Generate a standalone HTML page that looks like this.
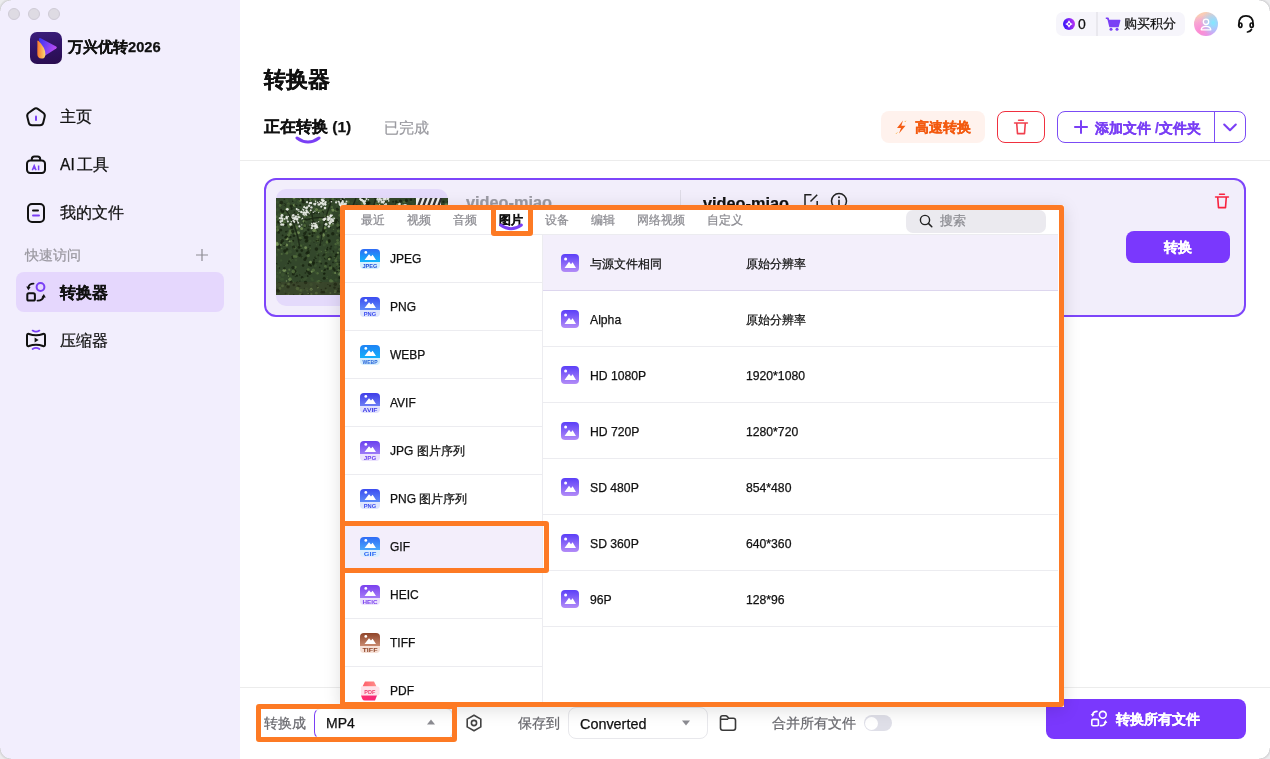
<!DOCTYPE html>
<html><head><meta charset="utf-8">
<style>
*{box-sizing:border-box;margin:0;padding:0}
html,body{width:1270px;height:759px;overflow:hidden;background:#fff;font-family:"Liberation Sans",sans-serif;color:#111}
.a{position:absolute}
.t{white-space:nowrap;will-change:transform;-webkit-text-stroke-width:0.25px}
svg{display:block}
</style></head><body>
<div class="a" style="left:0px;top:0px;width:240px;height:759px;background:#f2eefd"></div>
<div class="a" style="left:8px;top:8px;width:12px;height:12px;border-radius:50%;background:#dedbe3;border:1px solid #cfcbd6"></div>
<div class="a" style="left:28px;top:8px;width:12px;height:12px;border-radius:50%;background:#dedbe3;border:1px solid #cfcbd6"></div>
<div class="a" style="left:48px;top:8px;width:12px;height:12px;border-radius:50%;background:#dedbe3;border:1px solid #cfcbd6"></div>
<div class="a" style="left:30px;top:32px;width:32px;height:32px;border-radius:7px;background:linear-gradient(170deg,#3b1e7c 0%,#2f1262 55%,#2a0d4e 100%);overflow:hidden">
<svg width="32" height="32" viewBox="0 0 32 32"><defs>
<linearGradient id="lg1" x1="0" y1="0.2" x2="1" y2="0.6"><stop offset="0" stop-color="#3d35f5"/><stop offset="1" stop-color="#c24cf3"/></linearGradient>
<linearGradient id="lg2" x1="0" y1="0" x2="1" y2="0"><stop offset="0" stop-color="#f7762c"/><stop offset="1" stop-color="#fddc74"/></linearGradient></defs>
<path d="M8.8 6.8 Q9.6 5.6 11.2 6.4 L26.2 14.6 Q27.6 15.6 26.2 16.6 L14.5 24 Q12.5 25 12 23 Z" fill="url(#lg1)"/>
<path d="M7.4 9.2 Q7.6 8 8.6 9 Q15.6 16 15.4 22.4 Q15.2 26.6 11.5 26.6 Q7.4 26.4 7.3 22 Z" fill="url(#lg2)"/>
</svg></div>
<div class="a t" style="left:68px;top:38px;font-size:14.7px;line-height:19px;color:#111;font-weight:bold;">万兴优转2026</div>
<svg class="a" style="left:24px;top:105px" width="24" height="24" viewBox="0 0 24 24"><path d="M9.88 4.10Q12.00 2.60 14.12 4.10L19.18 7.70Q21.30 9.20 20.68 11.73L19.22 17.67Q18.60 20.20 16.00 20.20L8.00 20.20Q5.40 20.20 4.78 17.67L3.32 11.73Q2.70 9.20 4.82 7.70Z" fill="none" stroke="#111" stroke-width="2"/><path d="M12 11.5 V15" stroke="#7a3ff5" stroke-width="2" stroke-linecap="round"/></svg>
<div class="a t" style="left:60px;top:107px;font-size:15.6px;line-height:20px;color:#111;">主页</div>
<svg class="a" style="left:24px;top:153px" width="24" height="24" viewBox="0 0 24 24"><rect x="3" y="7.5" width="18" height="12.5" rx="3.2" fill="none" stroke="#111" stroke-width="2"/><path d="M7.8 7.5 V6.2 Q7.8 3.6 10.4 3.6 H13.6 Q16.2 3.6 16.2 6.2 V7.5" fill="none" stroke="#111" stroke-width="2"/><path d="M8.3 17.2 L10.2 12.6 L12.1 17.2 M9 15.6 H11.4 M14.6 12.6 V17.2" fill="none" stroke="#7a3ff5" stroke-width="1.5"/></svg>
<div class="a t" style="left:60px;top:155px;font-size:15.6px;line-height:20px;color:#111;word-spacing:-2px">AI 工具</div>
<svg class="a" style="left:24px;top:201px" width="24" height="24" viewBox="0 0 24 24"><rect x="4" y="3" width="16" height="18" rx="4" fill="none" stroke="#111" stroke-width="2"/><path d="M9 9.5 H14" stroke="#111" stroke-width="2" stroke-linecap="round"/><path d="M9 14.5 H15" stroke="#7a3ff5" stroke-width="2" stroke-linecap="round"/></svg>
<div class="a t" style="left:60px;top:203px;font-size:15.6px;line-height:20px;color:#111;">我的文件</div>
<div class="a t" style="left:25px;top:246px;font-size:14px;line-height:18px;color:#9a98a0;">快速访问</div>
<svg class="a" style="left:195px;top:248px" width="14" height="14" viewBox="0 0 14 14"><path d="M7 1 V13 M1 7 H13" stroke="#8e8c94" stroke-width="1.2"/></svg>
<div class="a" style="left:16px;top:272px;width:208px;height:40px;border-radius:8px;background:#e5d7fd"></div>
<svg class="a" style="left:24px;top:281px" width="24" height="24" viewBox="0 0 24 24"><circle cx="16.5" cy="6" r="3.9" fill="none" stroke="#7a3ff5" stroke-width="2"/><rect x="3.3" y="12.3" width="7.6" height="7.2" rx="1.6" fill="none" stroke="#111" stroke-width="2"/><path d="M9.5 2.6 Q5 2.6 4.3 6.5" fill="none" stroke="#111" stroke-width="1.9" stroke-linecap="round"/><path d="M2.2 5.6 L4.3 9.2 L6.6 6.2 Z" fill="#111"/><path d="M13.5 19.6 Q18.5 19.8 19.6 15.5" fill="none" stroke="#111" stroke-width="1.9" stroke-linecap="round"/><path d="M17.4 16.6 L19.8 13 L21.8 16.6 Z" fill="#111"/></svg>
<div class="a t" style="left:60px;top:283px;font-size:15.6px;line-height:20px;color:#111;font-weight:bold;">转换器</div>
<svg class="a" style="left:24px;top:329px" width="24" height="24" viewBox="0 0 24 24"><path d="M5 5 Q12 7.6 19 5 Q21 4.4 21 6.6 V15.4 Q21 17.6 19 17 Q12 14.4 5 17 Q3 17.6 3 15.4 V6.6 Q3 4.4 5 5 Z" fill="none" stroke="#111" stroke-width="2" stroke-linejoin="round"/><path d="M10.6 8.6 L14.6 11 L10.6 13.4 Z" fill="#111"/><path d="M8.6 1.6 Q12 3.8 15.4 1.6 M8.6 20 Q12 17.8 15.4 20" fill="none" stroke="#7a3ff5" stroke-width="1.8" stroke-linecap="round"/></svg>
<div class="a t" style="left:60px;top:331px;font-size:15.6px;line-height:20px;color:#111;">压缩器</div>
<div class="a" style="left:1056px;top:12px;width:129px;height:24px;border-radius:7px;background:#f6f5fb"></div>
<div class="a" style="left:1096px;top:12px;width:2px;height:24px;background:#e9e8ee"></div>
<svg class="a" style="left:1063px;top:18px" width="12" height="12" viewBox="0 0 12 12"><defs><linearGradient id="cg" x1="0" y1="0.3" x2="1" y2="0.1"><stop offset="0" stop-color="#3a16fa"/><stop offset="1" stop-color="#c437f2"/></linearGradient></defs><circle cx="6" cy="6" r="6" fill="url(#cg)"/><path d="M6 2.3 Q7 5 9.7 6 Q7 7 6 9.7 Q5 7 2.3 6 Q5 5 6 2.3 Z" fill="#fff"/><circle cx="6" cy="6" r="1" fill="#7a2af5"/></svg>
<div class="a t" style="left:1078px;top:15px;font-size:14px;line-height:18px;color:#111;">0</div>
<svg class="a" style="left:1105px;top:17px" width="16" height="14" viewBox="0 0 16 14"><path d="M0.8 1.2 H3 L5 9.5 H13 L14.6 3.5 H4" fill="#7a3ff5" stroke="#7a3ff5" stroke-width="1.6" stroke-linejoin="round"/><circle cx="6" cy="12.3" r="1.5" fill="#7a3ff5"/><circle cx="12" cy="12.3" r="1.5" fill="#7a3ff5"/></svg>
<div class="a t" style="left:1124px;top:15px;font-size:13px;line-height:18px;color:#111;">购买积分</div>
<div class="a" style="left:1194px;top:12px;width:24px;height:24px;border-radius:50%;background:radial-gradient(circle at 80% 45%,#7fe9ff 0%,rgba(127,233,255,0) 55%),radial-gradient(circle at 25% 80%,#ff8ccf 0%,rgba(255,140,207,0) 60%),linear-gradient(160deg,#ffd9a0,#e9a8f5 60%,#c79cff)"></div>
<svg class="a" style="left:1199px;top:17px" width="14" height="14" viewBox="0 0 14 14"><circle cx="7" cy="4.8" r="2.7" fill="none" stroke="#fff" stroke-width="1.3"/><path d="M2.2 12.8 Q2.5 9.3 7 9.3 Q11.5 9.3 11.8 12.8 Z" fill="none" stroke="#fff" stroke-width="1.3" stroke-linejoin="round"/></svg>
<svg class="a" style="left:1236px;top:13px" width="22" height="22" viewBox="0 0 22 22"><path d="M3 10.5 Q3 2.8 10 2.8 Q17 2.8 17 10.5 V12.5" fill="none" stroke="#111" stroke-width="1.8"/><path d="M3 10.5 V12.8" stroke="#111" stroke-width="1.8"/><ellipse cx="4.3" cy="12.2" rx="1.6" ry="2.2" fill="none" stroke="#111" stroke-width="1.7"/><ellipse cx="15.7" cy="12.2" rx="1.6" ry="2.2" fill="none" stroke="#111" stroke-width="1.7"/><path d="M15.5 16.5 Q14.5 18.5 11.5 19" fill="none" stroke="#111" stroke-width="1.7" stroke-linecap="round"/></svg>
<div class="a t" style="left:264px;top:67px;font-size:21.6px;line-height:26px;color:#111;font-weight:bold;">转换器</div>
<div class="a t" style="left:264px;top:117px;font-size:15.5px;line-height:20px;color:#111;font-weight:bold;">正在转换 (1)</div>
<svg class="a" style="left:294px;top:134px" width="28" height="12" viewBox="0 0 28 12"><path d="M3 4 Q14 12 25 4" fill="none" stroke="#7a3ff5" stroke-width="3" stroke-linecap="round"/></svg>
<div class="a t" style="left:384px;top:118px;font-size:15.4px;line-height:20px;color:#9a9aa0;">已完成</div>
<div class="a" style="left:881px;top:111px;width:104px;height:32px;border-radius:8px;background:#fff2ed"></div>
<svg class="a" style="left:894px;top:120px" width="14" height="14" viewBox="0 0 14 14"><path d="M9 0.5 L3 8 H7 L5 13.5 L11.5 5.8 H7.3 Z" fill="#f55d14"/><path d="M3.3 12.5 L2 13.8 M11.8 0.8 L10.8 2" stroke="#f9b24a" stroke-width="1"/></svg>
<div class="a t" style="left:915px;top:118px;font-size:14px;line-height:18px;color:#f35a10;font-weight:bold;">高速转换</div>
<div class="a" style="left:997px;top:111px;width:48px;height:32px;border-radius:8px;border:1.5px solid #f0303f"></div>
<svg class="a" style="left:1012px;top:118px" width="18" height="18" viewBox="0 0 18 18"><path d="M6.6 2.2 H11.4 M2.6 5 H15.4 M4.7 5 L5.5 15.6 H12.5 L13.3 5" fill="none" stroke="#f0404e" stroke-width="1.6" stroke-linejoin="round" stroke-linecap="round"/></svg>
<div class="a" style="left:1057px;top:111px;width:189px;height:32px;border-radius:8px;border:1.5px solid #7b4cf5"></div>
<div class="a" style="left:1214px;top:111px;width:1.2px;height:32px;background:#7b4cf5"></div>
<svg class="a" style="left:1073px;top:119px" width="16" height="16" viewBox="0 0 16 16"><path d="M8 1.2 V14.8 M1.2 8 H14.8" stroke="#7a3ff5" stroke-width="2"/></svg>
<div class="a t" style="left:1095px;top:119px;font-size:14px;line-height:18px;color:#7a3ff5;font-weight:bold;">添加文件 /文件夹</div>
<svg class="a" style="left:1222px;top:119px" width="16" height="16" viewBox="0 0 16 16"><path d="M2.2 5.6 L8 11.2 L13.8 5.6" fill="none" stroke="#7a3ff5" stroke-width="2.1" stroke-linecap="round" stroke-linejoin="round"/></svg>
<div class="a" style="left:240px;top:160px;width:1030px;height:1px;background:#ececec"></div>
<div class="a" style="left:264px;top:178px;width:982px;height:139px;border-radius:12px;border:2px solid #7d45fa;background:#f2eefb"></div>
<div class="a" style="left:276px;top:189px;width:172px;height:117px;border-radius:10px;background:#e4dafb"></div>
<svg class="a" style="left:276px;top:198px" width="172" height="97" viewBox="0 0 172 97"><rect width="172" height="97" fill="#33472b"/><circle cx="107.1" cy="72.0" r="1.5" fill="#7d9a5c" opacity="0.8"/><circle cx="127.3" cy="89.5" r="0.5" fill="#3c5431" opacity="0.8"/><circle cx="162.3" cy="63.0" r="1.7" fill="#17220f" opacity="0.8"/><circle cx="80.7" cy="23.9" r="1.2" fill="#3c5431" opacity="0.8"/><circle cx="2.3" cy="21.0" r="0.9" fill="#55703f" opacity="0.8"/><circle cx="131.7" cy="15.5" r="1.5" fill="#17220f" opacity="0.8"/><circle cx="106.2" cy="12.3" r="0.5" fill="#55703f" opacity="0.8"/><circle cx="36.0" cy="20.9" r="1.8" fill="#55703f" opacity="0.8"/><circle cx="49.8" cy="93.3" r="1.2" fill="#3c5431" opacity="0.8"/><circle cx="35.2" cy="91.3" r="1.4" fill="#7d9a5c" opacity="0.8"/><circle cx="153.7" cy="29.0" r="1.0" fill="#17220f" opacity="0.8"/><circle cx="25.1" cy="6.3" r="0.9" fill="#3c5431" opacity="0.8"/><circle cx="0.6" cy="65.8" r="0.9" fill="#17220f" opacity="0.8"/><circle cx="140.8" cy="46.6" r="0.9" fill="#3c5431" opacity="0.8"/><circle cx="121.2" cy="5.5" r="1.8" fill="#17220f" opacity="0.8"/><circle cx="129.0" cy="82.0" r="0.5" fill="#55703f" opacity="0.8"/><circle cx="63.0" cy="56.1" r="0.5" fill="#17220f" opacity="0.8"/><circle cx="31.1" cy="92.7" r="0.8" fill="#55703f" opacity="0.8"/><circle cx="159.9" cy="91.4" r="0.9" fill="#17220f" opacity="0.8"/><circle cx="90.2" cy="75.2" r="0.6" fill="#55703f" opacity="0.8"/><circle cx="137.1" cy="83.4" r="0.5" fill="#7d9a5c" opacity="0.8"/><circle cx="15.7" cy="33.1" r="1.3" fill="#55703f" opacity="0.8"/><circle cx="58.5" cy="89.6" r="1.2" fill="#17220f" opacity="0.8"/><circle cx="54.5" cy="17.2" r="0.6" fill="#17220f" opacity="0.8"/><circle cx="118.5" cy="96.7" r="0.7" fill="#17220f" opacity="0.8"/><circle cx="169.7" cy="51.8" r="1.0" fill="#17220f" opacity="0.8"/><circle cx="102.2" cy="80.2" r="1.1" fill="#3c5431" opacity="0.8"/><circle cx="9.6" cy="88.9" r="0.5" fill="#3c5431" opacity="0.8"/><circle cx="144.2" cy="12.7" r="1.5" fill="#7d9a5c" opacity="0.8"/><circle cx="108.4" cy="76.4" r="0.6" fill="#3c5431" opacity="0.8"/><circle cx="25.7" cy="81.9" r="0.9" fill="#3c5431" opacity="0.8"/><circle cx="171.9" cy="82.7" r="1.8" fill="#3c5431" opacity="0.8"/><circle cx="84.0" cy="70.8" r="1.1" fill="#17220f" opacity="0.8"/><circle cx="69.5" cy="14.2" r="1.0" fill="#7d9a5c" opacity="0.8"/><circle cx="165.1" cy="60.8" r="1.1" fill="#17220f" opacity="0.8"/><circle cx="15.3" cy="26.4" r="1.5" fill="#55703f" opacity="0.8"/><circle cx="62.1" cy="76.2" r="1.5" fill="#3c5431" opacity="0.8"/><circle cx="114.2" cy="73.7" r="1.0" fill="#3c5431" opacity="0.8"/><circle cx="48.3" cy="47.1" r="1.5" fill="#3c5431" opacity="0.8"/><circle cx="50.5" cy="91.7" r="1.3" fill="#3c5431" opacity="0.8"/><circle cx="2.0" cy="53.1" r="0.8" fill="#3c5431" opacity="0.8"/><circle cx="79.6" cy="79.2" r="1.3" fill="#55703f" opacity="0.8"/><circle cx="59.8" cy="62.5" r="1.5" fill="#55703f" opacity="0.8"/><circle cx="60.2" cy="81.8" r="1.6" fill="#3c5431" opacity="0.8"/><circle cx="167.9" cy="92.8" r="1.2" fill="#3c5431" opacity="0.8"/><circle cx="28.6" cy="81.2" r="1.7" fill="#3c5431" opacity="0.8"/><circle cx="118.9" cy="69.8" r="1.4" fill="#17220f" opacity="0.8"/><circle cx="134.2" cy="56.3" r="1.4" fill="#3c5431" opacity="0.8"/><circle cx="107.3" cy="75.1" r="1.3" fill="#3c5431" opacity="0.8"/><circle cx="4.8" cy="15.5" r="1.1" fill="#3c5431" opacity="0.8"/><circle cx="37.7" cy="66.5" r="1.3" fill="#17220f" opacity="0.8"/><circle cx="81.1" cy="21.9" r="0.6" fill="#17220f" opacity="0.8"/><circle cx="54.6" cy="17.6" r="0.8" fill="#17220f" opacity="0.8"/><circle cx="80.0" cy="36.9" r="1.3" fill="#3c5431" opacity="0.8"/><circle cx="40.9" cy="87.6" r="0.5" fill="#17220f" opacity="0.8"/><circle cx="47.9" cy="39.8" r="0.6" fill="#55703f" opacity="0.8"/><circle cx="64.3" cy="3.5" r="1.3" fill="#17220f" opacity="0.8"/><circle cx="93.8" cy="32.9" r="1.3" fill="#7d9a5c" opacity="0.8"/><circle cx="140.8" cy="40.7" r="1.6" fill="#3c5431" opacity="0.8"/><circle cx="63.5" cy="13.8" r="1.3" fill="#3c5431" opacity="0.8"/><circle cx="164.6" cy="93.9" r="1.3" fill="#17220f" opacity="0.8"/><circle cx="153.7" cy="0.1" r="0.6" fill="#3c5431" opacity="0.8"/><circle cx="105.8" cy="13.6" r="1.3" fill="#55703f" opacity="0.8"/><circle cx="64.6" cy="41.9" r="0.8" fill="#17220f" opacity="0.8"/><circle cx="167.3" cy="36.8" r="1.7" fill="#55703f" opacity="0.8"/><circle cx="102.5" cy="25.2" r="1.8" fill="#3c5431" opacity="0.8"/><circle cx="71.5" cy="31.0" r="1.8" fill="#3c5431" opacity="0.8"/><circle cx="49.3" cy="46.3" r="0.7" fill="#3c5431" opacity="0.8"/><circle cx="76.3" cy="28.4" r="1.5" fill="#55703f" opacity="0.8"/><circle cx="2.3" cy="51.7" r="0.9" fill="#55703f" opacity="0.8"/><circle cx="134.5" cy="23.8" r="0.8" fill="#17220f" opacity="0.8"/><circle cx="170.1" cy="28.4" r="1.3" fill="#3c5431" opacity="0.8"/><circle cx="110.9" cy="58.6" r="1.5" fill="#17220f" opacity="0.8"/><circle cx="130.8" cy="29.2" r="1.2" fill="#17220f" opacity="0.8"/><circle cx="51.1" cy="51.4" r="1.1" fill="#17220f" opacity="0.8"/><circle cx="128.1" cy="57.3" r="0.5" fill="#17220f" opacity="0.8"/><circle cx="78.4" cy="88.9" r="1.7" fill="#3c5431" opacity="0.8"/><circle cx="2.5" cy="75.5" r="1.1" fill="#3c5431" opacity="0.8"/><circle cx="121.8" cy="61.3" r="1.1" fill="#55703f" opacity="0.8"/><circle cx="66.3" cy="38.0" r="1.6" fill="#17220f" opacity="0.8"/><circle cx="51.0" cy="80.5" r="0.6" fill="#55703f" opacity="0.8"/><circle cx="119.5" cy="42.0" r="0.9" fill="#55703f" opacity="0.8"/><circle cx="156.6" cy="13.8" r="1.1" fill="#3c5431" opacity="0.8"/><circle cx="85.6" cy="32.1" r="0.7" fill="#3c5431" opacity="0.8"/><circle cx="139.6" cy="6.6" r="0.8" fill="#55703f" opacity="0.8"/><circle cx="136.2" cy="64.4" r="0.5" fill="#3c5431" opacity="0.8"/><circle cx="168.3" cy="96.8" r="1.4" fill="#17220f" opacity="0.8"/><circle cx="144.8" cy="21.3" r="1.3" fill="#7d9a5c" opacity="0.8"/><circle cx="122.5" cy="13.1" r="0.9" fill="#55703f" opacity="0.8"/><circle cx="25.8" cy="59.2" r="1.0" fill="#17220f" opacity="0.8"/><circle cx="107.1" cy="4.2" r="0.6" fill="#17220f" opacity="0.8"/><circle cx="12.4" cy="5.6" r="1.2" fill="#55703f" opacity="0.8"/><circle cx="151.1" cy="13.0" r="1.1" fill="#17220f" opacity="0.8"/><circle cx="103.2" cy="47.5" r="1.7" fill="#17220f" opacity="0.8"/><circle cx="9.6" cy="67.6" r="0.7" fill="#3c5431" opacity="0.8"/><circle cx="87.0" cy="88.3" r="1.2" fill="#3c5431" opacity="0.8"/><circle cx="45.3" cy="53.5" r="0.8" fill="#55703f" opacity="0.8"/><circle cx="88.9" cy="13.0" r="0.8" fill="#17220f" opacity="0.8"/><circle cx="126.7" cy="17.4" r="1.4" fill="#3c5431" opacity="0.8"/><circle cx="14.7" cy="64.8" r="0.6" fill="#17220f" opacity="0.8"/><circle cx="102.2" cy="23.1" r="1.6" fill="#3c5431" opacity="0.8"/><circle cx="55.6" cy="77.3" r="0.5" fill="#3c5431" opacity="0.8"/><circle cx="9.2" cy="14.6" r="1.7" fill="#3c5431" opacity="0.8"/><circle cx="38.4" cy="11.3" r="1.8" fill="#3c5431" opacity="0.8"/><circle cx="141.1" cy="13.6" r="1.3" fill="#17220f" opacity="0.8"/><circle cx="40.4" cy="32.3" r="1.3" fill="#17220f" opacity="0.8"/><circle cx="66.3" cy="13.2" r="1.6" fill="#3c5431" opacity="0.8"/><circle cx="138.4" cy="42.0" r="1.6" fill="#3c5431" opacity="0.8"/><circle cx="101.9" cy="55.6" r="1.5" fill="#17220f" opacity="0.8"/><circle cx="16.7" cy="3.2" r="0.8" fill="#17220f" opacity="0.8"/><circle cx="153.0" cy="46.7" r="1.5" fill="#17220f" opacity="0.8"/><circle cx="80.9" cy="86.3" r="1.3" fill="#3c5431" opacity="0.8"/><circle cx="80.1" cy="9.7" r="0.7" fill="#17220f" opacity="0.8"/><circle cx="64.4" cy="37.4" r="1.6" fill="#17220f" opacity="0.8"/><circle cx="43.7" cy="26.9" r="0.7" fill="#17220f" opacity="0.8"/><circle cx="40.4" cy="46.8" r="0.5" fill="#55703f" opacity="0.8"/><circle cx="63.5" cy="91.0" r="1.4" fill="#3c5431" opacity="0.8"/><circle cx="81.1" cy="91.7" r="0.7" fill="#3c5431" opacity="0.8"/><circle cx="50.1" cy="65.4" r="1.4" fill="#17220f" opacity="0.8"/><circle cx="34.6" cy="2.4" r="0.8" fill="#17220f" opacity="0.8"/><circle cx="69.0" cy="94.4" r="1.0" fill="#17220f" opacity="0.8"/><circle cx="80.5" cy="27.5" r="1.5" fill="#3c5431" opacity="0.8"/><circle cx="28.1" cy="23.3" r="1.4" fill="#7d9a5c" opacity="0.8"/><circle cx="111.1" cy="41.8" r="1.8" fill="#17220f" opacity="0.8"/><circle cx="10.5" cy="75.6" r="1.0" fill="#17220f" opacity="0.8"/><circle cx="94.3" cy="96.0" r="1.2" fill="#17220f" opacity="0.8"/><circle cx="16.1" cy="6.9" r="1.7" fill="#3c5431" opacity="0.8"/><circle cx="160.9" cy="5.2" r="0.8" fill="#17220f" opacity="0.8"/><circle cx="68.3" cy="5.8" r="0.8" fill="#17220f" opacity="0.8"/><circle cx="52.6" cy="5.0" r="0.5" fill="#7d9a5c" opacity="0.8"/><circle cx="30.9" cy="49.3" r="1.0" fill="#3c5431" opacity="0.8"/><circle cx="14.5" cy="30.4" r="0.6" fill="#3c5431" opacity="0.8"/><circle cx="158.5" cy="58.0" r="1.6" fill="#17220f" opacity="0.8"/><circle cx="3.0" cy="52.3" r="1.1" fill="#3c5431" opacity="0.8"/><circle cx="64.8" cy="60.6" r="1.4" fill="#55703f" opacity="0.8"/><circle cx="52.9" cy="43.6" r="1.6" fill="#17220f" opacity="0.8"/><circle cx="19.9" cy="30.2" r="0.6" fill="#55703f" opacity="0.8"/><circle cx="140.9" cy="30.3" r="0.7" fill="#17220f" opacity="0.8"/><circle cx="42.1" cy="8.2" r="1.1" fill="#3c5431" opacity="0.8"/><circle cx="42.2" cy="6.0" r="1.4" fill="#17220f" opacity="0.8"/><circle cx="34.4" cy="27.7" r="1.0" fill="#17220f" opacity="0.8"/><circle cx="72.3" cy="30.5" r="1.5" fill="#3c5431" opacity="0.8"/><circle cx="154.1" cy="63.4" r="1.5" fill="#3c5431" opacity="0.8"/><circle cx="76.1" cy="79.2" r="1.4" fill="#7d9a5c" opacity="0.8"/><circle cx="125.2" cy="68.0" r="0.8" fill="#55703f" opacity="0.8"/><circle cx="65.8" cy="12.6" r="0.6" fill="#17220f" opacity="0.8"/><circle cx="45.2" cy="65.6" r="0.9" fill="#17220f" opacity="0.8"/><circle cx="131.4" cy="54.1" r="0.5" fill="#17220f" opacity="0.8"/><circle cx="22.4" cy="34.6" r="1.6" fill="#7d9a5c" opacity="0.8"/><circle cx="105.3" cy="22.4" r="1.1" fill="#17220f" opacity="0.8"/><circle cx="56.8" cy="1.2" r="1.3" fill="#55703f" opacity="0.8"/><circle cx="125.0" cy="9.2" r="1.2" fill="#17220f" opacity="0.8"/><circle cx="122.0" cy="43.3" r="1.7" fill="#55703f" opacity="0.8"/><circle cx="20.3" cy="30.8" r="1.7" fill="#3c5431" opacity="0.8"/><circle cx="74.7" cy="42.8" r="1.5" fill="#55703f" opacity="0.8"/><circle cx="91.6" cy="94.1" r="1.3" fill="#17220f" opacity="0.8"/><circle cx="140.1" cy="40.7" r="0.6" fill="#7d9a5c" opacity="0.8"/><circle cx="5.7" cy="56.0" r="1.1" fill="#55703f" opacity="0.8"/><circle cx="67.5" cy="20.9" r="0.9" fill="#17220f" opacity="0.8"/><circle cx="96.7" cy="34.6" r="1.5" fill="#17220f" opacity="0.8"/><circle cx="60.5" cy="24.1" r="1.8" fill="#55703f" opacity="0.8"/><circle cx="146.2" cy="60.0" r="1.0" fill="#17220f" opacity="0.8"/><circle cx="143.0" cy="47.5" r="0.5" fill="#17220f" opacity="0.8"/><circle cx="17.0" cy="69.6" r="1.7" fill="#17220f" opacity="0.8"/><circle cx="137.1" cy="31.4" r="1.4" fill="#55703f" opacity="0.8"/><circle cx="107.2" cy="77.6" r="1.0" fill="#17220f" opacity="0.8"/><circle cx="88.0" cy="56.9" r="0.7" fill="#17220f" opacity="0.8"/><circle cx="54.6" cy="2.6" r="0.9" fill="#17220f" opacity="0.8"/><circle cx="81.9" cy="68.2" r="1.0" fill="#7d9a5c" opacity="0.8"/><circle cx="140.3" cy="89.6" r="1.4" fill="#3c5431" opacity="0.8"/><circle cx="92.3" cy="77.5" r="1.0" fill="#3c5431" opacity="0.8"/><circle cx="116.9" cy="50.7" r="0.9" fill="#17220f" opacity="0.8"/><circle cx="15.0" cy="34.5" r="1.3" fill="#55703f" opacity="0.8"/><circle cx="122.9" cy="29.8" r="1.7" fill="#17220f" opacity="0.8"/><circle cx="123.2" cy="7.0" r="1.5" fill="#3c5431" opacity="0.8"/><circle cx="164.6" cy="87.0" r="1.4" fill="#55703f" opacity="0.8"/><circle cx="127.0" cy="59.3" r="0.8" fill="#3c5431" opacity="0.8"/><circle cx="154.1" cy="23.2" r="1.8" fill="#3c5431" opacity="0.8"/><circle cx="67.7" cy="0.3" r="1.0" fill="#17220f" opacity="0.8"/><circle cx="112.3" cy="87.3" r="1.7" fill="#3c5431" opacity="0.8"/><circle cx="66.5" cy="10.6" r="1.4" fill="#3c5431" opacity="0.8"/><circle cx="123.0" cy="36.3" r="1.7" fill="#17220f" opacity="0.8"/><circle cx="52.6" cy="26.0" r="1.3" fill="#55703f" opacity="0.8"/><circle cx="28.8" cy="61.4" r="1.5" fill="#17220f" opacity="0.8"/><circle cx="10.8" cy="54.9" r="1.6" fill="#55703f" opacity="0.8"/><circle cx="125.2" cy="40.4" r="1.1" fill="#3c5431" opacity="0.8"/><circle cx="155.6" cy="29.3" r="0.9" fill="#3c5431" opacity="0.8"/><circle cx="166.2" cy="18.2" r="0.5" fill="#17220f" opacity="0.8"/><circle cx="96.8" cy="58.5" r="0.7" fill="#17220f" opacity="0.8"/><circle cx="102.3" cy="62.7" r="1.4" fill="#3c5431" opacity="0.8"/><circle cx="10.6" cy="47.0" r="1.6" fill="#7d9a5c" opacity="0.8"/><circle cx="54.8" cy="82.5" r="1.3" fill="#55703f" opacity="0.8"/><circle cx="39.4" cy="67.6" r="1.6" fill="#3c5431" opacity="0.8"/><circle cx="17.3" cy="18.8" r="0.7" fill="#17220f" opacity="0.8"/><circle cx="26.1" cy="59.7" r="0.6" fill="#55703f" opacity="0.8"/><circle cx="126.6" cy="79.2" r="1.5" fill="#3c5431" opacity="0.8"/><circle cx="158.9" cy="92.8" r="1.3" fill="#7d9a5c" opacity="0.8"/><circle cx="17.8" cy="10.0" r="0.6" fill="#17220f" opacity="0.8"/><circle cx="64.4" cy="44.5" r="1.4" fill="#55703f" opacity="0.8"/><circle cx="14.4" cy="39.1" r="1.2" fill="#17220f" opacity="0.8"/><circle cx="20.2" cy="57.9" r="1.0" fill="#3c5431" opacity="0.8"/><circle cx="85.2" cy="93.4" r="1.7" fill="#17220f" opacity="0.8"/><circle cx="130.7" cy="70.0" r="0.9" fill="#17220f" opacity="0.8"/><circle cx="82.4" cy="34.4" r="1.5" fill="#55703f" opacity="0.8"/><circle cx="65.7" cy="28.2" r="1.1" fill="#3c5431" opacity="0.8"/><circle cx="135.7" cy="55.8" r="0.9" fill="#17220f" opacity="0.8"/><circle cx="145.9" cy="50.4" r="0.6" fill="#3c5431" opacity="0.8"/><circle cx="40.9" cy="64.6" r="0.6" fill="#17220f" opacity="0.8"/><circle cx="16.5" cy="46.3" r="1.8" fill="#3c5431" opacity="0.8"/><circle cx="66.4" cy="90.6" r="0.6" fill="#17220f" opacity="0.8"/><circle cx="139.5" cy="0.5" r="1.5" fill="#17220f" opacity="0.8"/><circle cx="2.8" cy="24.3" r="1.1" fill="#17220f" opacity="0.8"/><circle cx="88.9" cy="5.2" r="0.8" fill="#7d9a5c" opacity="0.8"/><circle cx="76.1" cy="45.8" r="0.6" fill="#17220f" opacity="0.8"/><circle cx="164.2" cy="66.6" r="1.2" fill="#17220f" opacity="0.8"/><circle cx="67.5" cy="75.5" r="1.1" fill="#3c5431" opacity="0.8"/><circle cx="155.2" cy="62.6" r="1.3" fill="#17220f" opacity="0.8"/><circle cx="4.1" cy="74.6" r="1.0" fill="#55703f" opacity="0.8"/><circle cx="142.0" cy="88.8" r="1.0" fill="#7d9a5c" opacity="0.8"/><circle cx="130.1" cy="86.5" r="0.7" fill="#55703f" opacity="0.8"/><circle cx="72.6" cy="94.3" r="1.8" fill="#17220f" opacity="0.8"/><circle cx="72.5" cy="26.3" r="1.1" fill="#17220f" opacity="0.8"/><circle cx="114.6" cy="12.0" r="0.7" fill="#3c5431" opacity="0.8"/><circle cx="12.7" cy="37.0" r="1.7" fill="#55703f" opacity="0.8"/><circle cx="33.8" cy="1.8" r="1.6" fill="#7d9a5c" opacity="0.8"/><circle cx="103.0" cy="13.2" r="0.8" fill="#55703f" opacity="0.8"/><circle cx="161.3" cy="3.0" r="0.7" fill="#3c5431" opacity="0.8"/><circle cx="45.9" cy="73.1" r="1.0" fill="#55703f" opacity="0.8"/><circle cx="26.1" cy="50.3" r="1.8" fill="#3c5431" opacity="0.8"/><circle cx="15.5" cy="10.8" r="1.3" fill="#17220f" opacity="0.8"/><circle cx="63.4" cy="46.3" r="1.3" fill="#7d9a5c" opacity="0.8"/><circle cx="41.4" cy="55.2" r="0.8" fill="#3c5431" opacity="0.8"/><circle cx="125.8" cy="13.0" r="1.1" fill="#3c5431" opacity="0.8"/><circle cx="1.4" cy="74.8" r="1.0" fill="#3c5431" opacity="0.8"/><circle cx="105.0" cy="76.9" r="0.6" fill="#3c5431" opacity="0.8"/><circle cx="6.6" cy="37.4" r="0.9" fill="#17220f" opacity="0.8"/><circle cx="51.2" cy="43.7" r="1.4" fill="#55703f" opacity="0.8"/><circle cx="63.7" cy="51.4" r="1.4" fill="#55703f" opacity="0.8"/><circle cx="163.3" cy="95.8" r="0.9" fill="#17220f" opacity="0.8"/><circle cx="160.3" cy="7.5" r="1.1" fill="#3c5431" opacity="0.8"/><circle cx="90.9" cy="37.7" r="1.7" fill="#17220f" opacity="0.8"/><circle cx="94.9" cy="80.5" r="0.7" fill="#17220f" opacity="0.8"/><circle cx="85.0" cy="54.9" r="0.8" fill="#3c5431" opacity="0.8"/><circle cx="10.3" cy="8.5" r="0.9" fill="#17220f" opacity="0.8"/><circle cx="166.4" cy="25.5" r="0.9" fill="#55703f" opacity="0.8"/><circle cx="127.5" cy="25.4" r="1.6" fill="#3c5431" opacity="0.8"/><circle cx="66.8" cy="61.0" r="0.8" fill="#17220f" opacity="0.8"/><circle cx="150.8" cy="42.5" r="1.7" fill="#17220f" opacity="0.8"/><circle cx="23.6" cy="5.0" r="1.5" fill="#3c5431" opacity="0.8"/><circle cx="1.7" cy="4.2" r="1.6" fill="#3c5431" opacity="0.8"/><circle cx="149.9" cy="3.9" r="1.3" fill="#17220f" opacity="0.8"/><circle cx="124.0" cy="59.3" r="1.3" fill="#17220f" opacity="0.8"/><circle cx="163.2" cy="10.8" r="0.6" fill="#3c5431" opacity="0.8"/><circle cx="16.0" cy="6.5" r="1.1" fill="#3c5431" opacity="0.8"/><circle cx="153.4" cy="69.9" r="0.6" fill="#3c5431" opacity="0.8"/><circle cx="145.1" cy="11.7" r="1.5" fill="#17220f" opacity="0.8"/><circle cx="51.4" cy="0.1" r="1.5" fill="#3c5431" opacity="0.8"/><circle cx="155.1" cy="45.2" r="0.7" fill="#17220f" opacity="0.8"/><circle cx="45.3" cy="91.8" r="0.8" fill="#17220f" opacity="0.8"/><circle cx="60.7" cy="7.7" r="1.1" fill="#3c5431" opacity="0.8"/><circle cx="111.9" cy="17.0" r="0.7" fill="#3c5431" opacity="0.8"/><circle cx="118.2" cy="43.4" r="1.2" fill="#55703f" opacity="0.8"/><circle cx="24.9" cy="26.0" r="1.1" fill="#3c5431" opacity="0.8"/><circle cx="154.8" cy="53.9" r="1.4" fill="#17220f" opacity="0.8"/><circle cx="134.9" cy="81.1" r="0.9" fill="#17220f" opacity="0.8"/><circle cx="44.6" cy="34.7" r="1.7" fill="#17220f" opacity="0.8"/><circle cx="108.3" cy="62.1" r="1.7" fill="#17220f" opacity="0.8"/><circle cx="132.4" cy="32.6" r="0.6" fill="#3c5431" opacity="0.8"/><circle cx="145.2" cy="56.5" r="0.6" fill="#7d9a5c" opacity="0.8"/><circle cx="66.1" cy="61.7" r="1.4" fill="#17220f" opacity="0.8"/><circle cx="70.2" cy="31.9" r="0.6" fill="#17220f" opacity="0.8"/><circle cx="123.3" cy="39.8" r="1.6" fill="#17220f" opacity="0.8"/><circle cx="51.8" cy="17.5" r="1.7" fill="#55703f" opacity="0.8"/><circle cx="154.2" cy="49.1" r="0.6" fill="#17220f" opacity="0.8"/><circle cx="38.9" cy="2.6" r="1.2" fill="#17220f" opacity="0.8"/><circle cx="18.6" cy="49.6" r="1.7" fill="#7d9a5c" opacity="0.8"/><circle cx="80.2" cy="10.0" r="1.5" fill="#17220f" opacity="0.8"/><circle cx="92.4" cy="8.1" r="1.8" fill="#3c5431" opacity="0.8"/><circle cx="75.2" cy="26.4" r="1.2" fill="#7d9a5c" opacity="0.8"/><circle cx="73.6" cy="20.3" r="1.2" fill="#55703f" opacity="0.8"/><circle cx="65.7" cy="61.5" r="1.7" fill="#17220f" opacity="0.8"/><circle cx="139.5" cy="51.3" r="0.7" fill="#17220f" opacity="0.8"/><circle cx="161.5" cy="45.2" r="1.1" fill="#55703f" opacity="0.8"/><circle cx="98.7" cy="48.5" r="0.9" fill="#55703f" opacity="0.8"/><circle cx="44.1" cy="45.6" r="1.5" fill="#3c5431" opacity="0.8"/><circle cx="23.1" cy="19.7" r="1.4" fill="#3c5431" opacity="0.8"/><circle cx="17.7" cy="96.8" r="0.7" fill="#17220f" opacity="0.8"/><circle cx="15.4" cy="43.3" r="1.3" fill="#55703f" opacity="0.8"/><circle cx="28.1" cy="67.8" r="0.6" fill="#3c5431" opacity="0.8"/><circle cx="43.3" cy="34.6" r="0.6" fill="#3c5431" opacity="0.8"/><circle cx="21.0" cy="74.1" r="0.9" fill="#3c5431" opacity="0.8"/><circle cx="109.9" cy="47.4" r="1.6" fill="#55703f" opacity="0.8"/><circle cx="48.5" cy="32.4" r="1.6" fill="#17220f" opacity="0.8"/><circle cx="72.3" cy="40.2" r="1.8" fill="#17220f" opacity="0.8"/><circle cx="112.7" cy="73.4" r="1.4" fill="#17220f" opacity="0.8"/><circle cx="162.3" cy="30.3" r="1.6" fill="#3c5431" opacity="0.8"/><circle cx="72.4" cy="81.3" r="1.4" fill="#17220f" opacity="0.8"/><circle cx="125.9" cy="49.0" r="1.4" fill="#3c5431" opacity="0.8"/><circle cx="136.9" cy="15.5" r="1.1" fill="#17220f" opacity="0.8"/><circle cx="136.0" cy="74.8" r="1.6" fill="#17220f" opacity="0.8"/><circle cx="92.1" cy="46.4" r="0.7" fill="#17220f" opacity="0.8"/><circle cx="167.6" cy="82.7" r="0.8" fill="#55703f" opacity="0.8"/><circle cx="112.0" cy="37.3" r="1.3" fill="#17220f" opacity="0.8"/><circle cx="47.1" cy="1.0" r="1.4" fill="#3c5431" opacity="0.8"/><circle cx="127.9" cy="48.9" r="1.1" fill="#17220f" opacity="0.8"/><circle cx="126.5" cy="36.2" r="1.3" fill="#55703f" opacity="0.8"/><circle cx="76.5" cy="66.6" r="0.6" fill="#17220f" opacity="0.8"/><circle cx="144.6" cy="14.3" r="0.6" fill="#17220f" opacity="0.8"/><circle cx="131.8" cy="10.3" r="1.1" fill="#3c5431" opacity="0.8"/><circle cx="138.1" cy="46.2" r="1.2" fill="#17220f" opacity="0.8"/><circle cx="136.8" cy="74.4" r="1.3" fill="#55703f" opacity="0.8"/><circle cx="105.6" cy="69.5" r="1.6" fill="#3c5431" opacity="0.8"/><circle cx="3.5" cy="85.8" r="1.8" fill="#17220f" opacity="0.8"/><circle cx="11.4" cy="33.0" r="0.6" fill="#17220f" opacity="0.8"/><circle cx="15.3" cy="21.4" r="0.5" fill="#3c5431" opacity="0.8"/><circle cx="51.6" cy="70.7" r="1.0" fill="#17220f" opacity="0.8"/><circle cx="164.0" cy="86.8" r="1.4" fill="#17220f" opacity="0.8"/><circle cx="69.3" cy="43.7" r="1.0" fill="#17220f" opacity="0.8"/><circle cx="78.4" cy="74.5" r="1.4" fill="#55703f" opacity="0.8"/><circle cx="117.5" cy="74.0" r="1.6" fill="#55703f" opacity="0.8"/><circle cx="136.4" cy="40.4" r="1.4" fill="#3c5431" opacity="0.8"/><circle cx="151.8" cy="69.2" r="1.1" fill="#17220f" opacity="0.8"/><circle cx="56.3" cy="24.3" r="1.4" fill="#55703f" opacity="0.8"/><circle cx="33.0" cy="51.7" r="1.6" fill="#17220f" opacity="0.8"/><circle cx="16.3" cy="58.7" r="1.0" fill="#17220f" opacity="0.8"/><circle cx="49.5" cy="0.7" r="0.7" fill="#3c5431" opacity="0.8"/><circle cx="18.0" cy="0.6" r="1.2" fill="#7d9a5c" opacity="0.8"/><circle cx="143.4" cy="31.6" r="1.7" fill="#17220f" opacity="0.8"/><circle cx="25.9" cy="0.7" r="0.6" fill="#3c5431" opacity="0.8"/><circle cx="130.2" cy="46.3" r="1.5" fill="#3c5431" opacity="0.8"/><circle cx="158.0" cy="59.0" r="1.2" fill="#17220f" opacity="0.8"/><circle cx="73.4" cy="42.7" r="1.6" fill="#17220f" opacity="0.8"/><circle cx="50.7" cy="79.2" r="0.6" fill="#3c5431" opacity="0.8"/><circle cx="37.8" cy="64.5" r="1.3" fill="#17220f" opacity="0.8"/><circle cx="125.6" cy="39.5" r="0.9" fill="#55703f" opacity="0.8"/><circle cx="133.9" cy="30.0" r="1.4" fill="#17220f" opacity="0.8"/><circle cx="89.2" cy="8.0" r="1.3" fill="#55703f" opacity="0.8"/><circle cx="109.4" cy="3.9" r="1.2" fill="#3c5431" opacity="0.8"/><circle cx="76.2" cy="14.7" r="0.9" fill="#3c5431" opacity="0.8"/><circle cx="12.2" cy="65.4" r="0.8" fill="#17220f" opacity="0.8"/><circle cx="15.6" cy="29.4" r="1.7" fill="#17220f" opacity="0.8"/><circle cx="16.5" cy="33.5" r="1.7" fill="#17220f" opacity="0.8"/><circle cx="58.9" cy="20.3" r="1.4" fill="#3c5431" opacity="0.8"/><circle cx="16.9" cy="83.6" r="0.9" fill="#3c5431" opacity="0.8"/><circle cx="77.9" cy="84.6" r="0.6" fill="#17220f" opacity="0.8"/><circle cx="49.1" cy="25.6" r="1.6" fill="#3c5431" opacity="0.8"/><circle cx="59.6" cy="49.2" r="1.6" fill="#3c5431" opacity="0.8"/><circle cx="77.6" cy="63.7" r="1.3" fill="#17220f" opacity="0.8"/><circle cx="73.3" cy="12.8" r="1.1" fill="#55703f" opacity="0.8"/><circle cx="52.6" cy="35.4" r="1.3" fill="#3c5431" opacity="0.8"/><circle cx="30.2" cy="43.3" r="1.5" fill="#17220f" opacity="0.8"/><circle cx="18.7" cy="73.3" r="1.7" fill="#17220f" opacity="0.8"/><circle cx="14.0" cy="60.8" r="0.9" fill="#3c5431" opacity="0.8"/><circle cx="5.9" cy="44.3" r="0.7" fill="#17220f" opacity="0.8"/><circle cx="119.3" cy="49.5" r="1.6" fill="#55703f" opacity="0.8"/><circle cx="106.5" cy="82.2" r="0.7" fill="#3c5431" opacity="0.8"/><circle cx="55.0" cy="60.6" r="0.6" fill="#55703f" opacity="0.8"/><circle cx="63.7" cy="76.0" r="1.7" fill="#7d9a5c" opacity="0.8"/><circle cx="67.1" cy="83.1" r="1.8" fill="#17220f" opacity="0.8"/><circle cx="128.6" cy="70.5" r="1.1" fill="#17220f" opacity="0.8"/><circle cx="29.8" cy="39.9" r="1.7" fill="#17220f" opacity="0.8"/><circle cx="43.9" cy="60.1" r="1.1" fill="#3c5431" opacity="0.8"/><circle cx="78.2" cy="27.8" r="0.5" fill="#55703f" opacity="0.8"/><circle cx="113.3" cy="23.6" r="1.1" fill="#3c5431" opacity="0.8"/><circle cx="86.6" cy="87.4" r="1.5" fill="#17220f" opacity="0.8"/><circle cx="58.3" cy="59.3" r="0.7" fill="#55703f" opacity="0.8"/><circle cx="7.8" cy="48.5" r="0.9" fill="#3c5431" opacity="0.8"/><circle cx="7.8" cy="21.7" r="1.8" fill="#55703f" opacity="0.8"/><circle cx="38.0" cy="44.2" r="0.5" fill="#17220f" opacity="0.8"/><circle cx="33.0" cy="95.5" r="0.9" fill="#17220f" opacity="0.8"/><circle cx="11.2" cy="10.7" r="1.8" fill="#55703f" opacity="0.8"/><circle cx="158.3" cy="81.1" r="1.5" fill="#17220f" opacity="0.8"/><circle cx="29.1" cy="26.2" r="0.6" fill="#17220f" opacity="0.8"/><circle cx="123.8" cy="47.6" r="0.5" fill="#17220f" opacity="0.8"/><circle cx="146.1" cy="82.5" r="1.4" fill="#3c5431" opacity="0.8"/><circle cx="156.8" cy="54.0" r="1.0" fill="#3c5431" opacity="0.8"/><circle cx="48.6" cy="3.5" r="0.8" fill="#3c5431" opacity="0.8"/><circle cx="20.7" cy="7.8" r="0.8" fill="#17220f" opacity="0.8"/><circle cx="164.6" cy="47.2" r="1.6" fill="#55703f" opacity="0.8"/><circle cx="101.9" cy="31.3" r="1.0" fill="#17220f" opacity="0.8"/><circle cx="109.1" cy="82.9" r="1.5" fill="#17220f" opacity="0.8"/><circle cx="25.7" cy="0.9" r="1.3" fill="#17220f" opacity="0.8"/><circle cx="1.0" cy="29.3" r="0.8" fill="#17220f" opacity="0.8"/><circle cx="114.3" cy="56.7" r="0.9" fill="#3c5431" opacity="0.8"/><circle cx="35.5" cy="89.4" r="0.7" fill="#3c5431" opacity="0.8"/><circle cx="121.2" cy="71.0" r="1.1" fill="#55703f" opacity="0.8"/><circle cx="108.2" cy="67.0" r="0.6" fill="#17220f" opacity="0.8"/><circle cx="80.1" cy="52.9" r="0.6" fill="#55703f" opacity="0.8"/><circle cx="59.6" cy="46.1" r="1.2" fill="#55703f" opacity="0.8"/><circle cx="52.0" cy="54.3" r="1.3" fill="#3c5431" opacity="0.8"/><circle cx="53.7" cy="27.1" r="1.1" fill="#3c5431" opacity="0.8"/><circle cx="110.9" cy="13.0" r="1.1" fill="#3c5431" opacity="0.8"/><circle cx="33.5" cy="9.9" r="1.7" fill="#17220f" opacity="0.8"/><circle cx="85.8" cy="28.6" r="0.5" fill="#17220f" opacity="0.8"/><circle cx="27.8" cy="38.8" r="1.7" fill="#17220f" opacity="0.8"/><circle cx="60.5" cy="67.4" r="1.3" fill="#17220f" opacity="0.8"/><circle cx="39.3" cy="27.3" r="1.7" fill="#3c5431" opacity="0.8"/><circle cx="44.3" cy="46.6" r="1.1" fill="#17220f" opacity="0.8"/><circle cx="114.7" cy="69.9" r="1.1" fill="#3c5431" opacity="0.8"/><circle cx="132.5" cy="92.8" r="1.3" fill="#17220f" opacity="0.8"/><circle cx="86.9" cy="64.2" r="0.9" fill="#3c5431" opacity="0.8"/><circle cx="63.3" cy="59.8" r="1.3" fill="#3c5431" opacity="0.8"/><circle cx="159.2" cy="68.7" r="1.4" fill="#3c5431" opacity="0.8"/><circle cx="39.7" cy="59.6" r="1.3" fill="#17220f" opacity="0.8"/><circle cx="129.7" cy="22.0" r="1.1" fill="#3c5431" opacity="0.8"/><circle cx="124.2" cy="74.2" r="1.1" fill="#55703f" opacity="0.8"/><circle cx="76.2" cy="54.9" r="1.8" fill="#17220f" opacity="0.8"/><circle cx="122.8" cy="92.8" r="0.6" fill="#55703f" opacity="0.8"/><circle cx="112.1" cy="52.4" r="1.5" fill="#55703f" opacity="0.8"/><circle cx="25.2" cy="47.2" r="1.3" fill="#3c5431" opacity="0.8"/><circle cx="164.9" cy="77.9" r="1.6" fill="#17220f" opacity="0.8"/><circle cx="73.3" cy="88.6" r="1.7" fill="#55703f" opacity="0.8"/><circle cx="57.4" cy="74.7" r="1.2" fill="#3c5431" opacity="0.8"/><circle cx="109.6" cy="83.9" r="1.4" fill="#7d9a5c" opacity="0.8"/><circle cx="84.9" cy="47.9" r="1.4" fill="#3c5431" opacity="0.8"/><circle cx="8.4" cy="93.0" r="0.9" fill="#3c5431" opacity="0.8"/><circle cx="7.3" cy="18.5" r="1.7" fill="#17220f" opacity="0.8"/><circle cx="51.4" cy="78.8" r="0.8" fill="#3c5431" opacity="0.8"/><circle cx="97.8" cy="87.0" r="1.1" fill="#17220f" opacity="0.8"/><circle cx="44.6" cy="35.3" r="0.5" fill="#17220f" opacity="0.8"/><circle cx="25.6" cy="30.5" r="1.5" fill="#7d9a5c" opacity="0.8"/><circle cx="60.9" cy="24.2" r="0.9" fill="#3c5431" opacity="0.8"/><circle cx="82.3" cy="11.4" r="1.2" fill="#17220f" opacity="0.8"/><circle cx="24.8" cy="76.2" r="0.6" fill="#3c5431" opacity="0.8"/><circle cx="131.7" cy="52.7" r="1.6" fill="#17220f" opacity="0.8"/><circle cx="162.8" cy="4.2" r="1.7" fill="#3c5431" opacity="0.8"/><circle cx="0.5" cy="25.2" r="1.8" fill="#3c5431" opacity="0.8"/><circle cx="126.8" cy="78.7" r="0.5" fill="#17220f" opacity="0.8"/><circle cx="80.1" cy="88.2" r="1.7" fill="#17220f" opacity="0.8"/><circle cx="169.8" cy="53.8" r="0.9" fill="#17220f" opacity="0.8"/><circle cx="73.4" cy="50.5" r="1.1" fill="#17220f" opacity="0.8"/><circle cx="163.0" cy="46.1" r="0.9" fill="#55703f" opacity="0.8"/><circle cx="42.0" cy="41.0" r="0.6" fill="#17220f" opacity="0.8"/><circle cx="171.5" cy="60.3" r="1.2" fill="#3c5431" opacity="0.8"/><circle cx="115.6" cy="50.6" r="1.0" fill="#17220f" opacity="0.8"/><circle cx="5.1" cy="11.7" r="1.0" fill="#17220f" opacity="0.8"/><circle cx="116.0" cy="32.7" r="0.8" fill="#17220f" opacity="0.8"/><circle cx="84.8" cy="20.3" r="1.6" fill="#3c5431" opacity="0.8"/><circle cx="11.8" cy="8.3" r="1.7" fill="#3c5431" opacity="0.8"/><circle cx="50.1" cy="69.2" r="0.6" fill="#55703f" opacity="0.8"/><circle cx="161.1" cy="64.4" r="0.6" fill="#3c5431" opacity="0.8"/><circle cx="143.9" cy="57.6" r="0.8" fill="#17220f" opacity="0.8"/><circle cx="11.0" cy="50.6" r="0.7" fill="#3c5431" opacity="0.8"/><circle cx="154.0" cy="87.4" r="1.1" fill="#55703f" opacity="0.8"/><circle cx="23.1" cy="91.9" r="1.6" fill="#3c5431" opacity="0.8"/><circle cx="152.4" cy="28.8" r="1.8" fill="#17220f" opacity="0.8"/><circle cx="159.0" cy="81.2" r="1.7" fill="#3c5431" opacity="0.8"/><circle cx="12.6" cy="27.1" r="1.4" fill="#55703f" opacity="0.8"/><circle cx="117.1" cy="3.8" r="1.0" fill="#17220f" opacity="0.8"/><circle cx="29.4" cy="21.8" r="1.2" fill="#17220f" opacity="0.8"/><circle cx="45.9" cy="40.0" r="1.7" fill="#3c5431" opacity="0.8"/><circle cx="129.3" cy="90.5" r="0.5" fill="#55703f" opacity="0.8"/><circle cx="16.4" cy="19.0" r="1.5" fill="#55703f" opacity="0.8"/><circle cx="105.7" cy="46.2" r="1.4" fill="#3c5431" opacity="0.8"/><circle cx="33.4" cy="21.3" r="0.6" fill="#17220f" opacity="0.8"/><circle cx="163.7" cy="92.2" r="1.0" fill="#17220f" opacity="0.8"/><circle cx="48.0" cy="75.8" r="1.1" fill="#17220f" opacity="0.8"/><circle cx="152.1" cy="90.1" r="0.6" fill="#3c5431" opacity="0.8"/><circle cx="38.0" cy="62.0" r="1.0" fill="#17220f" opacity="0.8"/><circle cx="52.0" cy="58.9" r="1.2" fill="#3c5431" opacity="0.8"/><circle cx="117.1" cy="45.9" r="1.7" fill="#3c5431" opacity="0.8"/><circle cx="136.2" cy="90.3" r="1.3" fill="#3c5431" opacity="0.8"/><circle cx="135.8" cy="69.1" r="0.8" fill="#17220f" opacity="0.8"/><circle cx="27.0" cy="2.0" r="1.4" fill="#17220f" opacity="0.8"/><circle cx="43.8" cy="2.5" r="0.5" fill="#3c5431" opacity="0.8"/><circle cx="61.6" cy="42.3" r="1.4" fill="#55703f" opacity="0.8"/><circle cx="120.6" cy="21.3" r="1.8" fill="#17220f" opacity="0.8"/><circle cx="99.9" cy="62.5" r="0.9" fill="#55703f" opacity="0.8"/><circle cx="104.9" cy="68.9" r="0.7" fill="#55703f" opacity="0.8"/><circle cx="49.4" cy="60.0" r="1.5" fill="#17220f" opacity="0.8"/><circle cx="45.6" cy="32.0" r="1.8" fill="#3c5431" opacity="0.8"/><circle cx="81.1" cy="54.5" r="1.4" fill="#17220f" opacity="0.8"/><circle cx="13.1" cy="10.6" r="1.3" fill="#3c5431" opacity="0.8"/><circle cx="168.2" cy="60.2" r="1.6" fill="#7d9a5c" opacity="0.8"/><circle cx="85.4" cy="40.9" r="1.1" fill="#17220f" opacity="0.8"/><circle cx="130.7" cy="55.8" r="0.7" fill="#7d9a5c" opacity="0.8"/><circle cx="90.5" cy="72.6" r="1.2" fill="#3c5431" opacity="0.8"/><circle cx="99.1" cy="11.1" r="0.7" fill="#3c5431" opacity="0.8"/><circle cx="60.1" cy="12.5" r="1.6" fill="#55703f" opacity="0.8"/><circle cx="131.4" cy="37.5" r="0.7" fill="#55703f" opacity="0.8"/><circle cx="37.1" cy="64.8" r="1.4" fill="#17220f" opacity="0.8"/><circle cx="0.4" cy="57.3" r="1.5" fill="#3c5431" opacity="0.8"/><circle cx="169.3" cy="22.2" r="1.5" fill="#3c5431" opacity="0.8"/><circle cx="99.8" cy="29.3" r="0.8" fill="#3c5431" opacity="0.8"/><circle cx="104.5" cy="88.2" r="1.3" fill="#3c5431" opacity="0.8"/><circle cx="112.0" cy="60.9" r="1.0" fill="#17220f" opacity="0.8"/><circle cx="117.4" cy="37.5" r="0.5" fill="#17220f" opacity="0.8"/><circle cx="61.7" cy="66.6" r="1.4" fill="#3c5431" opacity="0.8"/><circle cx="140.4" cy="31.7" r="1.0" fill="#55703f" opacity="0.8"/><circle cx="116.8" cy="41.3" r="1.7" fill="#17220f" opacity="0.8"/><circle cx="92.3" cy="83.3" r="1.6" fill="#17220f" opacity="0.8"/><circle cx="138.9" cy="51.7" r="1.7" fill="#17220f" opacity="0.8"/><circle cx="114.3" cy="62.3" r="1.8" fill="#17220f" opacity="0.8"/><circle cx="67.0" cy="12.1" r="1.4" fill="#17220f" opacity="0.8"/><circle cx="146.1" cy="14.2" r="0.7" fill="#7d9a5c" opacity="0.8"/><circle cx="85.7" cy="73.2" r="0.9" fill="#17220f" opacity="0.8"/><circle cx="63.4" cy="95.3" r="0.7" fill="#55703f" opacity="0.8"/><circle cx="151.9" cy="66.0" r="0.8" fill="#3c5431" opacity="0.8"/><circle cx="155.7" cy="57.5" r="0.8" fill="#3c5431" opacity="0.8"/><circle cx="164.5" cy="57.3" r="0.7" fill="#17220f" opacity="0.8"/><circle cx="108.4" cy="4.6" r="0.5" fill="#17220f" opacity="0.8"/><circle cx="44.3" cy="47.9" r="0.6" fill="#3c5431" opacity="0.8"/><circle cx="116.2" cy="30.8" r="1.3" fill="#3c5431" opacity="0.8"/><circle cx="135.7" cy="55.9" r="1.3" fill="#3c5431" opacity="0.8"/><circle cx="141.5" cy="9.4" r="0.6" fill="#55703f" opacity="0.8"/><circle cx="143.5" cy="0.8" r="1.7" fill="#3c5431" opacity="0.8"/><circle cx="147.2" cy="68.0" r="1.0" fill="#17220f" opacity="0.8"/><circle cx="131.5" cy="68.9" r="1.1" fill="#17220f" opacity="0.8"/><circle cx="62.6" cy="90.8" r="1.1" fill="#17220f" opacity="0.8"/><circle cx="169.6" cy="94.9" r="0.7" fill="#17220f" opacity="0.8"/><circle cx="125.5" cy="37.5" r="1.1" fill="#3c5431" opacity="0.8"/><circle cx="47.0" cy="57.7" r="0.8" fill="#17220f" opacity="0.8"/><circle cx="93.8" cy="41.5" r="1.7" fill="#17220f" opacity="0.8"/><circle cx="157.6" cy="25.4" r="0.9" fill="#17220f" opacity="0.8"/><circle cx="54.4" cy="95.1" r="1.0" fill="#55703f" opacity="0.8"/><circle cx="167.9" cy="67.5" r="0.7" fill="#3c5431" opacity="0.8"/><circle cx="28.7" cy="24.2" r="0.9" fill="#17220f" opacity="0.8"/><circle cx="116.9" cy="50.7" r="0.9" fill="#17220f" opacity="0.8"/><circle cx="24.5" cy="11.1" r="1.1" fill="#17220f" opacity="0.8"/><circle cx="89.9" cy="24.8" r="1.5" fill="#17220f" opacity="0.8"/><circle cx="147.2" cy="91.7" r="1.7" fill="#17220f" opacity="0.8"/><circle cx="159.8" cy="45.8" r="1.7" fill="#3c5431" opacity="0.8"/><circle cx="93.1" cy="25.1" r="1.5" fill="#17220f" opacity="0.8"/><circle cx="152.0" cy="68.6" r="1.1" fill="#17220f" opacity="0.8"/><circle cx="46.2" cy="40.5" r="1.0" fill="#3c5431" opacity="0.8"/><circle cx="0.9" cy="45.4" r="1.7" fill="#7d9a5c" opacity="0.8"/><circle cx="118.5" cy="66.6" r="1.3" fill="#7d9a5c" opacity="0.8"/><circle cx="135.9" cy="44.6" r="1.1" fill="#55703f" opacity="0.8"/><circle cx="94.9" cy="58.0" r="0.9" fill="#3c5431" opacity="0.8"/><circle cx="84.0" cy="91.5" r="1.8" fill="#7d9a5c" opacity="0.8"/><circle cx="163.5" cy="4.2" r="0.6" fill="#17220f" opacity="0.8"/><circle cx="142.2" cy="54.2" r="0.8" fill="#17220f" opacity="0.8"/><circle cx="43.0" cy="12.3" r="0.7" fill="#55703f" opacity="0.8"/><circle cx="33.2" cy="16.2" r="1.3" fill="#17220f" opacity="0.8"/><circle cx="143.3" cy="63.1" r="1.6" fill="#3c5431" opacity="0.8"/><circle cx="125.7" cy="25.9" r="1.0" fill="#17220f" opacity="0.8"/><circle cx="67.4" cy="88.5" r="1.1" fill="#55703f" opacity="0.8"/><circle cx="108.5" cy="8.0" r="0.8" fill="#3c5431" opacity="0.8"/><circle cx="135.8" cy="22.6" r="0.8" fill="#17220f" opacity="0.8"/><circle cx="79.0" cy="40.7" r="1.7" fill="#3c5431" opacity="0.8"/><circle cx="47.8" cy="33.4" r="1.2" fill="#17220f" opacity="0.8"/><circle cx="67.4" cy="6.3" r="1.4" fill="#55703f" opacity="0.8"/><circle cx="154.6" cy="57.9" r="1.0" fill="#3c5431" opacity="0.8"/><circle cx="95.6" cy="17.1" r="1.2" fill="#3c5431" opacity="0.8"/><circle cx="33.9" cy="43.0" r="1.6" fill="#3c5431" opacity="0.8"/><circle cx="56.6" cy="23.1" r="1.3" fill="#3c5431" opacity="0.8"/><circle cx="51.2" cy="45.7" r="1.0" fill="#3c5431" opacity="0.8"/><circle cx="151.1" cy="36.2" r="1.2" fill="#3c5431" opacity="0.8"/><circle cx="114.8" cy="23.6" r="0.8" fill="#55703f" opacity="0.8"/><circle cx="25.0" cy="66.1" r="0.8" fill="#3c5431" opacity="0.8"/><circle cx="77.6" cy="23.2" r="0.7" fill="#7d9a5c" opacity="0.8"/><circle cx="6.6" cy="13.8" r="1.5" fill="#17220f" opacity="0.8"/><circle cx="33.6" cy="75.3" r="1.8" fill="#17220f" opacity="0.8"/><circle cx="121.6" cy="38.5" r="1.8" fill="#3c5431" opacity="0.8"/><circle cx="153.9" cy="64.3" r="0.7" fill="#3c5431" opacity="0.8"/><circle cx="121.3" cy="14.8" r="0.6" fill="#7d9a5c" opacity="0.8"/><circle cx="158.9" cy="63.1" r="0.6" fill="#3c5431" opacity="0.8"/><circle cx="170.1" cy="75.9" r="1.4" fill="#3c5431" opacity="0.8"/><circle cx="108.7" cy="89.9" r="1.1" fill="#17220f" opacity="0.8"/><circle cx="25.0" cy="92.4" r="1.4" fill="#55703f" opacity="0.8"/><circle cx="25.4" cy="10.2" r="1.4" fill="#3c5431" opacity="0.8"/><circle cx="79.6" cy="22.6" r="1.5" fill="#55703f" opacity="0.8"/><circle cx="124.9" cy="41.7" r="1.1" fill="#17220f" opacity="0.8"/><circle cx="80.0" cy="31.6" r="1.1" fill="#7d9a5c" opacity="0.8"/><circle cx="137.9" cy="13.1" r="1.4" fill="#55703f" opacity="0.8"/><circle cx="59.3" cy="86.2" r="1.7" fill="#17220f" opacity="0.8"/><circle cx="107.5" cy="36.9" r="1.1" fill="#3c5431" opacity="0.8"/><circle cx="147.8" cy="61.2" r="1.7" fill="#17220f" opacity="0.8"/><circle cx="137.1" cy="38.0" r="0.7" fill="#55703f" opacity="0.8"/><circle cx="99.3" cy="21.9" r="1.7" fill="#3c5431" opacity="0.8"/><circle cx="115.9" cy="95.6" r="0.9" fill="#3c5431" opacity="0.8"/><circle cx="94.0" cy="27.7" r="1.2" fill="#7d9a5c" opacity="0.8"/><circle cx="119.9" cy="25.7" r="1.4" fill="#3c5431" opacity="0.8"/><circle cx="63.4" cy="65.1" r="1.0" fill="#55703f" opacity="0.8"/><circle cx="66.7" cy="79.9" r="0.9" fill="#17220f" opacity="0.8"/><circle cx="56.7" cy="12.2" r="1.6" fill="#7d9a5c" opacity="0.8"/><circle cx="71.6" cy="23.3" r="1.6" fill="#55703f" opacity="0.8"/><circle cx="42.0" cy="29.6" r="1.1" fill="#17220f" opacity="0.8"/><circle cx="36.3" cy="38.5" r="0.7" fill="#17220f" opacity="0.8"/><circle cx="104.0" cy="29.2" r="1.7" fill="#7d9a5c" opacity="0.8"/><circle cx="115.3" cy="26.7" r="1.5" fill="#17220f" opacity="0.8"/><circle cx="149.6" cy="41.1" r="1.4" fill="#55703f" opacity="0.8"/><circle cx="120.8" cy="73.0" r="0.9" fill="#17220f" opacity="0.8"/><circle cx="63.4" cy="93.0" r="0.5" fill="#17220f" opacity="0.8"/><circle cx="53.2" cy="42.7" r="1.6" fill="#17220f" opacity="0.8"/><circle cx="17.9" cy="1.7" r="0.9" fill="#3c5431" opacity="0.8"/><circle cx="77.9" cy="62.7" r="1.2" fill="#17220f" opacity="0.8"/><circle cx="70.1" cy="4.0" r="1.7" fill="#3c5431" opacity="0.8"/><circle cx="16.8" cy="19.7" r="1.5" fill="#3c5431" opacity="0.8"/><circle cx="128.8" cy="72.9" r="0.7" fill="#55703f" opacity="0.8"/><circle cx="34.6" cy="13.4" r="1.5" fill="#55703f" opacity="0.8"/><circle cx="52.1" cy="37.4" r="1.5" fill="#17220f" opacity="0.8"/><circle cx="76.5" cy="96.2" r="0.7" fill="#7d9a5c" opacity="0.8"/><circle cx="152.6" cy="96.7" r="0.8" fill="#17220f" opacity="0.8"/><circle cx="75.3" cy="16.6" r="1.7" fill="#3c5431" opacity="0.8"/><circle cx="144.8" cy="47.7" r="1.1" fill="#7d9a5c" opacity="0.8"/><circle cx="21.5" cy="21.9" r="1.6" fill="#3c5431" opacity="0.8"/><circle cx="134.5" cy="96.5" r="1.5" fill="#3c5431" opacity="0.8"/><circle cx="129.2" cy="51.6" r="0.8" fill="#17220f" opacity="0.8"/><circle cx="159.1" cy="51.1" r="0.5" fill="#3c5431" opacity="0.8"/><circle cx="170.9" cy="60.7" r="1.1" fill="#3c5431" opacity="0.8"/><circle cx="108.5" cy="59.6" r="1.1" fill="#55703f" opacity="0.8"/><circle cx="152.5" cy="75.9" r="1.4" fill="#3c5431" opacity="0.8"/><circle cx="34.0" cy="47.6" r="0.8" fill="#17220f" opacity="0.8"/><circle cx="163.4" cy="22.4" r="1.6" fill="#55703f" opacity="0.8"/><circle cx="69.6" cy="2.4" r="0.7" fill="#3c5431" opacity="0.8"/><circle cx="122.0" cy="34.4" r="1.3" fill="#17220f" opacity="0.8"/><circle cx="113.1" cy="75.8" r="1.5" fill="#3c5431" opacity="0.8"/><circle cx="98.6" cy="0.2" r="0.8" fill="#17220f" opacity="0.8"/><circle cx="12.5" cy="7.1" r="1.7" fill="#3c5431" opacity="0.8"/><circle cx="96.7" cy="66.9" r="1.6" fill="#3c5431" opacity="0.8"/><circle cx="73.4" cy="38.1" r="1.8" fill="#7d9a5c" opacity="0.8"/><circle cx="26.1" cy="79.4" r="1.3" fill="#17220f" opacity="0.8"/><circle cx="119.5" cy="26.6" r="1.5" fill="#3c5431" opacity="0.8"/><circle cx="100.6" cy="5.5" r="1.7" fill="#7d9a5c" opacity="0.8"/><circle cx="130.9" cy="28.5" r="1.4" fill="#17220f" opacity="0.8"/><circle cx="94.0" cy="33.5" r="1.1" fill="#17220f" opacity="0.8"/><circle cx="12.2" cy="42.2" r="0.8" fill="#17220f" opacity="0.8"/><circle cx="57.0" cy="12.1" r="0.5" fill="#7d9a5c" opacity="0.8"/><circle cx="9.5" cy="86.6" r="1.0" fill="#17220f" opacity="0.8"/><circle cx="73.8" cy="49.2" r="0.6" fill="#3c5431" opacity="0.8"/><circle cx="1.3" cy="29.0" r="1.4" fill="#55703f" opacity="0.8"/><circle cx="30.6" cy="39.5" r="1.7" fill="#17220f" opacity="0.8"/><circle cx="20.3" cy="23.9" r="1.6" fill="#17220f" opacity="0.8"/><circle cx="114.5" cy="91.0" r="1.3" fill="#17220f" opacity="0.8"/><circle cx="82.7" cy="31.6" r="1.1" fill="#3c5431" opacity="0.8"/><circle cx="167.9" cy="66.8" r="1.2" fill="#55703f" opacity="0.8"/><circle cx="87.2" cy="18.7" r="1.4" fill="#17220f" opacity="0.8"/><circle cx="36.5" cy="37.7" r="1.1" fill="#17220f" opacity="0.8"/><circle cx="62.0" cy="93.2" r="1.2" fill="#17220f" opacity="0.8"/><circle cx="78.6" cy="67.7" r="1.2" fill="#17220f" opacity="0.8"/><circle cx="99.9" cy="26.7" r="1.4" fill="#3c5431" opacity="0.8"/><circle cx="121.3" cy="33.8" r="1.3" fill="#17220f" opacity="0.8"/><circle cx="83.4" cy="47.8" r="0.5" fill="#17220f" opacity="0.8"/><circle cx="79.2" cy="74.2" r="1.6" fill="#55703f" opacity="0.8"/><circle cx="138.6" cy="93.8" r="0.8" fill="#17220f" opacity="0.8"/><circle cx="23.8" cy="76.9" r="0.7" fill="#17220f" opacity="0.8"/><circle cx="23.8" cy="88.2" r="0.8" fill="#17220f" opacity="0.8"/><circle cx="102.2" cy="68.2" r="0.5" fill="#3c5431" opacity="0.8"/><circle cx="91.1" cy="53.8" r="1.2" fill="#55703f" opacity="0.8"/><circle cx="141.5" cy="83.5" r="0.9" fill="#17220f" opacity="0.8"/><circle cx="81.0" cy="2.6" r="1.3" fill="#3c5431" opacity="0.8"/><circle cx="128.4" cy="80.8" r="1.5" fill="#3c5431" opacity="0.8"/><circle cx="57.3" cy="70.4" r="1.3" fill="#17220f" opacity="0.8"/><circle cx="149.5" cy="45.9" r="1.2" fill="#17220f" opacity="0.8"/><circle cx="143.0" cy="46.0" r="1.5" fill="#55703f" opacity="0.8"/><circle cx="89.3" cy="56.8" r="1.1" fill="#17220f" opacity="0.8"/><circle cx="137.4" cy="89.3" r="0.5" fill="#17220f" opacity="0.8"/><circle cx="80.8" cy="7.7" r="1.1" fill="#17220f" opacity="0.8"/><circle cx="41.4" cy="75.2" r="1.3" fill="#55703f" opacity="0.8"/><circle cx="33.4" cy="36.9" r="1.3" fill="#55703f" opacity="0.8"/><circle cx="73.6" cy="18.0" r="1.0" fill="#3c5431" opacity="0.8"/><circle cx="166.4" cy="63.2" r="1.6" fill="#55703f" opacity="0.8"/><circle cx="73.7" cy="49.1" r="1.6" fill="#3c5431" opacity="0.8"/><circle cx="68.7" cy="18.3" r="1.5" fill="#17220f" opacity="0.8"/><circle cx="45.6" cy="24.3" r="1.4" fill="#3c5431" opacity="0.8"/><circle cx="161.2" cy="57.2" r="1.1" fill="#55703f" opacity="0.8"/><circle cx="23.8" cy="57.1" r="1.8" fill="#17220f" opacity="0.8"/><circle cx="26.2" cy="11.0" r="0.5" fill="#3c5431" opacity="0.8"/><circle cx="70.9" cy="79.6" r="1.6" fill="#17220f" opacity="0.8"/><circle cx="52.7" cy="25.6" r="0.8" fill="#17220f" opacity="0.8"/><circle cx="43.9" cy="33.0" r="1.1" fill="#3c5431" opacity="0.8"/><circle cx="169.4" cy="10.5" r="0.7" fill="#55703f" opacity="0.8"/><circle cx="49.5" cy="52.3" r="0.9" fill="#55703f" opacity="0.8"/><circle cx="160.7" cy="55.3" r="0.6" fill="#17220f" opacity="0.8"/><circle cx="121.1" cy="54.9" r="0.9" fill="#17220f" opacity="0.8"/><circle cx="10.6" cy="39.1" r="1.6" fill="#17220f" opacity="0.8"/><circle cx="80.2" cy="16.3" r="1.4" fill="#17220f" opacity="0.8"/><circle cx="66.3" cy="75.0" r="0.9" fill="#17220f" opacity="0.8"/><circle cx="110.4" cy="71.6" r="0.6" fill="#17220f" opacity="0.8"/><circle cx="152.4" cy="49.4" r="1.0" fill="#17220f" opacity="0.8"/><circle cx="49.6" cy="56.9" r="1.7" fill="#3c5431" opacity="0.8"/><circle cx="166.6" cy="39.5" r="0.6" fill="#17220f" opacity="0.8"/><circle cx="63.0" cy="5.5" r="0.6" fill="#55703f" opacity="0.8"/><circle cx="154.0" cy="12.9" r="0.6" fill="#7d9a5c" opacity="0.8"/><circle cx="28.7" cy="29.3" r="0.8" fill="#17220f" opacity="0.8"/><circle cx="5.4" cy="44.8" r="1.5" fill="#17220f" opacity="0.8"/><circle cx="84.5" cy="12.8" r="1.5" fill="#55703f" opacity="0.8"/><circle cx="150.5" cy="51.8" r="0.7" fill="#3c5431" opacity="0.8"/><circle cx="12.0" cy="75.2" r="0.9" fill="#55703f" opacity="0.8"/><circle cx="49.0" cy="71.8" r="1.1" fill="#17220f" opacity="0.8"/><circle cx="84.5" cy="41.8" r="0.7" fill="#3c5431" opacity="0.8"/><circle cx="91.5" cy="67.9" r="0.9" fill="#3c5431" opacity="0.8"/><circle cx="34.1" cy="50.6" r="0.8" fill="#55703f" opacity="0.8"/><circle cx="32.8" cy="28.2" r="0.6" fill="#17220f" opacity="0.8"/><circle cx="93.1" cy="22.1" r="0.7" fill="#55703f" opacity="0.8"/><circle cx="53.4" cy="20.9" r="1.0" fill="#55703f" opacity="0.8"/><circle cx="128.4" cy="87.6" r="1.2" fill="#17220f" opacity="0.8"/><circle cx="86.2" cy="5.7" r="1.4" fill="#55703f" opacity="0.8"/><circle cx="157.5" cy="80.5" r="1.3" fill="#55703f" opacity="0.8"/><circle cx="50.1" cy="54.5" r="0.7" fill="#55703f" opacity="0.8"/><circle cx="88.1" cy="17.1" r="1.8" fill="#3c5431" opacity="0.8"/><circle cx="36.5" cy="82.0" r="1.3" fill="#3c5431" opacity="0.8"/><circle cx="151.0" cy="30.6" r="0.9" fill="#3c5431" opacity="0.8"/><circle cx="35.0" cy="67.8" r="1.1" fill="#17220f" opacity="0.8"/><circle cx="21.4" cy="15.7" r="1.2" fill="#55703f" opacity="0.8"/><circle cx="137.1" cy="82.3" r="1.2" fill="#55703f" opacity="0.8"/><circle cx="56.8" cy="35.7" r="1.7" fill="#17220f" opacity="0.8"/><circle cx="107.2" cy="55.0" r="0.6" fill="#3c5431" opacity="0.8"/><circle cx="137.1" cy="86.2" r="1.0" fill="#55703f" opacity="0.8"/><circle cx="6.5" cy="87.9" r="1.4" fill="#55703f" opacity="0.8"/><circle cx="77.0" cy="57.0" r="1.6" fill="#17220f" opacity="0.8"/><circle cx="31.5" cy="73.1" r="1.6" fill="#17220f" opacity="0.8"/><circle cx="94.0" cy="49.2" r="0.9" fill="#55703f" opacity="0.8"/><circle cx="48.6" cy="75.6" r="1.0" fill="#17220f" opacity="0.8"/><circle cx="165.5" cy="14.3" r="0.6" fill="#17220f" opacity="0.8"/><circle cx="60.3" cy="2.6" r="0.7" fill="#7d9a5c" opacity="0.8"/><circle cx="43.7" cy="69.4" r="0.8" fill="#17220f" opacity="0.8"/><circle cx="1.2" cy="11.8" r="1.7" fill="#3c5431" opacity="0.8"/><circle cx="42.9" cy="4.6" r="1.3" fill="#17220f" opacity="0.8"/><circle cx="31.0" cy="42.4" r="1.4" fill="#17220f" opacity="0.8"/><circle cx="96.5" cy="18.3" r="1.2" fill="#17220f" opacity="0.8"/><circle cx="158.7" cy="90.0" r="1.2" fill="#3c5431" opacity="0.8"/><circle cx="68.3" cy="72.6" r="1.3" fill="#3c5431" opacity="0.8"/><circle cx="76.2" cy="38.8" r="1.4" fill="#17220f" opacity="0.8"/><circle cx="58.8" cy="23.3" r="0.8" fill="#55703f" opacity="0.8"/><circle cx="53.7" cy="71.5" r="0.6" fill="#55703f" opacity="0.8"/><circle cx="80.6" cy="72.2" r="0.6" fill="#3c5431" opacity="0.8"/><circle cx="139.6" cy="28.0" r="0.6" fill="#17220f" opacity="0.8"/><circle cx="132.3" cy="73.9" r="0.6" fill="#17220f" opacity="0.8"/><circle cx="157.5" cy="28.0" r="0.6" fill="#55703f" opacity="0.8"/><circle cx="141.0" cy="43.2" r="1.4" fill="#55703f" opacity="0.8"/><circle cx="143.9" cy="18.4" r="1.4" fill="#55703f" opacity="0.8"/><circle cx="135.7" cy="50.6" r="1.0" fill="#7d9a5c" opacity="0.8"/><circle cx="170.8" cy="78.1" r="1.2" fill="#55703f" opacity="0.8"/><circle cx="150.4" cy="48.9" r="0.7" fill="#3c5431" opacity="0.8"/><circle cx="23.2" cy="32.5" r="1.2" fill="#3c5431" opacity="0.8"/><circle cx="110.8" cy="79.6" r="1.7" fill="#17220f" opacity="0.8"/><circle cx="164.1" cy="31.3" r="1.0" fill="#55703f" opacity="0.8"/><circle cx="167.8" cy="49.2" r="1.5" fill="#55703f" opacity="0.8"/><circle cx="54.2" cy="59.9" r="1.7" fill="#17220f" opacity="0.8"/><circle cx="21.4" cy="84.6" r="1.2" fill="#17220f" opacity="0.8"/><circle cx="136.4" cy="43.1" r="0.7" fill="#17220f" opacity="0.8"/><circle cx="130.8" cy="62.2" r="1.1" fill="#17220f" opacity="0.8"/><circle cx="171.4" cy="7.7" r="0.9" fill="#55703f" opacity="0.8"/><circle cx="161.3" cy="66.7" r="1.0" fill="#55703f" opacity="0.8"/><circle cx="114.9" cy="56.1" r="1.5" fill="#3c5431" opacity="0.8"/><circle cx="92.6" cy="25.1" r="1.5" fill="#17220f" opacity="0.8"/><circle cx="16.4" cy="61.1" r="0.6" fill="#55703f" opacity="0.8"/><circle cx="33.2" cy="45.3" r="0.8" fill="#3c5431" opacity="0.8"/><circle cx="106.0" cy="19.1" r="1.2" fill="#7d9a5c" opacity="0.8"/><circle cx="25.7" cy="21.2" r="0.8" fill="#17220f" opacity="0.8"/><circle cx="2.1" cy="93.0" r="1.8" fill="#17220f" opacity="0.8"/><circle cx="143.3" cy="56.2" r="0.8" fill="#55703f" opacity="0.8"/><circle cx="20.0" cy="62.1" r="1.4" fill="#3c5431" opacity="0.8"/><circle cx="40.7" cy="14.5" r="1.3" fill="#17220f" opacity="0.8"/><circle cx="104.1" cy="71.7" r="0.5" fill="#3c5431" opacity="0.8"/><circle cx="168.4" cy="39.1" r="1.2" fill="#17220f" opacity="0.8"/><circle cx="151.4" cy="21.6" r="0.6" fill="#3c5431" opacity="0.8"/><circle cx="76.4" cy="55.3" r="0.8" fill="#55703f" opacity="0.8"/><circle cx="91.9" cy="37.7" r="1.5" fill="#17220f" opacity="0.8"/><circle cx="158.4" cy="80.9" r="0.8" fill="#3c5431" opacity="0.8"/><circle cx="6.7" cy="76.9" r="1.8" fill="#3c5431" opacity="0.8"/><circle cx="168.3" cy="45.8" r="1.6" fill="#55703f" opacity="0.8"/><circle cx="159.2" cy="44.6" r="1.2" fill="#17220f" opacity="0.8"/><circle cx="163.6" cy="8.5" r="1.3" fill="#3c5431" opacity="0.8"/><circle cx="30.0" cy="34.0" r="0.9" fill="#17220f" opacity="0.8"/><circle cx="68.8" cy="37.0" r="1.4" fill="#3c5431" opacity="0.8"/><circle cx="163.0" cy="84.5" r="0.8" fill="#3c5431" opacity="0.8"/><circle cx="119.2" cy="76.5" r="0.7" fill="#17220f" opacity="0.8"/><circle cx="105.6" cy="30.6" r="1.7" fill="#17220f" opacity="0.8"/><circle cx="121.7" cy="6.6" r="1.7" fill="#7d9a5c" opacity="0.8"/><circle cx="166.0" cy="33.1" r="1.6" fill="#7d9a5c" opacity="0.8"/><circle cx="18.4" cy="7.2" r="1.4" fill="#7d9a5c" opacity="0.8"/><circle cx="5.3" cy="81.3" r="1.4" fill="#3c5431" opacity="0.8"/><circle cx="24.5" cy="49.2" r="1.1" fill="#17220f" opacity="0.8"/><circle cx="154.8" cy="71.8" r="0.7" fill="#3c5431" opacity="0.8"/><circle cx="102.9" cy="91.0" r="1.8" fill="#55703f" opacity="0.8"/><circle cx="9.4" cy="40.9" r="0.7" fill="#55703f" opacity="0.8"/><circle cx="14.2" cy="80.4" r="1.3" fill="#3c5431" opacity="0.8"/><circle cx="162.5" cy="84.3" r="1.5" fill="#3c5431" opacity="0.8"/><circle cx="94.0" cy="50.2" r="0.5" fill="#17220f" opacity="0.8"/><circle cx="118.5" cy="40.2" r="1.1" fill="#55703f" opacity="0.8"/><circle cx="66.4" cy="70.6" r="1.5" fill="#55703f" opacity="0.8"/><circle cx="40.4" cy="58.9" r="1.1" fill="#3c5431" opacity="0.8"/><circle cx="14.8" cy="18.4" r="0.8" fill="#55703f" opacity="0.8"/><circle cx="134.7" cy="37.1" r="1.3" fill="#3c5431" opacity="0.8"/><circle cx="92.4" cy="25.9" r="0.9" fill="#7d9a5c" opacity="0.8"/><circle cx="152.2" cy="11.8" r="0.7" fill="#55703f" opacity="0.8"/><circle cx="76.3" cy="62.1" r="1.3" fill="#3c5431" opacity="0.8"/><circle cx="155.8" cy="14.9" r="1.6" fill="#17220f" opacity="0.8"/><circle cx="13.1" cy="28.8" r="1.2" fill="#55703f" opacity="0.8"/><circle cx="99.8" cy="94.1" r="0.7" fill="#17220f" opacity="0.8"/><circle cx="98.7" cy="57.3" r="1.4" fill="#3c5431" opacity="0.8"/><circle cx="17.3" cy="75.9" r="1.5" fill="#17220f" opacity="0.8"/><circle cx="139.9" cy="0.6" r="1.4" fill="#3c5431" opacity="0.8"/><circle cx="51.1" cy="8.7" r="0.8" fill="#3c5431" opacity="0.8"/><circle cx="91.8" cy="78.9" r="0.7" fill="#3c5431" opacity="0.8"/><circle cx="52.2" cy="4.1" r="0.7" fill="#17220f" opacity="0.8"/><circle cx="27.4" cy="3.7" r="1.8" fill="#17220f" opacity="0.8"/><circle cx="130.3" cy="40.9" r="1.2" fill="#17220f" opacity="0.8"/><circle cx="162.5" cy="20.5" r="1.7" fill="#55703f" opacity="0.8"/><circle cx="148.6" cy="9.4" r="1.8" fill="#3c5431" opacity="0.8"/><circle cx="99.7" cy="55.0" r="1.1" fill="#7d9a5c" opacity="0.8"/><circle cx="168.7" cy="92.4" r="0.7" fill="#3c5431" opacity="0.8"/><circle cx="120.5" cy="17.8" r="1.7" fill="#55703f" opacity="0.8"/><circle cx="20.8" cy="28.8" r="1.4" fill="#55703f" opacity="0.8"/><circle cx="171.7" cy="26.8" r="1.6" fill="#3c5431" opacity="0.8"/><circle cx="62.3" cy="23.3" r="0.6" fill="#17220f" opacity="0.8"/><circle cx="74.0" cy="11.7" r="0.8" fill="#17220f" opacity="0.8"/><circle cx="23.4" cy="19.6" r="0.8" fill="#7d9a5c" opacity="0.8"/><circle cx="72.9" cy="59.9" r="1.2" fill="#7d9a5c" opacity="0.8"/><circle cx="142.1" cy="89.9" r="1.6" fill="#3c5431" opacity="0.8"/><circle cx="150.7" cy="32.2" r="1.3" fill="#17220f" opacity="0.8"/><circle cx="159.2" cy="26.0" r="1.8" fill="#17220f" opacity="0.8"/><circle cx="58.5" cy="72.0" r="1.2" fill="#17220f" opacity="0.8"/><circle cx="21.9" cy="85.0" r="0.8" fill="#3c5431" opacity="0.8"/><circle cx="144.0" cy="47.1" r="1.1" fill="#17220f" opacity="0.8"/><circle cx="161.0" cy="58.4" r="1.4" fill="#17220f" opacity="0.8"/><circle cx="122.4" cy="36.8" r="0.7" fill="#17220f" opacity="0.8"/><circle cx="131.0" cy="83.8" r="1.2" fill="#3c5431" opacity="0.8"/><circle cx="160.7" cy="63.1" r="1.8" fill="#17220f" opacity="0.8"/><circle cx="150.1" cy="72.8" r="1.2" fill="#3c5431" opacity="0.8"/><circle cx="28.9" cy="1.6" r="0.5" fill="#55703f" opacity="0.8"/><circle cx="68.5" cy="58.4" r="1.1" fill="#55703f" opacity="0.8"/><circle cx="126.8" cy="36.3" r="1.3" fill="#17220f" opacity="0.8"/><circle cx="162.2" cy="15.5" r="1.7" fill="#3c5431" opacity="0.8"/><circle cx="25.4" cy="95.4" r="0.8" fill="#3c5431" opacity="0.8"/><circle cx="44.7" cy="13.0" r="1.5" fill="#55703f" opacity="0.8"/><circle cx="153.4" cy="65.3" r="1.3" fill="#17220f" opacity="0.8"/><circle cx="171.7" cy="31.8" r="1.3" fill="#17220f" opacity="0.8"/><circle cx="54.4" cy="50.7" r="1.1" fill="#17220f" opacity="0.8"/><circle cx="65.8" cy="1.8" r="1.3" fill="#17220f" opacity="0.8"/><circle cx="19.4" cy="35.7" r="1.4" fill="#55703f" opacity="0.8"/><circle cx="71.5" cy="11.3" r="1.3" fill="#3c5431" opacity="0.8"/><circle cx="83.2" cy="94.1" r="1.0" fill="#3c5431" opacity="0.8"/><circle cx="5.2" cy="12.9" r="0.8" fill="#17220f" opacity="0.8"/><circle cx="30.0" cy="10.5" r="1.7" fill="#3c5431" opacity="0.8"/><circle cx="84.2" cy="54.5" r="0.9" fill="#55703f" opacity="0.8"/><circle cx="126.6" cy="41.4" r="0.5" fill="#17220f" opacity="0.8"/><circle cx="6.1" cy="70.4" r="0.5" fill="#3c5431" opacity="0.8"/><circle cx="89.2" cy="36.0" r="0.9" fill="#55703f" opacity="0.8"/><circle cx="164.1" cy="73.2" r="1.2" fill="#7d9a5c" opacity="0.8"/><circle cx="120.7" cy="22.4" r="0.7" fill="#17220f" opacity="0.8"/><circle cx="17.9" cy="37.8" r="1.3" fill="#17220f" opacity="0.8"/><circle cx="14.0" cy="32.7" r="1.1" fill="#55703f" opacity="0.8"/><circle cx="153.3" cy="79.7" r="0.8" fill="#55703f" opacity="0.8"/><circle cx="48.3" cy="56.8" r="1.2" fill="#17220f" opacity="0.8"/><circle cx="93.0" cy="25.5" r="1.5" fill="#17220f" opacity="0.8"/><circle cx="134.4" cy="18.3" r="0.5" fill="#3c5431" opacity="0.8"/><circle cx="151.7" cy="61.6" r="0.8" fill="#3c5431" opacity="0.8"/><circle cx="57.0" cy="64.3" r="0.9" fill="#17220f" opacity="0.8"/><circle cx="171.8" cy="3.8" r="0.7" fill="#17220f" opacity="0.8"/><circle cx="57.2" cy="53.7" r="1.1" fill="#17220f" opacity="0.8"/><circle cx="142.7" cy="68.8" r="0.7" fill="#17220f" opacity="0.8"/><circle cx="19.3" cy="49.6" r="1.3" fill="#3c5431" opacity="0.8"/><circle cx="41.0" cy="84.0" r="1.7" fill="#3c5431" opacity="0.8"/><circle cx="20.6" cy="16.9" r="1.4" fill="#17220f" opacity="0.8"/><circle cx="107.4" cy="69.5" r="0.5" fill="#17220f" opacity="0.8"/><circle cx="41.4" cy="42.5" r="1.6" fill="#55703f" opacity="0.8"/><circle cx="66.9" cy="1.2" r="1.2" fill="#17220f" opacity="0.8"/><circle cx="49.7" cy="90.4" r="0.9" fill="#17220f" opacity="0.8"/><circle cx="115.6" cy="90.4" r="0.6" fill="#3c5431" opacity="0.8"/><circle cx="113.9" cy="12.2" r="0.6" fill="#17220f" opacity="0.8"/><circle cx="58.3" cy="67.8" r="1.8" fill="#3c5431" opacity="0.8"/><circle cx="73.9" cy="96.7" r="1.7" fill="#3c5431" opacity="0.8"/><circle cx="80.9" cy="50.2" r="0.6" fill="#3c5431" opacity="0.8"/><circle cx="122.5" cy="46.1" r="1.3" fill="#55703f" opacity="0.8"/><circle cx="107.0" cy="66.8" r="1.6" fill="#3c5431" opacity="0.8"/><circle cx="78.7" cy="92.8" r="1.7" fill="#17220f" opacity="0.8"/><circle cx="172.0" cy="16.2" r="1.6" fill="#3c5431" opacity="0.8"/><circle cx="134.3" cy="33.6" r="0.9" fill="#17220f" opacity="0.8"/><circle cx="20.9" cy="11.1" r="0.7" fill="#55703f" opacity="0.8"/><circle cx="92.5" cy="83.3" r="1.8" fill="#3c5431" opacity="0.8"/><circle cx="30.4" cy="87.0" r="0.6" fill="#3c5431" opacity="0.8"/><circle cx="145.3" cy="12.1" r="0.8" fill="#3c5431" opacity="0.8"/><circle cx="16.7" cy="83.9" r="1.5" fill="#3c5431" opacity="0.8"/><circle cx="133.7" cy="13.5" r="1.6" fill="#3c5431" opacity="0.8"/><circle cx="66.0" cy="79.0" r="1.1" fill="#17220f" opacity="0.8"/><circle cx="120.1" cy="3.5" r="1.2" fill="#17220f" opacity="0.8"/><circle cx="70.7" cy="40.7" r="1.4" fill="#3c5431" opacity="0.8"/><circle cx="60.5" cy="22.2" r="1.5" fill="#17220f" opacity="0.8"/><circle cx="100.4" cy="70.5" r="1.3" fill="#17220f" opacity="0.8"/><circle cx="14.2" cy="62.3" r="1.5" fill="#3c5431" opacity="0.8"/><circle cx="169.4" cy="67.9" r="1.1" fill="#7d9a5c" opacity="0.8"/><circle cx="40.9" cy="10.8" r="1.0" fill="#17220f" opacity="0.8"/><circle cx="97.6" cy="51.8" r="0.7" fill="#3c5431" opacity="0.8"/><circle cx="80.7" cy="67.8" r="1.5" fill="#55703f" opacity="0.8"/><circle cx="117.6" cy="9.7" r="1.2" fill="#3c5431" opacity="0.8"/><circle cx="33.6" cy="36.0" r="1.2" fill="#17220f" opacity="0.8"/><circle cx="14.2" cy="27.7" r="1.0" fill="#55703f" opacity="0.8"/><circle cx="169.6" cy="82.1" r="1.7" fill="#7d9a5c" opacity="0.8"/><circle cx="88.1" cy="60.0" r="0.5" fill="#3c5431" opacity="0.8"/><circle cx="143.8" cy="33.5" r="1.3" fill="#17220f" opacity="0.8"/><circle cx="161.2" cy="41.6" r="1.1" fill="#17220f" opacity="0.8"/><circle cx="149.7" cy="92.5" r="1.0" fill="#3c5431" opacity="0.8"/><circle cx="49.3" cy="68.2" r="1.3" fill="#55703f" opacity="0.8"/><circle cx="3.0" cy="48.9" r="1.8" fill="#17220f" opacity="0.8"/><circle cx="107.5" cy="36.5" r="0.7" fill="#17220f" opacity="0.8"/><circle cx="165.6" cy="20.8" r="1.1" fill="#55703f" opacity="0.8"/><circle cx="18.8" cy="2.2" r="1.3" fill="#3c5431" opacity="0.8"/><circle cx="6.5" cy="81.3" r="1.5" fill="#3c5431" opacity="0.8"/><circle cx="41.8" cy="89.6" r="0.8" fill="#7d9a5c" opacity="0.8"/><circle cx="94.8" cy="88.2" r="1.2" fill="#3c5431" opacity="0.8"/><circle cx="162.0" cy="42.4" r="0.9" fill="#7d9a5c" opacity="0.8"/><circle cx="171.0" cy="12.4" r="1.6" fill="#55703f" opacity="0.8"/><circle cx="36.1" cy="22.6" r="0.6" fill="#55703f" opacity="0.8"/><circle cx="13.9" cy="81.2" r="1.5" fill="#7d9a5c" opacity="0.8"/><circle cx="19.3" cy="78.6" r="0.6" fill="#17220f" opacity="0.8"/><circle cx="145.5" cy="13.6" r="1.5" fill="#7d9a5c" opacity="0.8"/><circle cx="83.0" cy="41.0" r="1.7" fill="#3c5431" opacity="0.8"/><circle cx="169.3" cy="67.0" r="1.1" fill="#17220f" opacity="0.8"/><circle cx="153.5" cy="73.2" r="0.7" fill="#3c5431" opacity="0.8"/><circle cx="46.4" cy="42.7" r="0.7" fill="#17220f" opacity="0.8"/><circle cx="80.4" cy="69.3" r="1.4" fill="#55703f" opacity="0.8"/><circle cx="156.9" cy="72.3" r="0.8" fill="#55703f" opacity="0.8"/><circle cx="126.3" cy="11.2" r="0.5" fill="#55703f" opacity="0.8"/><circle cx="29.6" cy="84.5" r="1.7" fill="#17220f" opacity="0.8"/><circle cx="90.8" cy="7.1" r="0.6" fill="#55703f" opacity="0.8"/><circle cx="107.2" cy="25.1" r="0.7" fill="#17220f" opacity="0.8"/><circle cx="131.7" cy="26.4" r="0.6" fill="#55703f" opacity="0.8"/><circle cx="54.0" cy="16.4" r="1.2" fill="#17220f" opacity="0.8"/><circle cx="90.4" cy="44.5" r="1.2" fill="#17220f" opacity="0.8"/><circle cx="86.3" cy="92.7" r="0.8" fill="#17220f" opacity="0.8"/><circle cx="79.5" cy="43.7" r="0.9" fill="#3c5431" opacity="0.8"/><circle cx="160.5" cy="14.6" r="1.1" fill="#7d9a5c" opacity="0.8"/><circle cx="0.1" cy="67.2" r="1.0" fill="#3c5431" opacity="0.8"/><circle cx="125.0" cy="24.8" r="0.6" fill="#3c5431" opacity="0.8"/><circle cx="169.8" cy="44.1" r="1.7" fill="#3c5431" opacity="0.8"/><circle cx="116.8" cy="64.2" r="1.5" fill="#3c5431" opacity="0.8"/><circle cx="118.0" cy="69.1" r="0.8" fill="#55703f" opacity="0.8"/><circle cx="104.8" cy="48.7" r="1.3" fill="#17220f" opacity="0.8"/><circle cx="41.3" cy="88.7" r="0.8" fill="#17220f" opacity="0.8"/><circle cx="101.7" cy="48.2" r="0.6" fill="#17220f" opacity="0.8"/><circle cx="131.8" cy="13.3" r="1.1" fill="#17220f" opacity="0.8"/><circle cx="13.1" cy="94.9" r="1.1" fill="#3c5431" opacity="0.8"/><circle cx="12.6" cy="15.6" r="1.2" fill="#55703f" opacity="0.8"/><circle cx="161.4" cy="38.7" r="1.2" fill="#17220f" opacity="0.8"/><circle cx="143.5" cy="13.4" r="0.9" fill="#17220f" opacity="0.8"/><circle cx="127.1" cy="84.2" r="1.1" fill="#17220f" opacity="0.8"/><circle cx="157.7" cy="9.6" r="1.5" fill="#17220f" opacity="0.8"/><circle cx="156.2" cy="24.9" r="1.6" fill="#55703f" opacity="0.8"/><circle cx="53.9" cy="19.8" r="1.3" fill="#17220f" opacity="0.8"/><circle cx="99.2" cy="29.9" r="1.4" fill="#17220f" opacity="0.8"/><circle cx="118.5" cy="25.9" r="1.2" fill="#3c5431" opacity="0.8"/><circle cx="28.7" cy="31.6" r="1.4" fill="#3c5431" opacity="0.8"/><circle cx="153.4" cy="2.8" r="1.0" fill="#17220f" opacity="0.8"/><circle cx="152.1" cy="48.4" r="0.9" fill="#17220f" opacity="0.8"/><circle cx="76.4" cy="32.9" r="0.5" fill="#3c5431" opacity="0.8"/><circle cx="152.9" cy="39.4" r="1.1" fill="#55703f" opacity="0.8"/><circle cx="164.2" cy="93.2" r="1.5" fill="#17220f" opacity="0.8"/><circle cx="62.3" cy="32.9" r="1.5" fill="#55703f" opacity="0.8"/><circle cx="140.8" cy="14.9" r="0.8" fill="#7d9a5c" opacity="0.8"/><circle cx="58.5" cy="57.7" r="1.1" fill="#3c5431" opacity="0.8"/><circle cx="0.9" cy="78.3" r="1.7" fill="#3c5431" opacity="0.8"/><circle cx="60.5" cy="67.2" r="0.8" fill="#55703f" opacity="0.8"/><circle cx="137.4" cy="57.6" r="1.5" fill="#3c5431" opacity="0.8"/><circle cx="132.3" cy="87.6" r="1.5" fill="#55703f" opacity="0.8"/><circle cx="122.5" cy="8.1" r="0.8" fill="#55703f" opacity="0.8"/><circle cx="15.2" cy="84.2" r="1.4" fill="#17220f" opacity="0.8"/><circle cx="152.5" cy="69.5" r="0.8" fill="#17220f" opacity="0.8"/><circle cx="116.9" cy="60.6" r="1.3" fill="#55703f" opacity="0.8"/><circle cx="54.7" cy="83.0" r="1.8" fill="#55703f" opacity="0.8"/><circle cx="75.1" cy="23.8" r="1.2" fill="#17220f" opacity="0.8"/><circle cx="114.8" cy="8.6" r="0.9" fill="#17220f" opacity="0.8"/><circle cx="21.1" cy="30.1" r="1.2" fill="#55703f" opacity="0.8"/><circle cx="64.4" cy="86.1" r="1.1" fill="#7d9a5c" opacity="0.8"/><circle cx="57.5" cy="31.4" r="0.7" fill="#55703f" opacity="0.8"/><circle cx="101.8" cy="92.1" r="1.1" fill="#55703f" opacity="0.8"/><circle cx="28.3" cy="90.3" r="0.6" fill="#17220f" opacity="0.8"/><circle cx="170.2" cy="6.9" r="1.7" fill="#7d9a5c" opacity="0.8"/><circle cx="11.1" cy="40.7" r="1.5" fill="#7d9a5c" opacity="0.8"/><circle cx="93.0" cy="88.0" r="1.1" fill="#55703f" opacity="0.8"/><circle cx="11.9" cy="63.6" r="0.8" fill="#3c5431" opacity="0.8"/><circle cx="48.6" cy="2.7" r="1.1" fill="#17220f" opacity="0.8"/><circle cx="87.1" cy="0.6" r="1.1" fill="#17220f" opacity="0.8"/><circle cx="62.0" cy="59.2" r="1.5" fill="#3c5431" opacity="0.8"/><circle cx="73.5" cy="27.8" r="1.3" fill="#55703f" opacity="0.8"/><circle cx="41.2" cy="12.2" r="1.4" fill="#17220f" opacity="0.8"/><circle cx="130.1" cy="53.8" r="0.6" fill="#17220f" opacity="0.8"/><circle cx="160.4" cy="80.9" r="1.3" fill="#7d9a5c" opacity="0.8"/><circle cx="170.8" cy="76.1" r="1.6" fill="#3c5431" opacity="0.8"/><circle cx="153.7" cy="27.7" r="1.7" fill="#7d9a5c" opacity="0.8"/><circle cx="140.9" cy="93.1" r="1.4" fill="#3c5431" opacity="0.8"/><circle cx="19.2" cy="70.4" r="0.6" fill="#55703f" opacity="0.8"/><circle cx="138.5" cy="85.0" r="1.5" fill="#17220f" opacity="0.8"/><circle cx="103.5" cy="47.4" r="1.6" fill="#3c5431" opacity="0.8"/><circle cx="70.5" cy="69.6" r="1.5" fill="#3c5431" opacity="0.8"/><circle cx="63.7" cy="64.6" r="1.2" fill="#17220f" opacity="0.8"/><circle cx="46.6" cy="14.2" r="1.2" fill="#17220f" opacity="0.8"/><circle cx="131.4" cy="57.3" r="0.7" fill="#3c5431" opacity="0.8"/><circle cx="135.1" cy="3.2" r="1.5" fill="#3c5431" opacity="0.8"/><circle cx="154.6" cy="89.0" r="1.3" fill="#55703f" opacity="0.8"/><circle cx="32.2" cy="71.6" r="1.4" fill="#55703f" opacity="0.8"/><circle cx="77.6" cy="22.8" r="1.0" fill="#17220f" opacity="0.8"/><circle cx="113.7" cy="65.8" r="1.3" fill="#55703f" opacity="0.8"/><circle cx="49.4" cy="58.8" r="1.5" fill="#3c5431" opacity="0.8"/><circle cx="30.2" cy="27.7" r="0.9" fill="#17220f" opacity="0.8"/><circle cx="117.7" cy="36.6" r="0.8" fill="#7d9a5c" opacity="0.8"/><circle cx="99.8" cy="88.3" r="1.1" fill="#17220f" opacity="0.8"/><circle cx="12.2" cy="88.5" r="0.5" fill="#17220f" opacity="0.8"/><circle cx="102.8" cy="39.7" r="0.6" fill="#17220f" opacity="0.8"/><circle cx="101.0" cy="16.0" r="1.0" fill="#17220f" opacity="0.8"/><circle cx="86.9" cy="86.1" r="1.3" fill="#55703f" opacity="0.8"/><circle cx="140.4" cy="1.3" r="0.6" fill="#55703f" opacity="0.8"/><circle cx="84.6" cy="40.4" r="1.6" fill="#17220f" opacity="0.8"/><circle cx="82.5" cy="77.6" r="1.4" fill="#17220f" opacity="0.8"/><circle cx="44.8" cy="83.6" r="1.3" fill="#17220f" opacity="0.8"/><circle cx="154.4" cy="51.2" r="1.6" fill="#17220f" opacity="0.8"/><circle cx="105.6" cy="36.7" r="0.5" fill="#3c5431" opacity="0.8"/><circle cx="88.5" cy="31.6" r="0.9" fill="#17220f" opacity="0.8"/><circle cx="108.8" cy="93.8" r="1.4" fill="#7d9a5c" opacity="0.8"/><circle cx="52.3" cy="2.5" r="0.7" fill="#55703f" opacity="0.8"/><circle cx="17.3" cy="73.6" r="1.8" fill="#55703f" opacity="0.8"/><circle cx="84.3" cy="19.8" r="1.6" fill="#17220f" opacity="0.8"/><circle cx="1.1" cy="46.4" r="1.7" fill="#7d9a5c" opacity="0.8"/><circle cx="88.3" cy="3.9" r="1.1" fill="#3c5431" opacity="0.8"/><circle cx="112.5" cy="36.6" r="1.0" fill="#55703f" opacity="0.8"/><circle cx="137.1" cy="24.3" r="1.2" fill="#17220f" opacity="0.8"/><circle cx="86.5" cy="1.3" r="1.3" fill="#17220f" opacity="0.8"/><circle cx="160.3" cy="49.1" r="0.7" fill="#55703f" opacity="0.8"/><circle cx="67.2" cy="53.9" r="1.4" fill="#17220f" opacity="0.8"/><circle cx="90.9" cy="4.8" r="0.9" fill="#17220f" opacity="0.8"/><circle cx="85.5" cy="46.8" r="0.8" fill="#17220f" opacity="0.8"/><circle cx="1.8" cy="92.0" r="1.6" fill="#17220f" opacity="0.8"/><circle cx="170.4" cy="70.8" r="1.2" fill="#17220f" opacity="0.8"/><circle cx="120.6" cy="80.4" r="1.5" fill="#3c5431" opacity="0.8"/><circle cx="150.2" cy="21.1" r="1.5" fill="#7d9a5c" opacity="0.8"/><circle cx="7.1" cy="16.1" r="1.4" fill="#3c5431" opacity="0.8"/><circle cx="24.1" cy="2.1" r="1.7" fill="#7d9a5c" opacity="0.8"/><circle cx="156.8" cy="6.1" r="1.5" fill="#3c5431" opacity="0.8"/><circle cx="63.4" cy="29.2" r="1.4" fill="#17220f" opacity="0.8"/><circle cx="28.6" cy="3.1" r="0.6" fill="#3c5431" opacity="0.8"/><circle cx="124.7" cy="55.8" r="1.8" fill="#55703f" opacity="0.8"/><circle cx="153.8" cy="52.3" r="1.2" fill="#3c5431" opacity="0.8"/><circle cx="109.0" cy="16.9" r="1.2" fill="#3c5431" opacity="0.8"/><circle cx="85.1" cy="47.4" r="1.2" fill="#3c5431" opacity="0.8"/><circle cx="53.8" cy="14.9" r="1.8" fill="#55703f" opacity="0.8"/><circle cx="48.2" cy="80.3" r="1.5" fill="#17220f" opacity="0.8"/><circle cx="48.9" cy="19.0" r="0.5" fill="#17220f" opacity="0.8"/><circle cx="156.7" cy="94.2" r="1.3" fill="#7d9a5c" opacity="0.8"/><circle cx="8.9" cy="53.1" r="1.8" fill="#17220f" opacity="0.8"/><circle cx="3.9" cy="90.4" r="1.3" fill="#55703f" opacity="0.8"/><circle cx="14.3" cy="80.7" r="1.3" fill="#55703f" opacity="0.8"/><circle cx="54.1" cy="2.8" r="1.3" fill="#17220f" opacity="0.8"/><circle cx="27.0" cy="15.0" r="0.6" fill="#3c5431" opacity="0.8"/><circle cx="133.6" cy="8.9" r="0.7" fill="#55703f" opacity="0.8"/><circle cx="42.1" cy="57.1" r="0.7" fill="#55703f" opacity="0.8"/><circle cx="100.2" cy="8.6" r="0.9" fill="#3c5431" opacity="0.8"/><circle cx="40.8" cy="12.7" r="1.0" fill="#17220f" opacity="0.8"/><circle cx="10.0" cy="11.1" r="0.9" fill="#55703f" opacity="0.8"/><circle cx="153.8" cy="38.3" r="1.5" fill="#55703f" opacity="0.8"/><circle cx="167.6" cy="21.6" r="1.4" fill="#55703f" opacity="0.8"/><circle cx="128.3" cy="4.1" r="1.6" fill="#55703f" opacity="0.8"/><circle cx="102.8" cy="4.0" r="0.6" fill="#17220f" opacity="0.8"/><circle cx="95.2" cy="58.0" r="0.6" fill="#55703f" opacity="0.8"/><circle cx="70.3" cy="13.5" r="1.3" fill="#17220f" opacity="0.8"/><circle cx="36.9" cy="20.5" r="1.5" fill="#17220f" opacity="0.8"/><circle cx="40.7" cy="13.5" r="1.4" fill="#3c5431" opacity="0.8"/><circle cx="73.7" cy="15.0" r="0.5" fill="#55703f" opacity="0.8"/><circle cx="103.6" cy="5.9" r="1.3" fill="#55703f" opacity="0.8"/><circle cx="35.1" cy="91.6" r="0.7" fill="#3c5431" opacity="0.8"/><circle cx="75.2" cy="93.4" r="1.1" fill="#3c5431" opacity="0.8"/><circle cx="124.2" cy="27.4" r="1.1" fill="#3c5431" opacity="0.8"/><circle cx="57.0" cy="19.2" r="0.7" fill="#7d9a5c" opacity="0.8"/><circle cx="159.3" cy="15.6" r="1.8" fill="#17220f" opacity="0.8"/><circle cx="130.7" cy="45.4" r="1.1" fill="#3c5431" opacity="0.8"/><circle cx="5.7" cy="50.5" r="0.8" fill="#55703f" opacity="0.8"/><circle cx="108.6" cy="27.3" r="1.6" fill="#3c5431" opacity="0.8"/><circle cx="109.3" cy="71.5" r="1.4" fill="#17220f" opacity="0.8"/><circle cx="149.3" cy="72.0" r="1.5" fill="#55703f" opacity="0.8"/><circle cx="40.3" cy="95.2" r="1.4" fill="#55703f" opacity="0.8"/><circle cx="48.9" cy="29.8" r="1.6" fill="#7d9a5c" opacity="0.8"/><circle cx="120.1" cy="14.4" r="0.9" fill="#3c5431" opacity="0.8"/><circle cx="1.5" cy="32.7" r="1.2" fill="#55703f" opacity="0.8"/><circle cx="118.6" cy="86.6" r="0.8" fill="#55703f" opacity="0.8"/><circle cx="37.6" cy="24.4" r="1.4" fill="#17220f" opacity="0.8"/><circle cx="2.1" cy="68.0" r="0.6" fill="#3c5431" opacity="0.8"/><circle cx="17.8" cy="49.1" r="1.7" fill="#17220f" opacity="0.8"/><circle cx="35.1" cy="86.5" r="1.7" fill="#3c5431" opacity="0.8"/><circle cx="127.0" cy="23.7" r="0.5" fill="#17220f" opacity="0.8"/><circle cx="102.6" cy="76.1" r="0.7" fill="#17220f" opacity="0.8"/><circle cx="51.2" cy="25.2" r="1.0" fill="#55703f" opacity="0.8"/><circle cx="62.7" cy="72.2" r="1.3" fill="#55703f" opacity="0.8"/><circle cx="101.3" cy="94.3" r="1.0" fill="#3c5431" opacity="0.8"/><circle cx="34.4" cy="19.8" r="1.0" fill="#55703f" opacity="0.8"/><circle cx="155.3" cy="44.3" r="1.0" fill="#17220f" opacity="0.8"/><circle cx="97.4" cy="44.6" r="1.8" fill="#3c5431" opacity="0.8"/><circle cx="61.9" cy="54.8" r="1.1" fill="#7d9a5c" opacity="0.8"/><circle cx="31.7" cy="78.0" r="0.9" fill="#17220f" opacity="0.8"/><circle cx="7.0" cy="24.3" r="0.9" fill="#17220f" opacity="0.8"/><circle cx="109.0" cy="11.8" r="0.9" fill="#3c5431" opacity="0.8"/><circle cx="91.7" cy="56.9" r="0.7" fill="#17220f" opacity="0.8"/><circle cx="132.4" cy="96.1" r="0.7" fill="#17220f" opacity="0.8"/><circle cx="151.4" cy="96.8" r="1.0" fill="#7d9a5c" opacity="0.8"/><circle cx="102.2" cy="87.5" r="0.6" fill="#17220f" opacity="0.8"/><circle cx="144.3" cy="45.3" r="0.6" fill="#55703f" opacity="0.8"/><circle cx="0.2" cy="18.8" r="1.5" fill="#55703f" opacity="0.8"/><circle cx="88.4" cy="59.1" r="1.3" fill="#17220f" opacity="0.8"/><circle cx="60.4" cy="60.3" r="0.8" fill="#55703f" opacity="0.8"/><circle cx="157.7" cy="60.9" r="0.7" fill="#17220f" opacity="0.8"/><circle cx="101.2" cy="43.3" r="1.0" fill="#17220f" opacity="0.8"/><circle cx="67.0" cy="36.3" r="0.6" fill="#7d9a5c" opacity="0.8"/><circle cx="133.1" cy="93.6" r="0.8" fill="#3c5431" opacity="0.8"/><circle cx="123.6" cy="24.0" r="1.3" fill="#3c5431" opacity="0.8"/><circle cx="102.0" cy="52.9" r="0.8" fill="#17220f" opacity="0.8"/><circle cx="55.2" cy="48.5" r="1.0" fill="#17220f" opacity="0.8"/><circle cx="9.8" cy="96.2" r="1.0" fill="#55703f" opacity="0.8"/><circle cx="153.9" cy="15.8" r="0.7" fill="#17220f" opacity="0.8"/><circle cx="0.5" cy="21.5" r="1.3" fill="#3c5431" opacity="0.8"/><circle cx="29.8" cy="51.1" r="1.3" fill="#3c5431" opacity="0.8"/><circle cx="117.7" cy="73.4" r="0.6" fill="#17220f" opacity="0.8"/><circle cx="124.7" cy="43.3" r="1.4" fill="#3c5431" opacity="0.8"/><circle cx="132.8" cy="69.1" r="1.1" fill="#55703f" opacity="0.8"/><circle cx="115.3" cy="46.8" r="1.6" fill="#17220f" opacity="0.8"/><circle cx="59.3" cy="57.6" r="1.8" fill="#17220f" opacity="0.8"/><circle cx="49.9" cy="10.0" r="1.3" fill="#3c5431" opacity="0.8"/><circle cx="82.2" cy="34.7" r="1.0" fill="#3c5431" opacity="0.8"/><circle cx="27.3" cy="46.5" r="0.7" fill="#3c5431" opacity="0.8"/><circle cx="85.3" cy="39.9" r="0.9" fill="#55703f" opacity="0.8"/><circle cx="40.4" cy="51.1" r="1.8" fill="#17220f" opacity="0.8"/><circle cx="72.3" cy="66.2" r="1.1" fill="#55703f" opacity="0.8"/><circle cx="152.6" cy="22.8" r="1.2" fill="#3c5431" opacity="0.8"/><circle cx="78.7" cy="61.8" r="0.7" fill="#17220f" opacity="0.8"/><circle cx="42.2" cy="42.3" r="0.9" fill="#17220f" opacity="0.8"/><circle cx="162.8" cy="60.0" r="0.9" fill="#17220f" opacity="0.8"/><circle cx="109.1" cy="58.4" r="1.2" fill="#17220f" opacity="0.8"/><circle cx="104.1" cy="77.3" r="1.2" fill="#3c5431" opacity="0.8"/><circle cx="60.9" cy="36.8" r="0.8" fill="#55703f" opacity="0.8"/><circle cx="128.0" cy="52.4" r="1.2" fill="#17220f" opacity="0.8"/><circle cx="167.4" cy="3.8" r="1.2" fill="#17220f" opacity="0.8"/><circle cx="138.0" cy="93.8" r="1.3" fill="#3c5431" opacity="0.8"/><circle cx="35.4" cy="96.0" r="1.1" fill="#55703f" opacity="0.8"/><circle cx="4.7" cy="32.2" r="1.4" fill="#17220f" opacity="0.8"/><circle cx="1.7" cy="31.7" r="1.4" fill="#55703f" opacity="0.8"/><circle cx="32.3" cy="57.6" r="1.6" fill="#55703f" opacity="0.8"/><circle cx="109.6" cy="47.6" r="0.8" fill="#17220f" opacity="0.8"/><circle cx="97.0" cy="29.4" r="1.4" fill="#17220f" opacity="0.8"/><circle cx="107.2" cy="20.4" r="1.4" fill="#55703f" opacity="0.8"/><circle cx="153.3" cy="40.7" r="1.7" fill="#17220f" opacity="0.8"/><circle cx="67.5" cy="27.7" r="1.0" fill="#17220f" opacity="0.8"/><circle cx="62.0" cy="57.9" r="1.5" fill="#3c5431" opacity="0.8"/><circle cx="158.8" cy="65.5" r="1.5" fill="#55703f" opacity="0.8"/><circle cx="61.2" cy="74.1" r="1.1" fill="#17220f" opacity="0.8"/><circle cx="115.1" cy="68.5" r="0.6" fill="#3c5431" opacity="0.8"/><circle cx="164.2" cy="3.2" r="1.7" fill="#3c5431" opacity="0.8"/><circle cx="160.1" cy="38.1" r="1.1" fill="#3c5431" opacity="0.8"/><circle cx="51.8" cy="22.7" r="1.4" fill="#17220f" opacity="0.8"/><circle cx="4.4" cy="28.2" r="1.7" fill="#3c5431" opacity="0.8"/><circle cx="23.0" cy="49.4" r="1.3" fill="#17220f" opacity="0.8"/><circle cx="141.4" cy="94.5" r="1.4" fill="#55703f" opacity="0.8"/><circle cx="69.6" cy="24.1" r="1.4" fill="#55703f" opacity="0.8"/><circle cx="126.4" cy="14.6" r="1.8" fill="#55703f" opacity="0.8"/><circle cx="118.7" cy="20.8" r="0.7" fill="#17220f" opacity="0.8"/><circle cx="134.7" cy="53.3" r="1.8" fill="#17220f" opacity="0.8"/><circle cx="62.0" cy="27.2" r="1.6" fill="#55703f" opacity="0.8"/><circle cx="125.3" cy="48.1" r="0.9" fill="#17220f" opacity="0.8"/><circle cx="19.6" cy="69.1" r="1.3" fill="#3c5431" opacity="0.8"/><circle cx="149.9" cy="12.8" r="1.3" fill="#17220f" opacity="0.8"/><circle cx="43.9" cy="63.3" r="1.2" fill="#55703f" opacity="0.8"/><circle cx="38.6" cy="34.8" r="1.0" fill="#17220f" opacity="0.8"/><circle cx="116.2" cy="32.6" r="1.0" fill="#55703f" opacity="0.8"/><circle cx="13.2" cy="63.4" r="1.1" fill="#17220f" opacity="0.8"/><circle cx="75.8" cy="16.6" r="0.7" fill="#3c5431" opacity="0.8"/><circle cx="55.7" cy="24.2" r="0.8" fill="#3c5431" opacity="0.8"/><circle cx="120.2" cy="58.9" r="0.5" fill="#3c5431" opacity="0.8"/><circle cx="71.4" cy="17.1" r="1.5" fill="#17220f" opacity="0.8"/><circle cx="145.1" cy="47.9" r="0.8" fill="#55703f" opacity="0.8"/><circle cx="10.0" cy="33.8" r="1.0" fill="#17220f" opacity="0.8"/><circle cx="109.8" cy="29.2" r="1.7" fill="#55703f" opacity="0.8"/><circle cx="7.0" cy="19.0" r="1.4" fill="#3c5431" opacity="0.8"/><circle cx="39.5" cy="32.7" r="1.8" fill="#55703f" opacity="0.8"/><circle cx="62.6" cy="68.1" r="1.8" fill="#3c5431" opacity="0.8"/><circle cx="72.1" cy="90.6" r="1.3" fill="#3c5431" opacity="0.8"/><circle cx="155.3" cy="5.2" r="0.6" fill="#17220f" opacity="0.8"/><circle cx="47.7" cy="94.2" r="1.4" fill="#17220f" opacity="0.8"/><circle cx="103.4" cy="42.7" r="1.1" fill="#17220f" opacity="0.8"/><circle cx="159.2" cy="72.5" r="0.6" fill="#3c5431" opacity="0.8"/><circle cx="161.1" cy="37.4" r="0.7" fill="#17220f" opacity="0.8"/><circle cx="92.6" cy="36.1" r="1.2" fill="#3c5431" opacity="0.8"/><circle cx="74.8" cy="58.9" r="1.3" fill="#3c5431" opacity="0.8"/><circle cx="88.9" cy="20.4" r="0.9" fill="#3c5431" opacity="0.8"/><circle cx="161.4" cy="10.2" r="0.6" fill="#3c5431" opacity="0.8"/><circle cx="161.9" cy="85.4" r="0.8" fill="#3c5431" opacity="0.8"/><circle cx="12.5" cy="78.1" r="0.6" fill="#7d9a5c" opacity="0.8"/><circle cx="61.2" cy="30.1" r="0.9" fill="#17220f" opacity="0.8"/><circle cx="61.5" cy="20.5" r="0.5" fill="#3c5431" opacity="0.8"/><circle cx="143.4" cy="73.5" r="1.2" fill="#17220f" opacity="0.8"/><circle cx="78.6" cy="24.7" r="1.1" fill="#55703f" opacity="0.8"/><circle cx="33.6" cy="51.7" r="1.1" fill="#3c5431" opacity="0.8"/><circle cx="12.1" cy="88.8" r="1.7" fill="#17220f" opacity="0.8"/><circle cx="148.8" cy="44.1" r="1.6" fill="#17220f" opacity="0.8"/><circle cx="9.7" cy="95.8" r="1.0" fill="#17220f" opacity="0.8"/><circle cx="38.0" cy="32.3" r="1.6" fill="#7d9a5c" opacity="0.8"/><circle cx="47.2" cy="11.8" r="0.7" fill="#7d9a5c" opacity="0.8"/><circle cx="81.6" cy="12.7" r="0.9" fill="#3c5431" opacity="0.8"/><circle cx="107.8" cy="51.8" r="1.5" fill="#3c5431" opacity="0.8"/><circle cx="144.6" cy="66.4" r="1.3" fill="#17220f" opacity="0.8"/><circle cx="54.6" cy="27.0" r="1.6" fill="#55703f" opacity="0.8"/><circle cx="120.7" cy="66.0" r="0.7" fill="#17220f" opacity="0.8"/><circle cx="13.5" cy="43.3" r="0.9" fill="#7d9a5c" opacity="0.8"/><circle cx="16.6" cy="60.4" r="0.9" fill="#17220f" opacity="0.8"/><circle cx="139.8" cy="79.7" r="1.1" fill="#3c5431" opacity="0.8"/><circle cx="20.0" cy="58.4" r="1.5" fill="#55703f" opacity="0.8"/><circle cx="141.2" cy="78.2" r="0.8" fill="#55703f" opacity="0.8"/><circle cx="15.2" cy="23.0" r="1.2" fill="#3c5431" opacity="0.8"/><circle cx="110.0" cy="59.7" r="1.4" fill="#17220f" opacity="0.8"/><circle cx="7.4" cy="27.6" r="1.3" fill="#3c5431" opacity="0.8"/><circle cx="69.6" cy="53.4" r="1.6" fill="#3c5431" opacity="0.8"/><circle cx="82.3" cy="39.2" r="0.6" fill="#17220f" opacity="0.8"/><circle cx="167.6" cy="49.3" r="1.1" fill="#3c5431" opacity="0.8"/><circle cx="39.3" cy="43.1" r="0.8" fill="#3c5431" opacity="0.8"/><circle cx="87.4" cy="77.3" r="1.5" fill="#17220f" opacity="0.8"/><circle cx="170.3" cy="54.9" r="1.0" fill="#17220f" opacity="0.8"/><circle cx="2.7" cy="34.4" r="1.3" fill="#17220f" opacity="0.8"/><circle cx="22.3" cy="46.1" r="0.7" fill="#17220f" opacity="0.8"/><circle cx="85.7" cy="70.1" r="0.9" fill="#3c5431" opacity="0.8"/><circle cx="54.8" cy="13.5" r="1.5" fill="#3c5431" opacity="0.8"/><circle cx="112.9" cy="72.2" r="1.2" fill="#17220f" opacity="0.8"/><circle cx="25.8" cy="52.5" r="1.4" fill="#17220f" opacity="0.8"/><circle cx="126.0" cy="88.8" r="1.3" fill="#55703f" opacity="0.8"/><circle cx="84.3" cy="73.0" r="0.5" fill="#3c5431" opacity="0.8"/><circle cx="128.6" cy="76.6" r="1.7" fill="#17220f" opacity="0.8"/><circle cx="8.3" cy="72.2" r="1.8" fill="#7d9a5c" opacity="0.8"/><circle cx="148.6" cy="2.2" r="1.4" fill="#55703f" opacity="0.8"/><circle cx="51.8" cy="60.0" r="1.3" fill="#17220f" opacity="0.8"/><circle cx="158.1" cy="9.1" r="0.7" fill="#55703f" opacity="0.8"/><circle cx="131.6" cy="46.7" r="1.6" fill="#17220f" opacity="0.8"/><circle cx="42.8" cy="3.9" r="1.6" fill="#17220f" opacity="0.8"/><circle cx="105.0" cy="46.8" r="1.2" fill="#17220f" opacity="0.8"/><circle cx="20.9" cy="77.8" r="1.1" fill="#17220f" opacity="0.8"/><circle cx="93.0" cy="4.7" r="1.5" fill="#17220f" opacity="0.8"/><circle cx="55.9" cy="25.7" r="0.6" fill="#3c5431" opacity="0.8"/><circle cx="114.8" cy="78.0" r="1.1" fill="#55703f" opacity="0.8"/><circle cx="69.6" cy="52.0" r="1.6" fill="#17220f" opacity="0.8"/><circle cx="80.9" cy="34.3" r="0.6" fill="#7d9a5c" opacity="0.8"/><circle cx="145.6" cy="75.8" r="0.5" fill="#55703f" opacity="0.8"/><circle cx="22.1" cy="88.1" r="1.0" fill="#17220f" opacity="0.8"/><circle cx="130.4" cy="2.4" r="1.6" fill="#17220f" opacity="0.8"/><circle cx="142.5" cy="4.4" r="0.7" fill="#3c5431" opacity="0.8"/><circle cx="104.8" cy="70.1" r="0.7" fill="#3c5431" opacity="0.8"/><circle cx="146.4" cy="78.7" r="1.6" fill="#3c5431" opacity="0.8"/><circle cx="140.5" cy="49.4" r="1.1" fill="#3c5431" opacity="0.8"/><circle cx="141.0" cy="18.0" r="0.9" fill="#55703f" opacity="0.8"/><circle cx="40.6" cy="11.6" r="1.5" fill="#7d9a5c" opacity="0.8"/><circle cx="22.1" cy="3.9" r="1.2" fill="#3c5431" opacity="0.8"/><circle cx="112.1" cy="59.5" r="1.1" fill="#17220f" opacity="0.8"/><circle cx="61.9" cy="46.0" r="1.8" fill="#3c5431" opacity="0.8"/><circle cx="111.5" cy="63.8" r="1.3" fill="#3c5431" opacity="0.8"/><circle cx="18.9" cy="21.7" r="0.8" fill="#3c5431" opacity="0.8"/><circle cx="51.9" cy="86.5" r="0.6" fill="#17220f" opacity="0.8"/><circle cx="127.7" cy="6.1" r="0.6" fill="#17220f" opacity="0.8"/><circle cx="67.3" cy="48.5" r="1.3" fill="#55703f" opacity="0.8"/><circle cx="159.1" cy="25.1" r="1.1" fill="#17220f" opacity="0.8"/><circle cx="32.1" cy="54.3" r="1.6" fill="#17220f" opacity="0.8"/><circle cx="27.7" cy="8.1" r="1.0" fill="#7d9a5c" opacity="0.8"/><circle cx="109.8" cy="11.3" r="1.8" fill="#17220f" opacity="0.8"/><circle cx="77.1" cy="57.8" r="1.8" fill="#55703f" opacity="0.8"/><circle cx="59.4" cy="93.1" r="1.3" fill="#55703f" opacity="0.8"/><circle cx="53.3" cy="61.1" r="1.4" fill="#7d9a5c" opacity="0.8"/><circle cx="145.6" cy="58.2" r="0.6" fill="#3c5431" opacity="0.8"/><circle cx="21.4" cy="90.5" r="1.7" fill="#55703f" opacity="0.8"/><circle cx="18.1" cy="58.4" r="1.3" fill="#55703f" opacity="0.8"/><circle cx="148.2" cy="12.4" r="0.8" fill="#17220f" opacity="0.8"/><circle cx="169.2" cy="46.9" r="1.3" fill="#55703f" opacity="0.8"/><circle cx="32.4" cy="31.7" r="1.3" fill="#17220f" opacity="0.8"/><circle cx="127.6" cy="39.4" r="1.3" fill="#3c5431" opacity="0.8"/><circle cx="65.2" cy="94.4" r="1.6" fill="#17220f" opacity="0.8"/><circle cx="95.1" cy="58.6" r="0.8" fill="#17220f" opacity="0.8"/><circle cx="72.4" cy="57.1" r="1.6" fill="#3c5431" opacity="0.8"/><circle cx="85.7" cy="44.8" r="0.6" fill="#17220f" opacity="0.8"/><circle cx="132.4" cy="62.4" r="0.6" fill="#55703f" opacity="0.8"/><circle cx="151.1" cy="82.6" r="1.5" fill="#17220f" opacity="0.8"/><circle cx="45.3" cy="36.2" r="1.0" fill="#17220f" opacity="0.8"/><circle cx="33.5" cy="66.7" r="1.6" fill="#17220f" opacity="0.8"/><circle cx="30.0" cy="23.5" r="1.6" fill="#3c5431" opacity="0.8"/><circle cx="50.4" cy="59.4" r="1.5" fill="#3c5431" opacity="0.8"/><circle cx="102.0" cy="77.4" r="1.2" fill="#3c5431" opacity="0.8"/><circle cx="73.1" cy="84.1" r="1.7" fill="#3c5431" opacity="0.8"/><circle cx="105.5" cy="85.7" r="0.7" fill="#17220f" opacity="0.8"/><circle cx="57.8" cy="57.0" r="1.5" fill="#3c5431" opacity="0.8"/><circle cx="96.7" cy="75.5" r="1.0" fill="#3c5431" opacity="0.8"/><circle cx="132.1" cy="45.4" r="1.5" fill="#17220f" opacity="0.8"/><circle cx="106.0" cy="70.5" r="1.4" fill="#17220f" opacity="0.8"/><circle cx="89.1" cy="61.6" r="1.4" fill="#7d9a5c" opacity="0.8"/><circle cx="19.3" cy="20.9" r="1.4" fill="#17220f" opacity="0.8"/><circle cx="75.7" cy="4.8" r="1.3" fill="#3c5431" opacity="0.8"/><circle cx="18.4" cy="14.1" r="0.9" fill="#17220f" opacity="0.8"/><circle cx="84.3" cy="57.0" r="0.9" fill="#17220f" opacity="0.8"/><circle cx="10.4" cy="83.0" r="0.7" fill="#7d9a5c" opacity="0.8"/><circle cx="73.3" cy="16.5" r="1.2" fill="#17220f" opacity="0.8"/><circle cx="42.3" cy="57.3" r="1.0" fill="#17220f" opacity="0.8"/><circle cx="112.3" cy="24.4" r="1.8" fill="#17220f" opacity="0.8"/><circle cx="28.8" cy="27.6" r="1.5" fill="#55703f" opacity="0.8"/><circle cx="138.9" cy="21.8" r="1.0" fill="#3c5431" opacity="0.8"/><circle cx="90.7" cy="90.5" r="1.5" fill="#3c5431" opacity="0.8"/><circle cx="24.5" cy="96.7" r="1.8" fill="#55703f" opacity="0.8"/><circle cx="129.3" cy="72.6" r="1.7" fill="#55703f" opacity="0.8"/><circle cx="100.0" cy="52.7" r="1.3" fill="#17220f" opacity="0.8"/><circle cx="106.1" cy="9.6" r="1.6" fill="#17220f" opacity="0.8"/><circle cx="48.1" cy="72.4" r="0.7" fill="#17220f" opacity="0.8"/><circle cx="84.4" cy="91.0" r="1.8" fill="#17220f" opacity="0.8"/><circle cx="2.9" cy="16.7" r="1.5" fill="#3c5431" opacity="0.8"/><circle cx="144.1" cy="49.2" r="1.1" fill="#55703f" opacity="0.8"/><circle cx="63.7" cy="79.7" r="1.3" fill="#17220f" opacity="0.8"/><circle cx="4.8" cy="46.9" r="0.9" fill="#7d9a5c" opacity="0.8"/><circle cx="8.4" cy="46.6" r="1.5" fill="#17220f" opacity="0.8"/><circle cx="117.0" cy="37.3" r="0.8" fill="#17220f" opacity="0.8"/><circle cx="101.1" cy="65.1" r="1.2" fill="#17220f" opacity="0.8"/><circle cx="17.3" cy="17.1" r="1.6" fill="#17220f" opacity="0.8"/><circle cx="104.2" cy="16.5" r="0.8" fill="#17220f" opacity="0.8"/><circle cx="170.2" cy="25.6" r="1.1" fill="#17220f" opacity="0.8"/><circle cx="75.6" cy="94.3" r="1.0" fill="#17220f" opacity="0.8"/><circle cx="70.4" cy="59.1" r="0.9" fill="#17220f" opacity="0.8"/><circle cx="116.9" cy="42.2" r="1.7" fill="#7d9a5c" opacity="0.8"/><circle cx="105.0" cy="73.9" r="1.5" fill="#17220f" opacity="0.8"/><circle cx="103.3" cy="74.7" r="1.5" fill="#3c5431" opacity="0.8"/><circle cx="128.0" cy="78.0" r="1.6" fill="#17220f" opacity="0.8"/><circle cx="169.4" cy="85.5" r="0.6" fill="#17220f" opacity="0.8"/><circle cx="15.1" cy="51.0" r="0.7" fill="#3c5431" opacity="0.8"/><circle cx="60.9" cy="56.4" r="0.9" fill="#17220f" opacity="0.8"/><circle cx="0.2" cy="87.5" r="1.0" fill="#3c5431" opacity="0.8"/><circle cx="12.4" cy="6.8" r="1.2" fill="#3c5431" opacity="0.8"/><circle cx="159.5" cy="25.7" r="1.6" fill="#7d9a5c" opacity="0.8"/><circle cx="64.5" cy="55.6" r="0.6" fill="#3c5431" opacity="0.8"/><circle cx="136.9" cy="80.6" r="1.3" fill="#17220f" opacity="0.8"/><circle cx="24.1" cy="41.4" r="1.3" fill="#17220f" opacity="0.8"/><circle cx="56.1" cy="83.2" r="1.3" fill="#55703f" opacity="0.8"/><circle cx="19.9" cy="49.3" r="0.8" fill="#3c5431" opacity="0.8"/><circle cx="166.5" cy="61.6" r="1.7" fill="#55703f" opacity="0.8"/><circle cx="35.7" cy="80.6" r="1.4" fill="#3c5431" opacity="0.8"/><circle cx="157.3" cy="12.6" r="1.5" fill="#55703f" opacity="0.8"/><circle cx="0.7" cy="56.4" r="1.2" fill="#3c5431" opacity="0.8"/><circle cx="55.9" cy="9.1" r="1.2" fill="#55703f" opacity="0.8"/><circle cx="134.9" cy="1.7" r="1.3" fill="#17220f" opacity="0.8"/><circle cx="153.5" cy="78.7" r="1.0" fill="#17220f" opacity="0.8"/><circle cx="5.0" cy="41.6" r="0.7" fill="#55703f" opacity="0.8"/><circle cx="87.8" cy="49.1" r="0.6" fill="#17220f" opacity="0.8"/><circle cx="32.8" cy="15.8" r="0.7" fill="#17220f" opacity="0.8"/><circle cx="93.5" cy="49.6" r="1.0" fill="#3c5431" opacity="0.8"/><circle cx="9.7" cy="39.6" r="1.4" fill="#17220f" opacity="0.8"/><circle cx="114.4" cy="88.9" r="1.8" fill="#7d9a5c" opacity="0.8"/><circle cx="54.5" cy="29.7" r="0.6" fill="#17220f" opacity="0.8"/><circle cx="114.4" cy="46.8" r="0.6" fill="#3c5431" opacity="0.8"/><circle cx="145.2" cy="61.6" r="1.0" fill="#17220f" opacity="0.8"/><circle cx="8.1" cy="24.7" r="1.8" fill="#55703f" opacity="0.8"/><circle cx="28.9" cy="83.3" r="0.5" fill="#17220f" opacity="0.8"/><circle cx="64.1" cy="17.2" r="1.6" fill="#55703f" opacity="0.8"/><circle cx="133.0" cy="59.2" r="1.3" fill="#55703f" opacity="0.8"/><circle cx="138.6" cy="65.0" r="1.8" fill="#17220f" opacity="0.8"/><circle cx="74.5" cy="50.0" r="1.5" fill="#17220f" opacity="0.8"/><circle cx="78.1" cy="51.9" r="1.3" fill="#55703f" opacity="0.8"/><circle cx="80.6" cy="93.3" r="0.7" fill="#55703f" opacity="0.8"/><circle cx="99.9" cy="75.1" r="1.7" fill="#55703f" opacity="0.8"/><circle cx="149.1" cy="40.2" r="0.8" fill="#3c5431" opacity="0.8"/><circle cx="83.8" cy="52.5" r="1.4" fill="#55703f" opacity="0.8"/><circle cx="7.7" cy="13.0" r="0.8" fill="#17220f" opacity="0.8"/><circle cx="60.6" cy="1.6" r="0.7" fill="#17220f" opacity="0.8"/><circle cx="94.4" cy="29.1" r="1.6" fill="#17220f" opacity="0.8"/><circle cx="121.5" cy="35.1" r="1.5" fill="#17220f" opacity="0.8"/><circle cx="159.9" cy="19.3" r="0.7" fill="#55703f" opacity="0.8"/><circle cx="117.3" cy="74.6" r="1.1" fill="#55703f" opacity="0.8"/><circle cx="155.7" cy="79.6" r="1.5" fill="#55703f" opacity="0.8"/><circle cx="26.3" cy="80.5" r="0.7" fill="#3c5431" opacity="0.8"/><circle cx="46.6" cy="38.2" r="0.9" fill="#17220f" opacity="0.8"/><circle cx="90.8" cy="84.8" r="1.0" fill="#17220f" opacity="0.8"/><circle cx="138.9" cy="25.3" r="0.6" fill="#17220f" opacity="0.8"/><circle cx="120.3" cy="93.1" r="1.4" fill="#3c5431" opacity="0.8"/><circle cx="121.8" cy="73.0" r="1.8" fill="#3c5431" opacity="0.8"/><circle cx="26.2" cy="97.0" r="1.4" fill="#17220f" opacity="0.8"/><circle cx="154.4" cy="86.6" r="1.0" fill="#17220f" opacity="0.8"/><circle cx="26.9" cy="92.1" r="1.4" fill="#3c5431" opacity="0.8"/><circle cx="37.3" cy="72.3" r="1.7" fill="#55703f" opacity="0.8"/><circle cx="79.1" cy="8.4" r="1.3" fill="#17220f" opacity="0.8"/><circle cx="73.8" cy="40.5" r="1.7" fill="#55703f" opacity="0.8"/><circle cx="21.1" cy="52.8" r="1.3" fill="#17220f" opacity="0.8"/><circle cx="100.3" cy="4.9" r="1.5" fill="#3c5431" opacity="0.8"/><circle cx="158.0" cy="88.2" r="0.9" fill="#17220f" opacity="0.8"/><circle cx="113.6" cy="66.2" r="1.5" fill="#17220f" opacity="0.8"/><circle cx="70.1" cy="78.2" r="1.3" fill="#17220f" opacity="0.8"/><circle cx="19.7" cy="69.0" r="0.9" fill="#55703f" opacity="0.8"/><circle cx="144.4" cy="43.0" r="0.8" fill="#17220f" opacity="0.8"/><circle cx="92.5" cy="69.7" r="0.6" fill="#3c5431" opacity="0.8"/><circle cx="64.2" cy="45.9" r="1.3" fill="#3c5431" opacity="0.8"/><circle cx="119.5" cy="21.9" r="1.5" fill="#3c5431" opacity="0.8"/><circle cx="100.9" cy="59.9" r="1.7" fill="#7d9a5c" opacity="0.8"/><circle cx="2.4" cy="68.8" r="1.2" fill="#3c5431" opacity="0.8"/><circle cx="40.5" cy="42.8" r="1.0" fill="#17220f" opacity="0.8"/><circle cx="157.5" cy="29.3" r="1.1" fill="#17220f" opacity="0.8"/><circle cx="57.0" cy="24.2" r="1.0" fill="#17220f" opacity="0.8"/><circle cx="50.3" cy="32.9" r="1.1" fill="#3c5431" opacity="0.8"/><circle cx="109.8" cy="62.2" r="1.1" fill="#3c5431" opacity="0.8"/><circle cx="88.6" cy="63.3" r="1.0" fill="#7d9a5c" opacity="0.8"/><circle cx="138.9" cy="81.9" r="0.7" fill="#17220f" opacity="0.8"/><circle cx="106.4" cy="84.2" r="1.1" fill="#55703f" opacity="0.8"/><circle cx="103.4" cy="0.4" r="1.8" fill="#55703f" opacity="0.8"/><circle cx="65.2" cy="78.8" r="0.8" fill="#3c5431" opacity="0.8"/><circle cx="110.2" cy="37.9" r="1.6" fill="#17220f" opacity="0.8"/><circle cx="30.9" cy="55.2" r="1.4" fill="#17220f" opacity="0.8"/><circle cx="116.4" cy="21.6" r="1.2" fill="#3c5431" opacity="0.8"/><circle cx="126.3" cy="39.2" r="1.5" fill="#17220f" opacity="0.8"/><circle cx="163.2" cy="34.3" r="0.7" fill="#17220f" opacity="0.8"/><circle cx="161.8" cy="67.2" r="0.9" fill="#17220f" opacity="0.8"/><circle cx="118.5" cy="69.6" r="0.7" fill="#17220f" opacity="0.8"/><circle cx="140.2" cy="59.7" r="1.8" fill="#3c5431" opacity="0.8"/><circle cx="29.6" cy="49.7" r="1.4" fill="#7d9a5c" opacity="0.8"/><circle cx="53.4" cy="14.2" r="1.6" fill="#3c5431" opacity="0.8"/><circle cx="22.3" cy="46.1" r="1.7" fill="#3c5431" opacity="0.8"/><circle cx="93.1" cy="9.3" r="1.8" fill="#17220f" opacity="0.8"/><circle cx="93.5" cy="29.1" r="1.7" fill="#17220f" opacity="0.8"/><circle cx="111.8" cy="78.5" r="1.6" fill="#3c5431" opacity="0.8"/><circle cx="143.8" cy="68.2" r="0.9" fill="#3c5431" opacity="0.8"/><circle cx="95.3" cy="54.5" r="1.4" fill="#17220f" opacity="0.8"/><circle cx="142.4" cy="84.2" r="0.7" fill="#55703f" opacity="0.8"/><circle cx="28.6" cy="35.4" r="1.5" fill="#17220f" opacity="0.8"/><circle cx="167.7" cy="21.1" r="1.6" fill="#3c5431" opacity="0.8"/><circle cx="92.2" cy="90.6" r="1.0" fill="#7d9a5c" opacity="0.8"/><circle cx="127.4" cy="47.9" r="1.1" fill="#55703f" opacity="0.8"/><circle cx="8.8" cy="22.2" r="1.0" fill="#3c5431" opacity="0.8"/><circle cx="159.3" cy="65.0" r="0.7" fill="#55703f" opacity="0.8"/><circle cx="168.5" cy="76.9" r="0.9" fill="#55703f" opacity="0.8"/><circle cx="20.9" cy="56.1" r="1.4" fill="#3c5431" opacity="0.8"/><circle cx="55.9" cy="54.2" r="1.3" fill="#3c5431" opacity="0.8"/><circle cx="49.7" cy="18.6" r="1.7" fill="#55703f" opacity="0.8"/><circle cx="22.6" cy="17.9" r="1.2" fill="#55703f" opacity="0.8"/><circle cx="100.8" cy="95.8" r="0.9" fill="#17220f" opacity="0.8"/><circle cx="29.3" cy="75.0" r="0.8" fill="#17220f" opacity="0.8"/><circle cx="158.2" cy="16.3" r="0.9" fill="#55703f" opacity="0.8"/><circle cx="44.3" cy="21.3" r="1.7" fill="#55703f" opacity="0.8"/><circle cx="60.9" cy="66.1" r="1.3" fill="#55703f" opacity="0.8"/><circle cx="113.7" cy="13.3" r="1.4" fill="#17220f" opacity="0.8"/><circle cx="142.1" cy="7.6" r="0.7" fill="#3c5431" opacity="0.8"/><circle cx="141.4" cy="34.4" r="1.0" fill="#17220f" opacity="0.8"/><circle cx="119.0" cy="29.7" r="0.9" fill="#17220f" opacity="0.8"/><circle cx="43.2" cy="15.8" r="0.6" fill="#17220f" opacity="0.8"/><circle cx="144.0" cy="49.2" r="1.7" fill="#3c5431" opacity="0.8"/><circle cx="84.6" cy="55.2" r="1.4" fill="#17220f" opacity="0.8"/><circle cx="44.5" cy="62.0" r="1.4" fill="#3c5431" opacity="0.8"/><circle cx="74.7" cy="81.2" r="0.7" fill="#17220f" opacity="0.8"/><circle cx="114.0" cy="76.3" r="0.9" fill="#7d9a5c" opacity="0.8"/><circle cx="50.7" cy="24.6" r="1.3" fill="#3c5431" opacity="0.8"/><circle cx="5.0" cy="8.0" r="0.6" fill="#17220f" opacity="0.8"/><circle cx="4.3" cy="73.0" r="1.3" fill="#3c5431" opacity="0.8"/><circle cx="45.5" cy="15.1" r="1.7" fill="#3c5431" opacity="0.8"/><circle cx="50.9" cy="44.4" r="1.2" fill="#55703f" opacity="0.8"/><circle cx="90.6" cy="25.8" r="0.6" fill="#55703f" opacity="0.8"/><circle cx="139.3" cy="68.2" r="0.8" fill="#55703f" opacity="0.8"/><circle cx="84.6" cy="68.0" r="0.5" fill="#3c5431" opacity="0.8"/><circle cx="135.3" cy="78.3" r="1.5" fill="#3c5431" opacity="0.8"/><circle cx="42.9" cy="83.7" r="1.7" fill="#55703f" opacity="0.8"/><circle cx="90.3" cy="88.6" r="0.5" fill="#55703f" opacity="0.8"/><circle cx="32.7" cy="19.1" r="1.1" fill="#3c5431" opacity="0.8"/><circle cx="45.5" cy="19.1" r="1.6" fill="#3c5431" opacity="0.8"/><circle cx="75.5" cy="74.6" r="1.3" fill="#55703f" opacity="0.8"/><circle cx="67.8" cy="14.7" r="0.6" fill="#3c5431" opacity="0.8"/><circle cx="55.3" cy="4.6" r="1.2" fill="#3c5431" opacity="0.8"/><circle cx="157.2" cy="28.2" r="1.0" fill="#55703f" opacity="0.8"/><circle cx="116.2" cy="14.4" r="1.0" fill="#17220f" opacity="0.8"/><circle cx="122.2" cy="65.5" r="1.1" fill="#17220f" opacity="0.8"/><circle cx="87.5" cy="24.1" r="1.2" fill="#17220f" opacity="0.8"/><circle cx="12.6" cy="86.1" r="1.3" fill="#55703f" opacity="0.8"/><circle cx="107.9" cy="3.3" r="1.8" fill="#17220f" opacity="0.8"/><circle cx="5.1" cy="28.6" r="0.6" fill="#17220f" opacity="0.8"/><circle cx="118.7" cy="49.3" r="1.1" fill="#7d9a5c" opacity="0.8"/><circle cx="81.3" cy="92.4" r="1.4" fill="#17220f" opacity="0.8"/><circle cx="147.2" cy="20.3" r="0.8" fill="#55703f" opacity="0.8"/><circle cx="61.7" cy="44.8" r="1.4" fill="#55703f" opacity="0.8"/><circle cx="95.2" cy="93.0" r="1.4" fill="#3c5431" opacity="0.8"/><circle cx="106.6" cy="24.6" r="1.6" fill="#17220f" opacity="0.8"/><circle cx="157.3" cy="70.7" r="1.0" fill="#17220f" opacity="0.8"/><circle cx="135.6" cy="65.5" r="1.6" fill="#17220f" opacity="0.8"/><circle cx="29.0" cy="18.4" r="1.2" fill="#55703f" opacity="0.8"/><circle cx="63.4" cy="10.2" r="1.1" fill="#3c5431" opacity="0.8"/><circle cx="141.1" cy="96.1" r="1.2" fill="#17220f" opacity="0.8"/><circle cx="33.7" cy="0.7" r="0.5" fill="#17220f" opacity="0.8"/><circle cx="42.0" cy="38.8" r="1.6" fill="#55703f" opacity="0.8"/><circle cx="146.1" cy="62.2" r="1.8" fill="#7d9a5c" opacity="0.8"/><circle cx="47.2" cy="37.1" r="1.8" fill="#7d9a5c" opacity="0.8"/><circle cx="59.6" cy="24.3" r="1.5" fill="#17220f" opacity="0.8"/><circle cx="167.8" cy="20.1" r="1.5" fill="#3c5431" opacity="0.8"/><circle cx="80.3" cy="84.4" r="0.8" fill="#3c5431" opacity="0.8"/><circle cx="39.9" cy="74.5" r="1.3" fill="#3c5431" opacity="0.8"/><circle cx="136.7" cy="44.8" r="1.4" fill="#55703f" opacity="0.8"/><circle cx="156.3" cy="60.8" r="0.6" fill="#3c5431" opacity="0.8"/><circle cx="154.2" cy="67.7" r="0.7" fill="#55703f" opacity="0.8"/><circle cx="128.5" cy="11.3" r="0.7" fill="#3c5431" opacity="0.8"/><circle cx="38.8" cy="1.8" r="1.6" fill="#55703f" opacity="0.8"/><circle cx="165.4" cy="24.0" r="1.7" fill="#17220f" opacity="0.8"/><circle cx="131.5" cy="33.9" r="1.2" fill="#7d9a5c" opacity="0.8"/><circle cx="125.6" cy="34.3" r="1.5" fill="#17220f" opacity="0.8"/><circle cx="91.8" cy="5.6" r="1.8" fill="#17220f" opacity="0.8"/><circle cx="0.8" cy="23.9" r="1.4" fill="#55703f" opacity="0.8"/><circle cx="19.5" cy="28.8" r="1.2" fill="#55703f" opacity="0.8"/><circle cx="37.9" cy="15.4" r="0.9" fill="#17220f" opacity="0.8"/><circle cx="162.8" cy="89.4" r="0.5" fill="#3c5431" opacity="0.8"/><circle cx="61.3" cy="11.3" r="1.6" fill="#17220f" opacity="0.8"/><circle cx="2.0" cy="24.0" r="1.6" fill="#17220f" opacity="0.8"/><circle cx="171.3" cy="55.9" r="1.6" fill="#55703f" opacity="0.8"/><circle cx="130.7" cy="66.0" r="0.7" fill="#55703f" opacity="0.8"/><circle cx="14.0" cy="34.8" r="1.7" fill="#55703f" opacity="0.8"/><circle cx="45.9" cy="94.2" r="1.4" fill="#17220f" opacity="0.8"/><circle cx="94.5" cy="31.5" r="1.7" fill="#17220f" opacity="0.8"/><circle cx="90.9" cy="21.5" r="1.3" fill="#17220f" opacity="0.8"/><circle cx="30.3" cy="79.9" r="1.2" fill="#3c5431" opacity="0.8"/><circle cx="8.5" cy="6.6" r="1.3" fill="#17220f" opacity="0.8"/><circle cx="148.5" cy="23.0" r="1.7" fill="#55703f" opacity="0.8"/><circle cx="3.7" cy="45.6" r="1.1" fill="#3c5431" opacity="0.8"/><circle cx="163.9" cy="3.4" r="1.6" fill="#3c5431" opacity="0.8"/><circle cx="63.6" cy="66.8" r="0.9" fill="#17220f" opacity="0.8"/><circle cx="5.4" cy="4.6" r="1.8" fill="#17220f" opacity="0.8"/><circle cx="122.0" cy="42.6" r="1.7" fill="#17220f" opacity="0.8"/><circle cx="26.0" cy="20.1" r="1.1" fill="#17220f" opacity="0.8"/><circle cx="71.1" cy="44.7" r="1.3" fill="#55703f" opacity="0.8"/><circle cx="145.0" cy="22.2" r="1.6" fill="#7d9a5c" opacity="0.8"/><circle cx="160.9" cy="27.7" r="1.4" fill="#17220f" opacity="0.8"/><circle cx="146.7" cy="52.6" r="0.9" fill="#17220f" opacity="0.8"/><circle cx="166.9" cy="13.7" r="0.7" fill="#55703f" opacity="0.8"/><circle cx="150.6" cy="2.4" r="1.5" fill="#55703f" opacity="0.8"/><circle cx="143.7" cy="11.5" r="1.7" fill="#17220f" opacity="0.8"/><circle cx="26.3" cy="39.4" r="1.6" fill="#3c5431" opacity="0.8"/><circle cx="149.9" cy="1.0" r="1.7" fill="#3c5431" opacity="0.8"/><circle cx="160.4" cy="15.9" r="0.7" fill="#3c5431" opacity="0.8"/><circle cx="34.5" cy="64.2" r="1.4" fill="#7d9a5c" opacity="0.8"/><circle cx="43.4" cy="53.4" r="1.8" fill="#3c5431" opacity="0.8"/><circle cx="42.5" cy="84.4" r="1.1" fill="#3c5431" opacity="0.8"/><circle cx="54.6" cy="69.9" r="1.8" fill="#55703f" opacity="0.8"/><circle cx="98.9" cy="32.0" r="0.7" fill="#3c5431" opacity="0.8"/><circle cx="44.1" cy="84.2" r="0.8" fill="#17220f" opacity="0.8"/><circle cx="66.4" cy="84.5" r="1.2" fill="#17220f" opacity="0.8"/><circle cx="2.8" cy="19.8" r="1.2" fill="#3c5431" opacity="0.8"/><circle cx="93.7" cy="64.2" r="0.9" fill="#3c5431" opacity="0.8"/><circle cx="165.8" cy="88.5" r="1.6" fill="#17220f" opacity="0.8"/><circle cx="167.9" cy="92.2" r="0.5" fill="#17220f" opacity="0.8"/><circle cx="44.9" cy="83.4" r="1.1" fill="#3c5431" opacity="0.8"/><circle cx="42.9" cy="13.1" r="1.3" fill="#55703f" opacity="0.8"/><circle cx="117.7" cy="73.8" r="0.5" fill="#17220f" opacity="0.8"/><circle cx="164.5" cy="88.2" r="1.2" fill="#3c5431" opacity="0.8"/><circle cx="144.4" cy="16.6" r="1.8" fill="#55703f" opacity="0.8"/><circle cx="112.0" cy="42.6" r="1.3" fill="#55703f" opacity="0.8"/><circle cx="77.8" cy="50.6" r="0.9" fill="#55703f" opacity="0.8"/><circle cx="77.8" cy="41.5" r="0.8" fill="#7d9a5c" opacity="0.8"/><circle cx="167.8" cy="73.8" r="1.0" fill="#17220f" opacity="0.8"/><circle cx="9.4" cy="15.0" r="1.3" fill="#3c5431" opacity="0.8"/><circle cx="155.8" cy="22.1" r="1.7" fill="#55703f" opacity="0.8"/><circle cx="137.9" cy="63.8" r="0.8" fill="#3c5431" opacity="0.8"/><circle cx="141.7" cy="42.0" r="1.6" fill="#55703f" opacity="0.8"/><circle cx="123.4" cy="19.4" r="1.3" fill="#17220f" opacity="0.8"/><circle cx="27.4" cy="8.0" r="0.7" fill="#17220f" opacity="0.8"/><circle cx="36.6" cy="35.1" r="1.1" fill="#17220f" opacity="0.8"/><circle cx="32.2" cy="95.4" r="0.7" fill="#7d9a5c" opacity="0.8"/><circle cx="71.5" cy="55.0" r="1.6" fill="#17220f" opacity="0.8"/><circle cx="155.9" cy="44.2" r="0.6" fill="#17220f" opacity="0.8"/><circle cx="137.4" cy="35.2" r="1.6" fill="#55703f" opacity="0.8"/><circle cx="147.3" cy="60.7" r="1.5" fill="#55703f" opacity="0.8"/><circle cx="150.5" cy="92.3" r="0.6" fill="#7d9a5c" opacity="0.8"/><circle cx="170.1" cy="39.6" r="1.3" fill="#55703f" opacity="0.8"/><circle cx="137.5" cy="10.5" r="1.6" fill="#17220f" opacity="0.8"/><circle cx="122.6" cy="30.3" r="1.6" fill="#17220f" opacity="0.8"/><circle cx="17.2" cy="42.8" r="1.0" fill="#17220f" opacity="0.8"/><circle cx="167.5" cy="93.2" r="1.4" fill="#55703f" opacity="0.8"/><circle cx="108.4" cy="36.3" r="1.1" fill="#17220f" opacity="0.8"/><circle cx="3.7" cy="79.5" r="1.2" fill="#3c5431" opacity="0.8"/><circle cx="76.4" cy="73.7" r="1.5" fill="#3c5431" opacity="0.8"/><circle cx="129.8" cy="76.9" r="1.6" fill="#55703f" opacity="0.8"/><circle cx="87.5" cy="27.1" r="1.5" fill="#17220f" opacity="0.8"/><circle cx="15.2" cy="8.1" r="1.7" fill="#17220f" opacity="0.8"/><circle cx="159.9" cy="45.7" r="1.7" fill="#17220f" opacity="0.8"/><circle cx="84.6" cy="39.5" r="0.8" fill="#3c5431" opacity="0.8"/><circle cx="60.8" cy="46.7" r="0.6" fill="#55703f" opacity="0.8"/><circle cx="3.4" cy="70.1" r="0.8" fill="#17220f" opacity="0.8"/><circle cx="84.8" cy="86.6" r="1.1" fill="#17220f" opacity="0.8"/><circle cx="64.6" cy="70.3" r="1.8" fill="#17220f" opacity="0.8"/><circle cx="96.5" cy="8.1" r="1.1" fill="#55703f" opacity="0.8"/><circle cx="108.6" cy="61.3" r="1.0" fill="#3c5431" opacity="0.8"/><circle cx="104.3" cy="53.8" r="1.7" fill="#3c5431" opacity="0.8"/><circle cx="56.8" cy="26.8" r="1.0" fill="#55703f" opacity="0.8"/><circle cx="72.1" cy="3.9" r="1.7" fill="#55703f" opacity="0.8"/><circle cx="146.9" cy="69.1" r="1.7" fill="#17220f" opacity="0.8"/><circle cx="146.2" cy="3.2" r="1.7" fill="#17220f" opacity="0.8"/><circle cx="24.6" cy="48.1" r="1.3" fill="#55703f" opacity="0.8"/><circle cx="87.2" cy="87.1" r="0.8" fill="#17220f" opacity="0.8"/><circle cx="50.7" cy="21.7" r="1.2" fill="#55703f" opacity="0.8"/><circle cx="142.2" cy="55.8" r="0.6" fill="#3c5431" opacity="0.8"/><circle cx="121.2" cy="69.6" r="0.5" fill="#17220f" opacity="0.8"/><circle cx="96.9" cy="57.2" r="1.7" fill="#55703f" opacity="0.8"/><circle cx="126.8" cy="43.8" r="1.5" fill="#3c5431" opacity="0.8"/><circle cx="29.8" cy="60.0" r="1.2" fill="#17220f" opacity="0.8"/><circle cx="24.0" cy="40.2" r="1.4" fill="#55703f" opacity="0.8"/><circle cx="8.3" cy="1.4" r="0.7" fill="#17220f" opacity="0.8"/><circle cx="68.6" cy="29.1" r="0.8" fill="#3c5431" opacity="0.8"/><circle cx="109.2" cy="36.7" r="1.1" fill="#3c5431" opacity="0.8"/><circle cx="65.9" cy="60.8" r="0.9" fill="#17220f" opacity="0.8"/><circle cx="11.0" cy="2.7" r="1.6" fill="#3c5431" opacity="0.8"/><circle cx="105.1" cy="32.9" r="1.2" fill="#3c5431" opacity="0.8"/><circle cx="46.3" cy="9.8" r="0.6" fill="#17220f" opacity="0.8"/><circle cx="120.7" cy="58.7" r="0.7" fill="#3c5431" opacity="0.8"/><circle cx="14.1" cy="53.7" r="1.8" fill="#3c5431" opacity="0.8"/><circle cx="97.3" cy="54.8" r="0.8" fill="#3c5431" opacity="0.8"/><circle cx="77.2" cy="23.6" r="1.1" fill="#3c5431" opacity="0.8"/><circle cx="59.7" cy="67.0" r="1.7" fill="#3c5431" opacity="0.8"/><circle cx="133.3" cy="90.8" r="1.6" fill="#3c5431" opacity="0.8"/><circle cx="161.0" cy="40.5" r="0.6" fill="#17220f" opacity="0.8"/><circle cx="170.7" cy="23.5" r="0.8" fill="#17220f" opacity="0.8"/><circle cx="33.5" cy="9.8" r="1.2" fill="#3c5431" opacity="0.8"/><circle cx="132.2" cy="84.3" r="1.0" fill="#17220f" opacity="0.8"/><circle cx="70.5" cy="51.6" r="1.0" fill="#55703f" opacity="0.8"/><circle cx="98.1" cy="32.0" r="1.6" fill="#3c5431" opacity="0.8"/><circle cx="87.8" cy="18.0" r="1.0" fill="#3c5431" opacity="0.8"/><circle cx="147.1" cy="76.8" r="0.5" fill="#17220f" opacity="0.8"/><circle cx="50.0" cy="33.2" r="0.8" fill="#55703f" opacity="0.8"/><circle cx="148.9" cy="15.6" r="0.7" fill="#17220f" opacity="0.8"/><circle cx="39.0" cy="10.1" r="0.6" fill="#55703f" opacity="0.8"/><circle cx="66.0" cy="60.8" r="1.7" fill="#7d9a5c" opacity="0.8"/><circle cx="128.3" cy="45.9" r="1.1" fill="#17220f" opacity="0.8"/><circle cx="58.9" cy="94.4" r="0.6" fill="#7d9a5c" opacity="0.8"/><circle cx="35.7" cy="73.7" r="1.0" fill="#7d9a5c" opacity="0.8"/><circle cx="66.0" cy="55.0" r="0.7" fill="#3c5431" opacity="0.8"/><circle cx="27.1" cy="67.6" r="1.3" fill="#17220f" opacity="0.8"/><circle cx="17.8" cy="87.0" r="1.3" fill="#17220f" opacity="0.8"/><circle cx="9.4" cy="26.8" r="1.7" fill="#17220f" opacity="0.8"/><circle cx="148.9" cy="80.8" r="0.6" fill="#3c5431" opacity="0.8"/><circle cx="33.3" cy="1.2" r="1.6" fill="#3c5431" opacity="0.8"/><circle cx="5.0" cy="15.6" r="0.9" fill="#55703f" opacity="0.8"/><circle cx="137.1" cy="35.7" r="1.0" fill="#17220f" opacity="0.8"/><circle cx="64.3" cy="29.2" r="1.2" fill="#17220f" opacity="0.8"/><circle cx="131.8" cy="7.4" r="1.8" fill="#3c5431" opacity="0.8"/><circle cx="87.8" cy="43.4" r="0.8" fill="#17220f" opacity="0.8"/><circle cx="11.6" cy="23.9" r="0.6" fill="#3c5431" opacity="0.8"/><circle cx="124.5" cy="3.1" r="1.5" fill="#17220f" opacity="0.8"/><circle cx="169.1" cy="45.4" r="1.0" fill="#17220f" opacity="0.8"/><circle cx="139.1" cy="28.4" r="1.2" fill="#17220f" opacity="0.8"/><circle cx="116.8" cy="11.2" r="0.7" fill="#17220f" opacity="0.8"/><circle cx="54.0" cy="67.8" r="1.0" fill="#17220f" opacity="0.8"/><circle cx="170.6" cy="64.9" r="1.5" fill="#3c5431" opacity="0.8"/><circle cx="30.5" cy="90.8" r="1.6" fill="#3c5431" opacity="0.8"/><circle cx="71.7" cy="45.8" r="1.7" fill="#17220f" opacity="0.8"/><circle cx="168.2" cy="68.4" r="1.1" fill="#17220f" opacity="0.8"/><circle cx="122.2" cy="77.4" r="1.2" fill="#17220f" opacity="0.8"/><circle cx="75.5" cy="63.2" r="1.7" fill="#3c5431" opacity="0.8"/><circle cx="99.6" cy="57.4" r="1.5" fill="#3c5431" opacity="0.8"/><circle cx="8.0" cy="6.6" r="0.9" fill="#3c5431" opacity="0.8"/><circle cx="104.4" cy="90.8" r="1.7" fill="#17220f" opacity="0.8"/><circle cx="144.8" cy="64.6" r="1.6" fill="#55703f" opacity="0.8"/><circle cx="90.1" cy="81.7" r="1.6" fill="#17220f" opacity="0.8"/><circle cx="162.0" cy="66.2" r="0.6" fill="#17220f" opacity="0.8"/><circle cx="59.1" cy="74.9" r="1.0" fill="#7d9a5c" opacity="0.8"/><circle cx="5.1" cy="62.4" r="1.2" fill="#3c5431" opacity="0.8"/><circle cx="98.2" cy="25.0" r="0.9" fill="#17220f" opacity="0.8"/><circle cx="69.7" cy="50.1" r="0.7" fill="#55703f" opacity="0.8"/><circle cx="105.8" cy="7.8" r="0.9" fill="#17220f" opacity="0.8"/><circle cx="112.0" cy="36.3" r="1.0" fill="#17220f" opacity="0.8"/><circle cx="23.9" cy="83.2" r="0.6" fill="#17220f" opacity="0.8"/><circle cx="103.4" cy="89.6" r="0.6" fill="#3c5431" opacity="0.8"/><circle cx="122.9" cy="66.8" r="1.5" fill="#3c5431" opacity="0.8"/><circle cx="160.3" cy="61.6" r="0.9" fill="#3c5431" opacity="0.8"/><circle cx="22.9" cy="41.2" r="0.7" fill="#17220f" opacity="0.8"/><circle cx="107.7" cy="82.4" r="0.9" fill="#17220f" opacity="0.8"/><circle cx="117.2" cy="61.9" r="1.3" fill="#3c5431" opacity="0.8"/><circle cx="6.4" cy="42.8" r="1.7" fill="#17220f" opacity="0.8"/><circle cx="157.8" cy="21.8" r="0.7" fill="#17220f" opacity="0.8"/><circle cx="83.6" cy="77.5" r="1.5" fill="#55703f" opacity="0.8"/><circle cx="105.8" cy="88.2" r="1.6" fill="#17220f" opacity="0.8"/><circle cx="23.2" cy="1.7" r="0.9" fill="#17220f" opacity="0.8"/><circle cx="92.5" cy="24.0" r="1.3" fill="#17220f" opacity="0.8"/><circle cx="41.8" cy="30.0" r="1.6" fill="#3c5431" opacity="0.8"/><circle cx="161.1" cy="69.7" r="1.7" fill="#3c5431" opacity="0.8"/><circle cx="37.2" cy="20.2" r="1.7" fill="#3c5431" opacity="0.8"/><circle cx="94.1" cy="75.9" r="1.5" fill="#17220f" opacity="0.8"/><circle cx="24.2" cy="7.2" r="1.0" fill="#17220f" opacity="0.8"/><circle cx="122.8" cy="40.2" r="1.5" fill="#3c5431" opacity="0.8"/><circle cx="54.0" cy="87.8" r="1.1" fill="#17220f" opacity="0.8"/><circle cx="67.9" cy="8.7" r="0.8" fill="#3c5431" opacity="0.8"/><circle cx="3.3" cy="86.2" r="1.7" fill="#3c5431" opacity="0.8"/><circle cx="116.1" cy="67.0" r="1.1" fill="#17220f" opacity="0.8"/><circle cx="147.9" cy="70.2" r="0.9" fill="#7d9a5c" opacity="0.8"/><circle cx="126.4" cy="6.3" r="0.7" fill="#55703f" opacity="0.8"/><circle cx="125.0" cy="33.0" r="0.8" fill="#3c5431" opacity="0.8"/><circle cx="51.6" cy="49.5" r="0.7" fill="#17220f" opacity="0.8"/><circle cx="8.4" cy="70.4" r="1.2" fill="#17220f" opacity="0.8"/><circle cx="66.7" cy="21.4" r="0.9" fill="#55703f" opacity="0.8"/><circle cx="61.4" cy="75.2" r="1.2" fill="#3c5431" opacity="0.8"/><circle cx="168.8" cy="50.2" r="1.8" fill="#17220f" opacity="0.8"/><circle cx="117.2" cy="68.9" r="0.5" fill="#3c5431" opacity="0.8"/><circle cx="70.9" cy="54.9" r="1.3" fill="#55703f" opacity="0.8"/><circle cx="8.0" cy="45.4" r="1.7" fill="#3c5431" opacity="0.8"/><circle cx="77.6" cy="36.3" r="0.9" fill="#17220f" opacity="0.8"/><circle cx="12.3" cy="96.5" r="0.7" fill="#55703f" opacity="0.8"/><circle cx="41.2" cy="55.6" r="0.9" fill="#3c5431" opacity="0.8"/><circle cx="169.8" cy="80.9" r="1.5" fill="#3c5431" opacity="0.8"/><circle cx="110.4" cy="58.0" r="0.9" fill="#55703f" opacity="0.8"/><circle cx="37.7" cy="42.4" r="0.7" fill="#3c5431" opacity="0.8"/><circle cx="13.3" cy="71.7" r="1.1" fill="#55703f" opacity="0.8"/><circle cx="124.2" cy="91.3" r="1.3" fill="#17220f" opacity="0.8"/><circle cx="126.5" cy="41.7" r="0.6" fill="#17220f" opacity="0.8"/><circle cx="70.4" cy="68.8" r="1.7" fill="#17220f" opacity="0.8"/><circle cx="165.0" cy="75.9" r="1.0" fill="#17220f" opacity="0.8"/><circle cx="158.5" cy="7.3" r="1.8" fill="#17220f" opacity="0.8"/><circle cx="146.2" cy="50.8" r="1.5" fill="#55703f" opacity="0.8"/><circle cx="102.7" cy="77.2" r="1.2" fill="#3c5431" opacity="0.8"/><circle cx="134.5" cy="38.0" r="1.1" fill="#17220f" opacity="0.8"/><circle cx="97.4" cy="79.6" r="1.3" fill="#17220f" opacity="0.8"/><circle cx="11.0" cy="51.3" r="1.2" fill="#17220f" opacity="0.8"/><circle cx="19.2" cy="7.0" r="0.9" fill="#17220f" opacity="0.8"/><circle cx="120.8" cy="59.0" r="0.6" fill="#17220f" opacity="0.8"/><circle cx="84.6" cy="62.5" r="1.0" fill="#17220f" opacity="0.8"/><circle cx="4.2" cy="7.5" r="1.4" fill="#55703f" opacity="0.8"/><circle cx="126.8" cy="51.3" r="1.5" fill="#17220f" opacity="0.8"/><circle cx="136.9" cy="5.7" r="1.3" fill="#3c5431" opacity="0.8"/><circle cx="69.1" cy="68.9" r="1.5" fill="#3c5431" opacity="0.8"/><circle cx="101.3" cy="5.6" r="0.6" fill="#17220f" opacity="0.8"/><path d="M32 0 Q36 12 38 30 M56 2 Q48 20 44 48 M30 22 Q40 18 55 20 M10 12 Q20 25 24 50 M80 0 Q76 10 70 28 M100 0 Q96 14 92 26" stroke="#1a2414" stroke-width="1.4" fill="none" opacity="0.85"/><circle cx="17.2" cy="20.7" r="0.7" fill="#e9ede6" opacity="0.92"/><circle cx="20.0" cy="20.3" r="0.6" fill="#e9ede6" opacity="0.92"/><circle cx="10.6" cy="18.8" r="1.1" fill="#e9ede6" opacity="0.92"/><circle cx="20.0" cy="18.2" r="1.0" fill="#e9ede6" opacity="0.92"/><circle cx="28.4" cy="17.4" r="0.5" fill="#e9ede6" opacity="0.92"/><circle cx="18.9" cy="21.5" r="0.7" fill="#e9ede6" opacity="0.92"/><circle cx="21.6" cy="21.2" r="0.6" fill="#e9ede6" opacity="0.92"/><circle cx="14.5" cy="26.4" r="1.3" fill="#e9ede6" opacity="0.92"/><circle cx="21.4" cy="11.9" r="0.7" fill="#e9ede6" opacity="0.92"/><circle cx="16.8" cy="18.0" r="0.8" fill="#e9ede6" opacity="0.92"/><circle cx="26.4" cy="20.4" r="0.8" fill="#e9ede6" opacity="0.92"/><circle cx="21.4" cy="23.1" r="0.8" fill="#e9ede6" opacity="0.92"/><circle cx="23.4" cy="28.4" r="1.1" fill="#e9ede6" opacity="0.92"/><circle cx="21.2" cy="20.7" r="1.3" fill="#e9ede6" opacity="0.92"/><circle cx="22.6" cy="18.9" r="1.0" fill="#e9ede6" opacity="0.92"/><circle cx="18.7" cy="20.9" r="1.1" fill="#e9ede6" opacity="0.92"/><circle cx="18.3" cy="23.8" r="1.1" fill="#e9ede6" opacity="0.92"/><circle cx="16.2" cy="17.2" r="0.6" fill="#e9ede6" opacity="0.92"/><circle cx="21.2" cy="18.7" r="0.6" fill="#e9ede6" opacity="0.92"/><circle cx="11.9" cy="23.4" r="1.0" fill="#e9ede6" opacity="0.92"/><circle cx="19.1" cy="20.3" r="0.7" fill="#e9ede6" opacity="0.92"/><circle cx="11.3" cy="11.3" r="1.4" fill="#e9ede6" opacity="0.92"/><circle cx="29.2" cy="14.7" r="0.7" fill="#e9ede6" opacity="0.92"/><circle cx="25.6" cy="21.1" r="0.5" fill="#e9ede6" opacity="0.92"/><circle cx="12.3" cy="18.5" r="0.7" fill="#e9ede6" opacity="0.92"/><circle cx="20.5" cy="21.5" r="1.0" fill="#e9ede6" opacity="0.92"/><circle cx="17.4" cy="17.2" r="1.2" fill="#e9ede6" opacity="0.92"/><circle cx="15.5" cy="19.0" r="0.5" fill="#e9ede6" opacity="0.92"/><circle cx="16.3" cy="19.9" r="0.6" fill="#e9ede6" opacity="0.92"/><circle cx="25.5" cy="14.0" r="0.7" fill="#e9ede6" opacity="0.92"/><circle cx="22.2" cy="24.7" r="1.0" fill="#e9ede6" opacity="0.92"/><circle cx="28.3" cy="14.7" r="1.1" fill="#e9ede6" opacity="0.92"/><circle cx="17.4" cy="22.7" r="1.0" fill="#e9ede6" opacity="0.92"/><circle cx="22.0" cy="16.6" r="0.9" fill="#e9ede6" opacity="0.92"/><circle cx="15.3" cy="23.7" r="0.8" fill="#e9ede6" opacity="0.92"/><circle cx="19.3" cy="19.5" r="1.3" fill="#e9ede6" opacity="0.92"/><circle cx="25.8" cy="26.8" r="0.6" fill="#e9ede6" opacity="0.92"/><circle cx="23.8" cy="19.3" r="0.8" fill="#e9ede6" opacity="0.92"/><circle cx="28.6" cy="14.2" r="0.6" fill="#e9ede6" opacity="0.92"/><circle cx="17.1" cy="20.1" r="1.0" fill="#e9ede6" opacity="0.92"/><circle cx="30.8" cy="14.3" r="0.9" fill="#e9ede6" opacity="0.92"/><circle cx="33.8" cy="5.2" r="1.1" fill="#e9ede6" opacity="0.92"/><circle cx="29.7" cy="9.9" r="0.9" fill="#e9ede6" opacity="0.92"/><circle cx="27.4" cy="12.1" r="0.6" fill="#e9ede6" opacity="0.92"/><circle cx="34.8" cy="12.3" r="1.0" fill="#e9ede6" opacity="0.92"/><circle cx="25.3" cy="14.0" r="1.2" fill="#e9ede6" opacity="0.92"/><circle cx="29.7" cy="16.3" r="1.2" fill="#e9ede6" opacity="0.92"/><circle cx="30.7" cy="17.5" r="0.6" fill="#e9ede6" opacity="0.92"/><circle cx="30.0" cy="14.4" r="1.0" fill="#e9ede6" opacity="0.92"/><circle cx="27.4" cy="14.6" r="1.2" fill="#e9ede6" opacity="0.92"/><circle cx="33.3" cy="15.5" r="0.5" fill="#e9ede6" opacity="0.92"/><circle cx="37.3" cy="14.2" r="0.7" fill="#e9ede6" opacity="0.92"/><circle cx="31.0" cy="4.2" r="1.1" fill="#e9ede6" opacity="0.92"/><circle cx="35.0" cy="5.0" r="1.2" fill="#e9ede6" opacity="0.92"/><circle cx="33.1" cy="7.8" r="1.3" fill="#e9ede6" opacity="0.92"/><circle cx="27.5" cy="16.3" r="1.1" fill="#e9ede6" opacity="0.92"/><circle cx="30.8" cy="10.8" r="0.8" fill="#e9ede6" opacity="0.92"/><circle cx="35.4" cy="9.4" r="1.2" fill="#e9ede6" opacity="0.92"/><circle cx="23.0" cy="13.3" r="0.8" fill="#e9ede6" opacity="0.92"/><circle cx="31.0" cy="13.3" r="1.0" fill="#e9ede6" opacity="0.92"/><circle cx="38.9" cy="13.2" r="0.6" fill="#e9ede6" opacity="0.92"/><circle cx="33.1" cy="15.9" r="0.5" fill="#e9ede6" opacity="0.92"/><circle cx="28.2" cy="9.2" r="1.1" fill="#e9ede6" opacity="0.92"/><circle cx="31.1" cy="9.4" r="1.2" fill="#e9ede6" opacity="0.92"/><circle cx="22.7" cy="11.8" r="0.7" fill="#e9ede6" opacity="0.92"/><circle cx="20.7" cy="11.1" r="1.0" fill="#e9ede6" opacity="0.92"/><circle cx="27.6" cy="11.9" r="0.8" fill="#e9ede6" opacity="0.92"/><circle cx="32.1" cy="14.5" r="1.0" fill="#e9ede6" opacity="0.92"/><circle cx="30.3" cy="12.5" r="1.0" fill="#e9ede6" opacity="0.92"/><circle cx="26.5" cy="11.1" r="0.6" fill="#e9ede6" opacity="0.92"/><circle cx="47.4" cy="6.4" r="1.3" fill="#e9ede6" opacity="0.92"/><circle cx="46.3" cy="5.8" r="0.6" fill="#e9ede6" opacity="0.92"/><circle cx="49.3" cy="6.3" r="1.0" fill="#e9ede6" opacity="0.92"/><circle cx="48.0" cy="0.1" r="0.7" fill="#e9ede6" opacity="0.92"/><circle cx="39.0" cy="6.7" r="0.9" fill="#e9ede6" opacity="0.92"/><circle cx="44.2" cy="4.8" r="0.5" fill="#e9ede6" opacity="0.92"/><circle cx="43.6" cy="6.5" r="0.9" fill="#e9ede6" opacity="0.92"/><circle cx="45.1" cy="8.9" r="0.7" fill="#e9ede6" opacity="0.92"/><circle cx="49.0" cy="10.1" r="1.3" fill="#e9ede6" opacity="0.92"/><circle cx="41.7" cy="4.4" r="0.9" fill="#e9ede6" opacity="0.92"/><circle cx="47.5" cy="2.5" r="0.8" fill="#e9ede6" opacity="0.92"/><circle cx="48.1" cy="4.9" r="0.6" fill="#e9ede6" opacity="0.92"/><circle cx="49.2" cy="5.0" r="1.1" fill="#e9ede6" opacity="0.92"/><circle cx="42.7" cy="14.6" r="0.6" fill="#e9ede6" opacity="0.92"/><circle cx="55.4" cy="3.8" r="0.8" fill="#e9ede6" opacity="0.92"/><circle cx="46.6" cy="4.9" r="0.8" fill="#e9ede6" opacity="0.92"/><circle cx="39.5" cy="5.4" r="1.0" fill="#e9ede6" opacity="0.92"/><circle cx="49.6" cy="6.7" r="0.8" fill="#e9ede6" opacity="0.92"/><circle cx="46.2" cy="1.8" r="1.4" fill="#e9ede6" opacity="0.92"/><circle cx="49.8" cy="3.9" r="0.9" fill="#e9ede6" opacity="0.92"/><circle cx="42.6" cy="6.5" r="1.2" fill="#e9ede6" opacity="0.92"/><circle cx="39.6" cy="3.2" r="0.8" fill="#e9ede6" opacity="0.92"/><circle cx="38.9" cy="5.8" r="0.9" fill="#e9ede6" opacity="0.92"/><circle cx="45.4" cy="8.4" r="1.0" fill="#e9ede6" opacity="0.92"/><circle cx="43.7" cy="3.5" r="0.6" fill="#e9ede6" opacity="0.92"/><circle cx="37.6" cy="6.0" r="0.7" fill="#e9ede6" opacity="0.92"/><circle cx="46.7" cy="3.0" r="1.1" fill="#e9ede6" opacity="0.92"/><circle cx="45.0" cy="5.2" r="1.4" fill="#e9ede6" opacity="0.92"/><circle cx="47.6" cy="2.7" r="1.3" fill="#e9ede6" opacity="0.92"/><circle cx="49.4" cy="6.5" r="1.0" fill="#e9ede6" opacity="0.92"/><circle cx="52.2" cy="22.3" r="0.9" fill="#e9ede6" opacity="0.92"/><circle cx="48.5" cy="21.0" r="0.9" fill="#e9ede6" opacity="0.92"/><circle cx="54.4" cy="23.4" r="1.1" fill="#e9ede6" opacity="0.92"/><circle cx="49.3" cy="20.7" r="1.2" fill="#e9ede6" opacity="0.92"/><circle cx="52.7" cy="22.1" r="0.8" fill="#e9ede6" opacity="0.92"/><circle cx="56.6" cy="22.1" r="1.4" fill="#e9ede6" opacity="0.92"/><circle cx="52.0" cy="21.1" r="1.0" fill="#e9ede6" opacity="0.92"/><circle cx="54.8" cy="17.5" r="1.3" fill="#e9ede6" opacity="0.92"/><circle cx="53.9" cy="25.8" r="1.0" fill="#e9ede6" opacity="0.92"/><circle cx="57.0" cy="25.7" r="0.6" fill="#e9ede6" opacity="0.92"/><circle cx="48.3" cy="22.3" r="0.8" fill="#e9ede6" opacity="0.92"/><circle cx="55.4" cy="24.0" r="0.5" fill="#e9ede6" opacity="0.92"/><circle cx="54.3" cy="21.6" r="0.7" fill="#e9ede6" opacity="0.92"/><circle cx="47.7" cy="21.5" r="1.3" fill="#e9ede6" opacity="0.92"/><circle cx="52.9" cy="28.4" r="1.2" fill="#e9ede6" opacity="0.92"/><circle cx="50.0" cy="26.3" r="1.4" fill="#e9ede6" opacity="0.92"/><circle cx="58.1" cy="20.4" r="0.9" fill="#e9ede6" opacity="0.92"/><circle cx="55.0" cy="22.4" r="0.7" fill="#e9ede6" opacity="0.92"/><circle cx="53.5" cy="20.0" r="1.2" fill="#e9ede6" opacity="0.92"/><circle cx="51.8" cy="18.8" r="1.1" fill="#e9ede6" opacity="0.92"/><circle cx="54.5" cy="18.5" r="1.0" fill="#e9ede6" opacity="0.92"/><circle cx="54.9" cy="18.0" r="1.0" fill="#e9ede6" opacity="0.92"/><circle cx="56.2" cy="17.3" r="0.8" fill="#e9ede6" opacity="0.92"/><circle cx="55.8" cy="21.1" r="1.1" fill="#e9ede6" opacity="0.92"/><circle cx="42.7" cy="23.7" r="0.6" fill="#e9ede6" opacity="0.92"/><circle cx="53.2" cy="20.6" r="1.4" fill="#e9ede6" opacity="0.92"/><circle cx="52.1" cy="21.9" r="0.8" fill="#e9ede6" opacity="0.92"/><circle cx="57.0" cy="23.2" r="1.1" fill="#e9ede6" opacity="0.92"/><circle cx="55.6" cy="24.1" r="0.9" fill="#e9ede6" opacity="0.92"/><circle cx="53.7" cy="24.8" r="1.4" fill="#e9ede6" opacity="0.92"/><circle cx="6.2" cy="22.9" r="1.1" fill="#e9ede6" opacity="0.92"/><circle cx="4.4" cy="24.3" r="0.5" fill="#e9ede6" opacity="0.92"/><circle cx="5.3" cy="19.0" r="1.0" fill="#e9ede6" opacity="0.92"/><circle cx="10.7" cy="19.9" r="1.3" fill="#e9ede6" opacity="0.92"/><circle cx="11.2" cy="21.9" r="0.6" fill="#e9ede6" opacity="0.92"/><circle cx="6.0" cy="17.3" r="1.4" fill="#e9ede6" opacity="0.92"/><circle cx="5.5" cy="26.5" r="1.3" fill="#e9ede6" opacity="0.92"/><circle cx="3.6" cy="20.1" r="0.9" fill="#e9ede6" opacity="0.92"/><circle cx="4.7" cy="23.5" r="1.2" fill="#e9ede6" opacity="0.92"/><circle cx="4.7" cy="20.5" r="1.1" fill="#e9ede6" opacity="0.92"/><circle cx="5.9" cy="20.7" r="0.7" fill="#e9ede6" opacity="0.92"/><circle cx="6.8" cy="21.1" r="0.7" fill="#e9ede6" opacity="0.92"/><circle cx="6.3" cy="20.6" r="1.1" fill="#e9ede6" opacity="0.92"/><circle cx="8.6" cy="20.9" r="0.9" fill="#e9ede6" opacity="0.92"/><circle cx="7.2" cy="26.6" r="1.2" fill="#e9ede6" opacity="0.92"/><circle cx="64.0" cy="6.6" r="1.3" fill="#e9ede6" opacity="0.92"/><circle cx="63.5" cy="4.9" r="1.0" fill="#e9ede6" opacity="0.92"/><circle cx="68.1" cy="0.2" r="0.6" fill="#e9ede6" opacity="0.92"/><circle cx="60.1" cy="4.4" r="1.1" fill="#e9ede6" opacity="0.92"/><circle cx="70.5" cy="3.4" r="0.9" fill="#e9ede6" opacity="0.92"/><circle cx="67.0" cy="6.5" r="1.1" fill="#e9ede6" opacity="0.92"/><circle cx="63.8" cy="6.3" r="0.5" fill="#e9ede6" opacity="0.92"/><circle cx="66.6" cy="3.1" r="1.0" fill="#e9ede6" opacity="0.92"/><circle cx="65.7" cy="7.5" r="0.6" fill="#e9ede6" opacity="0.92"/><circle cx="68.7" cy="6.3" r="1.0" fill="#e9ede6" opacity="0.92"/><circle cx="69.8" cy="5.8" r="1.2" fill="#e9ede6" opacity="0.92"/><circle cx="65.0" cy="1.2" r="0.6" fill="#e9ede6" opacity="0.92"/><circle cx="62.9" cy="3.7" r="0.9" fill="#e9ede6" opacity="0.92"/><circle cx="67.0" cy="4.3" r="1.0" fill="#e9ede6" opacity="0.92"/><circle cx="62.2" cy="3.5" r="0.7" fill="#e9ede6" opacity="0.92"/><circle cx="66.0" cy="4.8" r="1.2" fill="#e9ede6" opacity="0.92"/><circle cx="65.7" cy="5.9" r="1.2" fill="#e9ede6" opacity="0.92"/><circle cx="68.4" cy="6.0" r="1.3" fill="#e9ede6" opacity="0.92"/><circle cx="66.7" cy="3.3" r="0.8" fill="#e9ede6" opacity="0.92"/><circle cx="65.3" cy="7.5" r="1.3" fill="#e9ede6" opacity="0.92"/><circle cx="34.0" cy="27.0" r="0.6" fill="#e9ede6" opacity="0.92"/><circle cx="39.3" cy="30.2" r="1.0" fill="#e9ede6" opacity="0.92"/><circle cx="36.4" cy="27.7" r="1.4" fill="#e9ede6" opacity="0.92"/><circle cx="39.1" cy="25.6" r="1.2" fill="#e9ede6" opacity="0.92"/><circle cx="37.6" cy="25.4" r="0.8" fill="#e9ede6" opacity="0.92"/><circle cx="35.8" cy="25.5" r="0.8" fill="#e9ede6" opacity="0.92"/><circle cx="40.9" cy="28.6" r="0.8" fill="#e9ede6" opacity="0.92"/><circle cx="40.9" cy="24.3" r="0.5" fill="#e9ede6" opacity="0.92"/><circle cx="40.3" cy="27.4" r="1.3" fill="#e9ede6" opacity="0.92"/><circle cx="40.9" cy="29.2" r="1.3" fill="#e9ede6" opacity="0.92"/><circle cx="38.8" cy="28.2" r="1.4" fill="#e9ede6" opacity="0.92"/><circle cx="35.8" cy="30.2" r="1.1" fill="#e9ede6" opacity="0.92"/><circle cx="108.0" cy="3.8" r="0.7" fill="#e9ede6" opacity="0.92"/><circle cx="109.9" cy="1.9" r="0.7" fill="#e9ede6" opacity="0.92"/><circle cx="111.7" cy="1.1" r="1.0" fill="#e9ede6" opacity="0.92"/><circle cx="107.5" cy="4.8" r="1.0" fill="#e9ede6" opacity="0.92"/><circle cx="108.9" cy="1.2" r="1.0" fill="#e9ede6" opacity="0.92"/><circle cx="103.1" cy="2.2" r="0.8" fill="#e9ede6" opacity="0.92"/><circle cx="107.7" cy="1.1" r="1.3" fill="#e9ede6" opacity="0.92"/><circle cx="109.6" cy="0.5" r="0.7" fill="#e9ede6" opacity="0.92"/><circle cx="102.7" cy="3.7" r="1.1" fill="#e9ede6" opacity="0.92"/><circle cx="103.8" cy="0.6" r="1.0" fill="#e9ede6" opacity="0.92"/><circle cx="107.7" cy="3.1" r="0.7" fill="#e9ede6" opacity="0.92"/><circle cx="101.7" cy="1.4" r="1.3" fill="#e9ede6" opacity="0.92"/><circle cx="103.7" cy="1.6" r="0.8" fill="#e9ede6" opacity="0.92"/><circle cx="109.2" cy="0.6" r="1.1" fill="#e9ede6" opacity="0.92"/><circle cx="106.6" cy="4.0" r="1.0" fill="#e9ede6" opacity="0.92"/><circle cx="108.0" cy="3.2" r="1.0" fill="#e9ede6" opacity="0.92"/><circle cx="105.1" cy="1.8" r="1.3" fill="#e9ede6" opacity="0.92"/><circle cx="112.7" cy="2.9" r="0.8" fill="#e9ede6" opacity="0.92"/><circle cx="110.8" cy="1.0" r="0.8" fill="#e9ede6" opacity="0.92"/><circle cx="107.7" cy="9.0" r="0.7" fill="#e9ede6" opacity="0.92"/><circle cx="103.5" cy="6.6" r="0.5" fill="#e9ede6" opacity="0.92"/><circle cx="112.3" cy="0.8" r="1.0" fill="#e9ede6" opacity="0.92"/><circle cx="105.9" cy="4.0" r="1.4" fill="#e9ede6" opacity="0.92"/><circle cx="108.5" cy="6.7" r="0.8" fill="#e9ede6" opacity="0.92"/><circle cx="110.0" cy="6.2" r="1.1" fill="#e9ede6" opacity="0.92"/><circle cx="127.0" cy="9.7" r="1.0" fill="#e9ede6" opacity="0.92"/><circle cx="127.7" cy="11.3" r="0.8" fill="#e9ede6" opacity="0.92"/><circle cx="129.6" cy="11.0" r="0.7" fill="#e9ede6" opacity="0.92"/><circle cx="130.0" cy="7.3" r="1.0" fill="#e9ede6" opacity="0.92"/><circle cx="127.9" cy="8.3" r="1.2" fill="#e9ede6" opacity="0.92"/><circle cx="124.2" cy="10.1" r="0.8" fill="#e9ede6" opacity="0.92"/><circle cx="126.8" cy="8.0" r="1.1" fill="#e9ede6" opacity="0.92"/><circle cx="129.0" cy="7.2" r="1.3" fill="#e9ede6" opacity="0.92"/><circle cx="122.7" cy="7.2" r="0.8" fill="#e9ede6" opacity="0.92"/><circle cx="127.4" cy="7.6" r="1.2" fill="#e9ede6" opacity="0.92"/><circle cx="123.6" cy="6.0" r="1.3" fill="#e9ede6" opacity="0.92"/><circle cx="124.1" cy="8.9" r="0.7" fill="#e9ede6" opacity="0.92"/><circle cx="123.1" cy="6.1" r="0.7" fill="#e9ede6" opacity="0.92"/><circle cx="124.2" cy="11.7" r="1.0" fill="#e9ede6" opacity="0.92"/><circle cx="129.1" cy="10.0" r="0.6" fill="#e9ede6" opacity="0.92"/><circle cx="85.8" cy="1.6" r="0.9" fill="#e9ede6" opacity="0.92"/><circle cx="84.5" cy="1.6" r="0.8" fill="#e9ede6" opacity="0.92"/><circle cx="88.5" cy="5.6" r="1.4" fill="#e9ede6" opacity="0.92"/><circle cx="90.5" cy="1.0" r="1.0" fill="#e9ede6" opacity="0.92"/><circle cx="92.4" cy="1.8" r="0.7" fill="#e9ede6" opacity="0.92"/><circle cx="89.3" cy="3.0" r="0.9" fill="#e9ede6" opacity="0.92"/><circle cx="84.3" cy="0.8" r="0.9" fill="#e9ede6" opacity="0.92"/><circle cx="85.5" cy="2.0" r="1.3" fill="#e9ede6" opacity="0.92"/><circle cx="87.2" cy="3.0" r="1.2" fill="#e9ede6" opacity="0.92"/><circle cx="87.8" cy="3.8" r="1.4" fill="#e9ede6" opacity="0.92"/><circle cx="83.5" cy="1.1" r="0.6" fill="#e9ede6" opacity="0.92"/><circle cx="85.7" cy="2.2" r="1.1" fill="#e9ede6" opacity="0.92"/><circle cx="149.7" cy="22.1" r="1.3" fill="#e9ede6" opacity="0.92"/><circle cx="150.2" cy="22.8" r="1.4" fill="#e9ede6" opacity="0.92"/><circle cx="150.4" cy="19.0" r="1.1" fill="#e9ede6" opacity="0.92"/><circle cx="150.8" cy="18.2" r="0.5" fill="#e9ede6" opacity="0.92"/><circle cx="152.0" cy="17.8" r="0.9" fill="#e9ede6" opacity="0.92"/><circle cx="149.9" cy="21.7" r="1.3" fill="#e9ede6" opacity="0.92"/><rect x="0" y="84" width="172" height="13" fill="#50452e" opacity="0.22"/><rect x="140" y="0" width="25" height="8" fill="#f2f2f2"/><path d="M141 8 L144 0 L146.5 0 L143.5 8 Z" fill="#333"/><path d="M146 8 L149 0 L151.5 0 L148.5 8 Z" fill="#333"/><path d="M151 8 L154 0 L156.5 0 L153.5 8 Z" fill="#333"/><path d="M156 8 L159 0 L161.5 0 L158.5 8 Z" fill="#333"/><path d="M161 8 L164 0 L166.5 0 L163.5 8 Z" fill="#333"/></svg>
<div class="a t" style="left:466px;top:191px;font-size:16.3px;line-height:22px;color:#9b9aa3;font-weight:bold;">video-miao</div>
<div class="a" style="left:680px;top:190px;width:1px;height:25px;background:#dedbe6"></div>
<div class="a t" style="left:703px;top:192px;font-size:16.3px;line-height:22px;color:#111;font-weight:bold;">video-miao</div>
<svg class="a" style="left:802px;top:192px" width="18" height="18" viewBox="0 0 18 18"><path d="M9.5 2.8 H3 V15.2 H15.2 V9" fill="none" stroke="#222" stroke-width="1.5"/><path d="M8.5 9.5 L15.2 2.8" stroke="#222" stroke-width="1.5"/></svg>
<svg class="a" style="left:830px;top:192px" width="18" height="18" viewBox="0 0 18 18"><circle cx="9" cy="9" r="7.5" fill="none" stroke="#222" stroke-width="1.5"/><path d="M9 7.8 V13" stroke="#222" stroke-width="1.6"/><circle cx="9" cy="5.2" r="1" fill="#222"/></svg>
<svg class="a" style="left:1213px;top:192px" width="18" height="18" viewBox="0 0 18 18"><path d="M6.6 2.2 H11.4 M2.6 5 H15.4 M4.7 5 L5.5 15.6 H12.5 L13.3 5" fill="none" stroke="#f8233f" stroke-width="1.6" stroke-linejoin="round" stroke-linecap="round"/></svg>
<div class="a" style="left:1126px;top:231px;width:104px;height:32px;border-radius:8px;background:#7a38fd"></div>
<div class="a t" style="left:1126px;top:238px;font-size:14px;line-height:18px;color:#fff;font-weight:bold;width:104px;text-align:center">转换</div>
<div class="a" style="left:240px;top:687px;width:1030px;height:1px;background:#ececec"></div>
<div class="a t" style="left:264px;top:714px;font-size:14px;line-height:18px;color:#6b6b70;">转换成</div>
<div class="a" style="left:314px;top:708px;width:139px;height:31px;border-radius:7px;border:1px solid #e6e6ea;border-left:1.2px solid #7a3ff5;background:#fff"></div>
<div class="a t" style="left:326px;top:714px;font-size:14px;line-height:18px;color:#111;">MP4</div>
<svg class="a" style="left:426px;top:718px" width="10" height="8" viewBox="0 0 10 8"><path d="M1 6.5 L5 1.5 L9 6.5 Z" fill="#8c8c92"/></svg>
<svg class="a" style="left:464px;top:713px" width="20" height="20" viewBox="0 0 20 20"><path d="M10 2.2 L16.8 6.1 V13.9 L10 17.8 L3.2 13.9 V6.1 Z" fill="none" stroke="#444" stroke-width="1.6" stroke-linejoin="round"/><circle cx="10" cy="10" r="2.6" fill="none" stroke="#444" stroke-width="1.6"/></svg>
<div class="a t" style="left:518px;top:714px;font-size:14px;line-height:18px;color:#6b6b70;">保存到</div>
<div class="a" style="left:568px;top:707px;width:140px;height:32px;border-radius:8px;border:1px solid #e8e8ec;background:#fff"></div>
<div class="a t" style="left:580px;top:715px;font-size:14.4px;line-height:18px;color:#111;">Converted</div>
<svg class="a" style="left:681px;top:719px" width="10" height="8" viewBox="0 0 10 8"><path d="M1 1.5 L5 6.5 L9 1.5 Z" fill="#8c8c92"/></svg>
<svg class="a" style="left:718px;top:713px" width="20" height="20" viewBox="0 0 20 20"><path d="M2.5 15 V5 Q2.5 2.8 4.7 2.8 H7.6 Q8.6 2.8 9.3 3.6 L10.6 5.2 H15.3 Q17.5 5.2 17.5 7.4 V15 Q17.5 17.2 15.3 17.2 H4.7 Q2.5 17.2 2.5 15 Z M2.5 6.3 H10.2" fill="none" stroke="#3a3a3a" stroke-width="1.6" stroke-linejoin="round"/></svg>
<div class="a t" style="left:772px;top:715px;font-size:13.8px;line-height:18px;color:#6b6b70;">合并所有文件</div>
<div class="a" style="left:864px;top:715px;width:28px;height:16px;border-radius:8px;background:#dfdfe8"></div>
<div class="a" style="left:865px;top:717px;width:13px;height:13px;border-radius:50%;background:#fff"></div>
<div class="a" style="left:1046px;top:699px;width:200px;height:40px;border-radius:8px;background:#7a38fd"></div>
<svg class="a" style="left:1089px;top:709px" width="20" height="20" viewBox="0 0 20 20"><circle cx="13.8" cy="5.8" r="3.4" fill="none" stroke="#fff" stroke-width="1.6"/><rect x="2.8" y="10.4" width="6.6" height="6.4" rx="1.3" fill="none" stroke="#fff" stroke-width="1.6"/><path d="M8 2.4 Q4.2 2.4 3.6 5.6" fill="none" stroke="#fff" stroke-width="1.6" stroke-linecap="round"/><path d="M1.8 4.9 L3.6 7.8 L5.6 5.3 Z" fill="#fff"/><path d="M11.4 16.6 Q15.6 16.8 16.5 13.2" fill="none" stroke="#fff" stroke-width="1.6" stroke-linecap="round"/><path d="M14.6 14 L16.6 11 L18.3 14 Z" fill="#fff"/></svg>
<div class="a t" style="left:1116px;top:711px;font-size:13.8px;line-height:18px;color:#fff;font-weight:bold;">转换所有文件</div>
<div class="a" style="left:340px;top:205px;width:724px;height:502px;background:#fff;box-shadow:0 3px 16px rgba(0,0,0,0.13)"></div>
<div class="a" style="left:345px;top:234px;width:713px;height:1px;background:#ececf0"></div>
<div class="a t" style="left:361px;top:212px;font-size:12px;line-height:16px;color:#8d8d93;">最近</div>
<div class="a t" style="left:407px;top:212px;font-size:12px;line-height:16px;color:#8d8d93;">视频</div>
<div class="a t" style="left:453px;top:212px;font-size:12px;line-height:16px;color:#8d8d93;">音频</div>
<div class="a t" style="left:499px;top:212px;font-size:12px;line-height:16px;color:#111;font-weight:bold;">图片</div>
<div class="a t" style="left:545px;top:212px;font-size:12px;line-height:16px;color:#8d8d93;">设备</div>
<div class="a t" style="left:591px;top:212px;font-size:12px;line-height:16px;color:#8d8d93;">编辑</div>
<div class="a t" style="left:637px;top:212px;font-size:12px;line-height:16px;color:#8d8d93;">网络视频</div>
<div class="a t" style="left:707px;top:212px;font-size:12px;line-height:16px;color:#8d8d93;">自定义</div>
<svg class="a" style="left:497px;top:222px" width="28" height="10" viewBox="0 0 28 10"><path d="M3.5 3 Q14 10.5 24.5 3" fill="none" stroke="#7a3ff5" stroke-width="2.8" stroke-linecap="round"/></svg>
<div class="a" style="left:906px;top:210px;width:140px;height:23px;border-radius:7px;background:#ebeaef"></div>
<svg class="a" style="left:919px;top:214px" width="14" height="14" viewBox="0 0 14 14"><circle cx="6" cy="6" r="4.6" fill="none" stroke="#222" stroke-width="1.4"/><path d="M9.4 9.4 L12.8 12.8" stroke="#222" stroke-width="1.5" stroke-linecap="round"/></svg>
<div class="a t" style="left:940px;top:213px;font-size:13px;line-height:16px;color:#8d8d93;">搜索</div>
<div class="a" style="left:345px;top:282px;width:197px;height:1px;background:#ececf0"></div>
<svg class="a" style="left:360px;top:249px" width="20" height="20" viewBox="0 0 20 20"><defs><linearGradient id="gJPEG" x1="0" y1="0" x2="0" y2="1"><stop offset="0" stop-color="#2f6bf5"/><stop offset="1" stop-color="#12b6fb"/></linearGradient></defs><path d="M4 0 H16 Q20 0 20 4 V13 H0 V4 Q0 0 4 0 Z" fill="url(#gJPEG)"/><path d="M0 13 H20 V16 Q20 20 16 20 H4 Q0 20 0 16 Z" fill="#d5f0fe"/><circle cx="5.8" cy="3.4" r="1.4" fill="#fff"/><path d="M4.5 11 L9 5.3 L11 7.6 L12.6 5.8 L16 11 Z" fill="#fff"/><text x="10" y="18.8" font-size="5.6" font-weight="bold" text-anchor="middle" fill="#1f4fd8" font-family="Liberation Sans" textLength="15" lengthAdjust="spacingAndGlyphs">JPEG</text></svg>
<div class="a t" style="left:390px;top:251px;font-size:12px;line-height:16px;color:#111;">JPEG</div>
<div class="a" style="left:345px;top:330px;width:197px;height:1px;background:#ececf0"></div>
<svg class="a" style="left:360px;top:297px" width="20" height="20" viewBox="0 0 20 20"><defs><linearGradient id="gPNG" x1="0" y1="0" x2="0" y2="1"><stop offset="0" stop-color="#3b4cf0"/><stop offset="1" stop-color="#5f8cf8"/></linearGradient></defs><path d="M4 0 H16 Q20 0 20 4 V13 H0 V4 Q0 0 4 0 Z" fill="url(#gPNG)"/><path d="M0 13 H20 V16 Q20 20 16 20 H4 Q0 20 0 16 Z" fill="#dfe6fd"/><circle cx="5.8" cy="3.4" r="1.4" fill="#fff"/><path d="M4.5 11 L9 5.3 L11 7.6 L12.6 5.8 L16 11 Z" fill="#fff"/><text x="10" y="18.8" font-size="5.6" font-weight="bold" text-anchor="middle" fill="#3b4cf0" font-family="Liberation Sans" textLength="12.5" lengthAdjust="spacingAndGlyphs">PNG</text></svg>
<div class="a t" style="left:390px;top:299px;font-size:12px;line-height:16px;color:#111;">PNG</div>
<div class="a" style="left:345px;top:378px;width:197px;height:1px;background:#ececf0"></div>
<svg class="a" style="left:360px;top:345px" width="20" height="20" viewBox="0 0 20 20"><defs><linearGradient id="gWEBP" x1="0" y1="0" x2="0" y2="1"><stop offset="0" stop-color="#1e82f5"/><stop offset="1" stop-color="#12b0fb"/></linearGradient></defs><path d="M4 0 H16 Q20 0 20 4 V13 H0 V4 Q0 0 4 0 Z" fill="url(#gWEBP)"/><path d="M0 13 H20 V16 Q20 20 16 20 H4 Q0 20 0 16 Z" fill="#d5eefe"/><circle cx="5.8" cy="3.4" r="1.4" fill="#fff"/><path d="M4.5 11 L9 5.3 L11 7.6 L12.6 5.8 L16 11 Z" fill="#fff"/><text x="10" y="18.8" font-size="5.6" font-weight="bold" text-anchor="middle" fill="#1f5fd8" font-family="Liberation Sans" textLength="15" lengthAdjust="spacingAndGlyphs">WEBP</text></svg>
<div class="a t" style="left:390px;top:347px;font-size:12px;line-height:16px;color:#111;">WEBP</div>
<div class="a" style="left:345px;top:426px;width:197px;height:1px;background:#ececf0"></div>
<svg class="a" style="left:360px;top:393px" width="20" height="20" viewBox="0 0 20 20"><defs><linearGradient id="gAVIF" x1="0" y1="0" x2="0" y2="1"><stop offset="0" stop-color="#3f3de8"/><stop offset="1" stop-color="#6d7ef5"/></linearGradient></defs><path d="M4 0 H16 Q20 0 20 4 V13 H0 V4 Q0 0 4 0 Z" fill="url(#gAVIF)"/><path d="M0 13 H20 V16 Q20 20 16 20 H4 Q0 20 0 16 Z" fill="#e1e2fd"/><circle cx="5.8" cy="3.4" r="1.4" fill="#fff"/><path d="M4.5 11 L9 5.3 L11 7.6 L12.6 5.8 L16 11 Z" fill="#fff"/><text x="10" y="18.8" font-size="5.6" font-weight="bold" text-anchor="middle" fill="#3f3de8" font-family="Liberation Sans" textLength="15" lengthAdjust="spacingAndGlyphs">AVIF</text></svg>
<div class="a t" style="left:390px;top:395px;font-size:12px;line-height:16px;color:#111;">AVIF</div>
<div class="a" style="left:345px;top:474px;width:197px;height:1px;background:#ececf0"></div>
<svg class="a" style="left:360px;top:441px" width="20" height="20" viewBox="0 0 20 20"><defs><linearGradient id="gJPGS" x1="0" y1="0" x2="0" y2="1"><stop offset="0" stop-color="#6a40ee"/><stop offset="1" stop-color="#9d7bf7"/></linearGradient></defs><path d="M4 0 H16 Q20 0 20 4 V13 H0 V4 Q0 0 4 0 Z" fill="url(#gJPGS)"/><path d="M0 13 H20 V16 Q20 20 16 20 H4 Q0 20 0 16 Z" fill="#ebe2fd"/><circle cx="5.8" cy="3.4" r="1.4" fill="#fff"/><path d="M4.5 11 L9 5.3 L11 7.6 L12.6 5.8 L16 11 Z" fill="#fff"/><text x="10" y="18.8" font-size="5.6" font-weight="bold" text-anchor="middle" fill="#6a40ee" font-family="Liberation Sans" textLength="12.5" lengthAdjust="spacingAndGlyphs">JPG</text></svg>
<div class="a t" style="left:390px;top:443px;font-size:12px;line-height:16px;color:#111;">JPG 图片序列</div>
<div class="a" style="left:345px;top:522px;width:197px;height:1px;background:#ececf0"></div>
<svg class="a" style="left:360px;top:489px" width="20" height="20" viewBox="0 0 20 20"><defs><linearGradient id="gPNGS" x1="0" y1="0" x2="0" y2="1"><stop offset="0" stop-color="#3b4cf0"/><stop offset="1" stop-color="#5f8cf8"/></linearGradient></defs><path d="M4 0 H16 Q20 0 20 4 V13 H0 V4 Q0 0 4 0 Z" fill="url(#gPNGS)"/><path d="M0 13 H20 V16 Q20 20 16 20 H4 Q0 20 0 16 Z" fill="#dfe6fd"/><circle cx="5.8" cy="3.4" r="1.4" fill="#fff"/><path d="M4.5 11 L9 5.3 L11 7.6 L12.6 5.8 L16 11 Z" fill="#fff"/><text x="10" y="18.8" font-size="5.6" font-weight="bold" text-anchor="middle" fill="#3b4cf0" font-family="Liberation Sans" textLength="12.5" lengthAdjust="spacingAndGlyphs">PNG</text></svg>
<div class="a t" style="left:390px;top:491px;font-size:12px;line-height:16px;color:#111;">PNG 图片序列</div>
<div class="a" style="left:345px;top:523px;width:197px;height:48px;background:#f3eefb"></div>
<div class="a" style="left:345px;top:570px;width:197px;height:1px;background:#ececf0"></div>
<svg class="a" style="left:360px;top:537px" width="20" height="20" viewBox="0 0 20 20"><defs><linearGradient id="gGIF" x1="0" y1="0" x2="0" y2="1"><stop offset="0" stop-color="#2f6bf5"/><stop offset="1" stop-color="#4aa8fb"/></linearGradient></defs><path d="M4 0 H16 Q20 0 20 4 V13 H0 V4 Q0 0 4 0 Z" fill="url(#gGIF)"/><path d="M0 13 H20 V16 Q20 20 16 20 H4 Q0 20 0 16 Z" fill="#ddeefe"/><circle cx="5.8" cy="3.4" r="1.4" fill="#fff"/><path d="M4.5 11 L9 5.3 L11 7.6 L12.6 5.8 L16 11 Z" fill="#fff"/><text x="10" y="18.8" font-size="5.6" font-weight="bold" text-anchor="middle" fill="#2f6bf5" font-family="Liberation Sans" textLength="12.5" lengthAdjust="spacingAndGlyphs">GIF</text></svg>
<div class="a t" style="left:390px;top:539px;font-size:12px;line-height:16px;color:#111;">GIF</div>
<div class="a" style="left:345px;top:618px;width:197px;height:1px;background:#ececf0"></div>
<svg class="a" style="left:360px;top:585px" width="20" height="20" viewBox="0 0 20 20"><defs><linearGradient id="gHEIC" x1="0" y1="0" x2="0" y2="1"><stop offset="0" stop-color="#7a40ee"/><stop offset="1" stop-color="#a57bf7"/></linearGradient></defs><path d="M4 0 H16 Q20 0 20 4 V13 H0 V4 Q0 0 4 0 Z" fill="url(#gHEIC)"/><path d="M0 13 H20 V16 Q20 20 16 20 H4 Q0 20 0 16 Z" fill="#ece2fd"/><circle cx="5.8" cy="3.4" r="1.4" fill="#fff"/><path d="M4.5 11 L9 5.3 L11 7.6 L12.6 5.8 L16 11 Z" fill="#fff"/><text x="10" y="18.8" font-size="5.6" font-weight="bold" text-anchor="middle" fill="#7a40ee" font-family="Liberation Sans" textLength="15" lengthAdjust="spacingAndGlyphs">HEIC</text></svg>
<div class="a t" style="left:390px;top:587px;font-size:12px;line-height:16px;color:#111;">HEIC</div>
<div class="a" style="left:345px;top:666px;width:197px;height:1px;background:#ececf0"></div>
<svg class="a" style="left:360px;top:633px" width="20" height="20" viewBox="0 0 20 20"><defs><linearGradient id="gTIFF" x1="0" y1="0" x2="0" y2="1"><stop offset="0" stop-color="#8f4428"/><stop offset="1" stop-color="#c98a70"/></linearGradient></defs><path d="M4 0 H16 Q20 0 20 4 V13 H0 V4 Q0 0 4 0 Z" fill="url(#gTIFF)"/><path d="M0 13 H20 V16 Q20 20 16 20 H4 Q0 20 0 16 Z" fill="#f6e0d6"/><circle cx="5.8" cy="3.4" r="1.4" fill="#fff"/><path d="M4.5 11 L9 5.3 L11 7.6 L12.6 5.8 L16 11 Z" fill="#fff"/><text x="10" y="18.8" font-size="5.6" font-weight="bold" text-anchor="middle" fill="#8f4428" font-family="Liberation Sans" textLength="15" lengthAdjust="spacingAndGlyphs">TIFF</text></svg>
<div class="a t" style="left:390px;top:635px;font-size:12px;line-height:16px;color:#111;">TIFF</div>
<svg class="a" style="left:360px;top:681px" width="20" height="20" viewBox="0 0 20 20"><defs><linearGradient id="gPDFt" x1="0" y1="0" x2="1" y2="0"><stop offset="0" stop-color="#ff5f6a"/><stop offset="1" stop-color="#ff8d8a"/></linearGradient><linearGradient id="gPDFb" x1="0" y1="0" x2="1" y2="0"><stop offset="0" stop-color="#ff2f6e"/><stop offset="1" stop-color="#f5287a"/></linearGradient></defs><path d="M5 0.5 H14 L16.5 5.5 H2.5 Z" fill="url(#gPDFt)"/><path d="M1 5.5 H17.5 Q19.5 5.5 19.5 7.5 V12.5 Q19.5 14.5 17.5 14.5 H1 Z" fill="#ffe3ea"/><path d="M1 14.5 H17 L15 19.5 H5 Q3 19.5 2.3 18 Z" fill="url(#gPDFb)"/><text x="9.8" y="12.6" font-size="6" font-weight="bold" text-anchor="middle" fill="#ef3a6c" font-family="Liberation Sans" textLength="11" lengthAdjust="spacingAndGlyphs">PDF</text></svg>
<div class="a t" style="left:390px;top:683px;font-size:12px;line-height:16px;color:#111;">PDF</div>
<div class="a" style="left:543px;top:235px;width:515px;height:56px;background:#f3effb;border-bottom:1px solid #ddd6ee"></div>
<svg class="a" style="left:561px;top:254px" width="18" height="18" viewBox="0 0 18 18"><defs><linearGradient id="rg0" x1="0" y1="0" x2="0" y2="1"><stop offset="0" stop-color="#5b3ff8"/><stop offset="1" stop-color="#b38cf7"/></linearGradient></defs><rect x="0" y="0" width="18" height="18" rx="4" fill="url(#rg0)"/><circle cx="4.6" cy="5" r="1.5" fill="#fff"/><path d="M3.5 14 L8 7.8 L10 10.2 L11.6 8.3 L15 14 Z" fill="#fff"/></svg>
<div class="a t" style="left:590px;top:256px;font-size:12.2px;line-height:16px;color:#111;">与源文件相同</div>
<div class="a t" style="left:746px;top:256px;font-size:12.2px;line-height:16px;color:#111;">原始分辨率</div>
<div class="a" style="left:543px;top:346px;width:515px;height:1px;background:#ececf0"></div>
<svg class="a" style="left:561px;top:310px" width="18" height="18" viewBox="0 0 18 18"><defs><linearGradient id="rg1" x1="0" y1="0" x2="0" y2="1"><stop offset="0" stop-color="#5b3ff8"/><stop offset="1" stop-color="#b38cf7"/></linearGradient></defs><rect x="0" y="0" width="18" height="18" rx="4" fill="url(#rg1)"/><circle cx="4.6" cy="5" r="1.5" fill="#fff"/><path d="M3.5 14 L8 7.8 L10 10.2 L11.6 8.3 L15 14 Z" fill="#fff"/></svg>
<div class="a t" style="left:590px;top:312px;font-size:12.2px;line-height:16px;color:#111;">Alpha</div>
<div class="a t" style="left:746px;top:312px;font-size:12.2px;line-height:16px;color:#111;">原始分辨率</div>
<div class="a" style="left:543px;top:402px;width:515px;height:1px;background:#ececf0"></div>
<svg class="a" style="left:561px;top:366px" width="18" height="18" viewBox="0 0 18 18"><defs><linearGradient id="rg2" x1="0" y1="0" x2="0" y2="1"><stop offset="0" stop-color="#5b3ff8"/><stop offset="1" stop-color="#b38cf7"/></linearGradient></defs><rect x="0" y="0" width="18" height="18" rx="4" fill="url(#rg2)"/><circle cx="4.6" cy="5" r="1.5" fill="#fff"/><path d="M3.5 14 L8 7.8 L10 10.2 L11.6 8.3 L15 14 Z" fill="#fff"/></svg>
<div class="a t" style="left:590px;top:368px;font-size:12.2px;line-height:16px;color:#111;">HD 1080P</div>
<div class="a t" style="left:746px;top:368px;font-size:12.2px;line-height:16px;color:#111;">1920*1080</div>
<div class="a" style="left:543px;top:458px;width:515px;height:1px;background:#ececf0"></div>
<svg class="a" style="left:561px;top:422px" width="18" height="18" viewBox="0 0 18 18"><defs><linearGradient id="rg3" x1="0" y1="0" x2="0" y2="1"><stop offset="0" stop-color="#5b3ff8"/><stop offset="1" stop-color="#b38cf7"/></linearGradient></defs><rect x="0" y="0" width="18" height="18" rx="4" fill="url(#rg3)"/><circle cx="4.6" cy="5" r="1.5" fill="#fff"/><path d="M3.5 14 L8 7.8 L10 10.2 L11.6 8.3 L15 14 Z" fill="#fff"/></svg>
<div class="a t" style="left:590px;top:424px;font-size:12.2px;line-height:16px;color:#111;">HD 720P</div>
<div class="a t" style="left:746px;top:424px;font-size:12.2px;line-height:16px;color:#111;">1280*720</div>
<div class="a" style="left:543px;top:514px;width:515px;height:1px;background:#ececf0"></div>
<svg class="a" style="left:561px;top:478px" width="18" height="18" viewBox="0 0 18 18"><defs><linearGradient id="rg4" x1="0" y1="0" x2="0" y2="1"><stop offset="0" stop-color="#5b3ff8"/><stop offset="1" stop-color="#b38cf7"/></linearGradient></defs><rect x="0" y="0" width="18" height="18" rx="4" fill="url(#rg4)"/><circle cx="4.6" cy="5" r="1.5" fill="#fff"/><path d="M3.5 14 L8 7.8 L10 10.2 L11.6 8.3 L15 14 Z" fill="#fff"/></svg>
<div class="a t" style="left:590px;top:480px;font-size:12.2px;line-height:16px;color:#111;">SD 480P</div>
<div class="a t" style="left:746px;top:480px;font-size:12.2px;line-height:16px;color:#111;">854*480</div>
<div class="a" style="left:543px;top:570px;width:515px;height:1px;background:#ececf0"></div>
<svg class="a" style="left:561px;top:534px" width="18" height="18" viewBox="0 0 18 18"><defs><linearGradient id="rg5" x1="0" y1="0" x2="0" y2="1"><stop offset="0" stop-color="#5b3ff8"/><stop offset="1" stop-color="#b38cf7"/></linearGradient></defs><rect x="0" y="0" width="18" height="18" rx="4" fill="url(#rg5)"/><circle cx="4.6" cy="5" r="1.5" fill="#fff"/><path d="M3.5 14 L8 7.8 L10 10.2 L11.6 8.3 L15 14 Z" fill="#fff"/></svg>
<div class="a t" style="left:590px;top:536px;font-size:12.2px;line-height:16px;color:#111;">SD 360P</div>
<div class="a t" style="left:746px;top:536px;font-size:12.2px;line-height:16px;color:#111;">640*360</div>
<div class="a" style="left:543px;top:626px;width:515px;height:1px;background:#ececf0"></div>
<svg class="a" style="left:561px;top:590px" width="18" height="18" viewBox="0 0 18 18"><defs><linearGradient id="rg6" x1="0" y1="0" x2="0" y2="1"><stop offset="0" stop-color="#5b3ff8"/><stop offset="1" stop-color="#b38cf7"/></linearGradient></defs><rect x="0" y="0" width="18" height="18" rx="4" fill="url(#rg6)"/><circle cx="4.6" cy="5" r="1.5" fill="#fff"/><path d="M3.5 14 L8 7.8 L10 10.2 L11.6 8.3 L15 14 Z" fill="#fff"/></svg>
<div class="a t" style="left:590px;top:592px;font-size:12.2px;line-height:16px;color:#111;">96P</div>
<div class="a t" style="left:746px;top:592px;font-size:12.2px;line-height:16px;color:#111;">128*96</div>
<div class="a" style="left:542px;top:235px;width:1px;height:468px;background:#ececf0"></div>
<div class="a" style="left:340px;top:205px;width:724px;height:502px;border:5px solid #fd7a24;border-radius:3px"></div>
<div class="a" style="left:491px;top:205px;width:42px;height:31px;border:5px solid #fd7a24;border-radius:3px"></div>
<div class="a" style="left:340px;top:521px;width:209px;height:52px;border:5px solid #fd7a24;border-radius:3px"></div>
<div class="a" style="left:256px;top:704px;width:201px;height:38px;border:5px solid #fd7a24;border-radius:3px"></div>
<div class="a" style="left:0px;top:0px;width:11px;height:11px;background:radial-gradient(circle at 100% 100%,rgba(0,0,0,0) 10.2px,#d4d4d6 10.8px,#ececee 13px)"></div>
<div class="a" style="left:1259px;top:0px;width:11px;height:11px;background:radial-gradient(circle at 0% 100%,rgba(0,0,0,0) 10.2px,#d4d4d6 10.8px,#ececee 13px)"></div>
<div class="a" style="left:0px;top:748px;width:11px;height:11px;background:radial-gradient(circle at 100% 0%,rgba(0,0,0,0) 10.2px,#d4d4d6 10.8px,#ececee 13px)"></div>
<div class="a" style="left:1259px;top:748px;width:11px;height:11px;background:radial-gradient(circle at 0% 0%,rgba(0,0,0,0) 10.2px,#d4d4d6 10.8px,#ececee 13px)"></div>
</body></html>
